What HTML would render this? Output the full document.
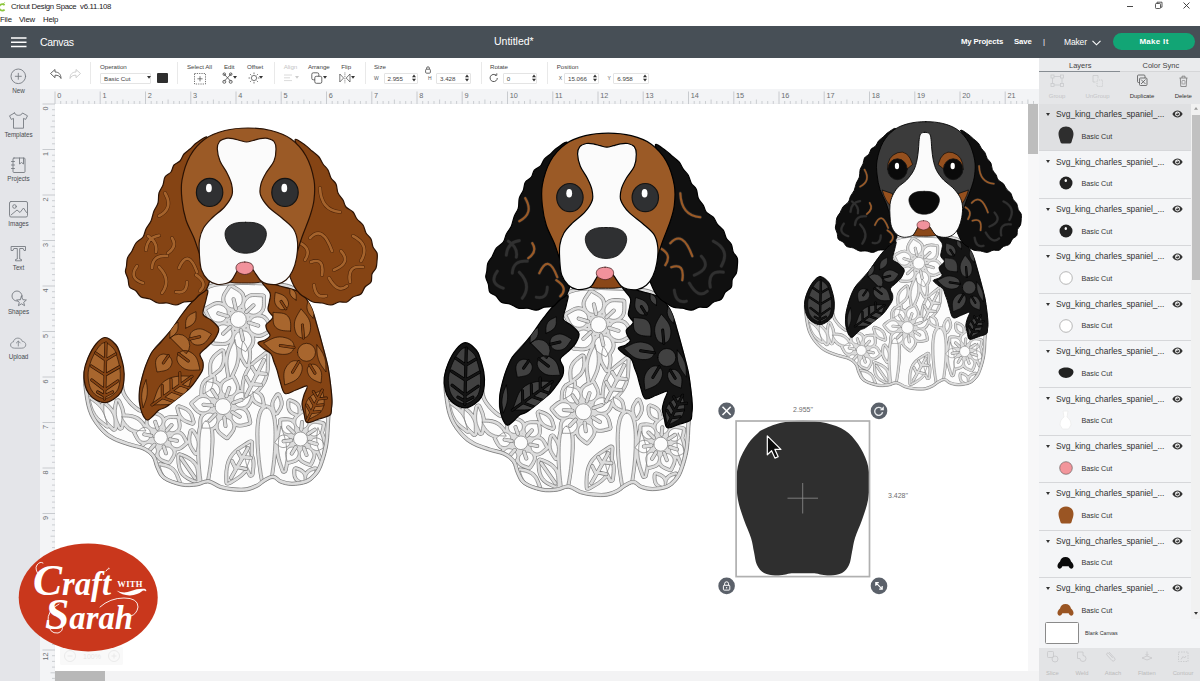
<!DOCTYPE html>
<html lang="en">
<head>
<meta charset="utf-8">
<title>Cricut Design Space</title>
<style>
*{box-sizing:border-box;margin:0;padding:0}
html,body{width:1200px;height:681px;overflow:hidden;background:#fff;font-family:"Liberation Sans",sans-serif;color:#333}
.abs{position:absolute}
#titlebar{left:0;top:0;width:1200px;height:26.300px;background:#fff}
#titlebar .t{left:11px;top:1.5px;font-size:7.8px;color:#222;line-height:10px;letter-spacing:-0.3px;white-space:nowrap}
#titlebar .m{top:15px;font-size:7.8px;color:#222;line-height:10px;letter-spacing:-0.2px}
#header{left:0;top:26.300px;width:1200px;height:31.400px;background:#474f56}
#header .canvas{left:40px;top:9.3px;font-size:10.5px;color:#fff;line-height:12px;letter-spacing:-0.3px}
#header .title{left:494px;top:9px;font-size:10.5px;color:#fff;line-height:12px}
#header .lnk{top:10.5px;font-size:7.8px;color:#fff;line-height:10px;font-weight:bold;letter-spacing:-0.15px}
#makeit{left:1113px;top:7px;width:82px;height:17px;border-radius:9px;background:#12a575;color:#fff;font-size:8px;font-weight:bold;text-align:center;line-height:17px;letter-spacing:.3px}
#sidebar{left:0;top:58px;width:40px;height:623px;background:#e4e5e9}
#sidebar .lbl{left:0;width:37px;text-align:center;font-size:6.3px;letter-spacing:-0.05px;color:#484c50;line-height:7px}
#toolbar{left:40px;top:58px;width:999px;height:30px;background:#fff}
#toolbar .lab{font-size:6.2px;color:#444;line-height:7px;top:4.5px;white-space:nowrap;letter-spacing:-0.05px}
#toolbar .inp{top:15px;height:10.5px;border:0.6px solid #e4e4e4;border-radius:1px;font-size:6.2px;line-height:9.5px;color:#444;padding-left:3px;background:#fff}
#toolbar .sm{font-size:5px;color:#555;line-height:7px;top:17.3px}
#toolbar .sep{top:4px;width:1px;height:22px;background:#e9e9e9}
#hruler{left:40px;top:88.500px;width:999px;height:15.800px;background:#f3f4f6}
#vruler{left:40px;top:104px;width:15.300px;height:577px;background:#f3f4f6}
#canvas{left:55px;top:104px;width:973px;height:567px;background:#fff}
#vscroll{left:1028px;top:104px;width:11px;height:567px;background:#f7f7f8}
#vscroll .th{left:0.300px;top:0;width:10.200px;height:50.300px;background:#bdbdbd}
#hscroll{left:55px;top:670.500px;width:984px;height:10.500px;background:#f3f3f4}
#hscroll .th{left:0;top:0.300px;width:50.300px;height:10.200px;background:#b8b8b8}
#panel{left:1039px;top:57.700px;width:161px;height:623.300px;background:#e5e6e8}
#panel .tab{top:3.3px;font-size:7.5px;color:#444;line-height:9px}
#panel .act{top:35px;font-size:6px;letter-spacing:-0.05px;line-height:7px;color:#333;text-align:center;width:40px}
.layer{left:0;width:152px;height:47.4px;border-bottom:1px solid #d6d7da;background:#f4f5f7}
.layer.sel{background:#dfe0e2}
.layer .nm{left:17px;top:5.3px;font-size:8.45px;color:#333;line-height:10px;letter-spacing:-0.05px;white-space:nowrap}
.layer .bc{left:42.500px;top:28.800px;font-size:7.2px;color:#333;line-height:8px}
.layer .tri{left:6.5px;top:9px;width:0;height:0;border-left:2.2px solid transparent;border-right:2.2px solid transparent;border-top:3px solid #333}
#pscroll{left:1191px;top:104px;width:9px;height:515px;background:#f1f1f1}
#pscroll .th{left:0.800px;top:11.700px;width:8.200px;height:164.500px;background:#c1c1c1}
#blank{left:0;top:561px;width:161px;height:29.5px;background:#f4f5f7}
#bottomacts{left:0;top:590.5px;width:161px;height:32.5px;background:#e3e4e6}
#bottomacts .a{top:21.500px;font-size:5.800px;color:#bbb;line-height:7px;width:30px;text-align:center}
svg{position:absolute;overflow:visible}
</style>
</head>
<body>
<div id="titlebar" class="abs">
  <svg style="left:-3.500px;top:2px" width="10" height="10" viewBox="0 0 10 10"><path d="M7.600 3.200A3.200 3.200 0 1 0 7.600 7.600" fill="none" stroke="#8cc63f" stroke-width="1.700"/><path d="M5.500 2.800L7.800 0.300" stroke="#8cc63f" stroke-width="0.800" fill="none"/></svg>
  <div class="abs t">Cricut Design Space&nbsp; v6.11.108</div>
  <div class="abs m" style="left:0">File</div><div class="abs m" style="left:19px">View</div><div class="abs m" style="left:43px">Help</div>
  <svg style="left:1125px;top:0" width="75" height="12" viewBox="0 0 75 12"><path d="M2 6.5h6" stroke="#333" stroke-width="0.9"/><rect x="30.5" y="3.5" width="5" height="5" fill="none" stroke="#333" stroke-width="0.8" rx="0.8"/><path d="M32 3.5v-1.3h5v5h-1.5" fill="none" stroke="#333" stroke-width="0.8"/><path d="M58.500 2.500l6 6m0-6l-6 6" stroke="#333" stroke-width="0.9"/></svg>
</div>
<div id="header" class="abs">
  <svg style="left:11px;top:11px" width="16" height="11" viewBox="0 0 16 11"><path d="M0 1h15.500M0 5.300h15.500M0 9.600h15.500" stroke="#fff" stroke-width="1.500"/></svg>
  <div class="abs canvas">Canvas</div>
  <div class="abs title">Untitled*</div>
  <div class="abs lnk" style="left:961px">My Projects</div>
  <div class="abs lnk" style="left:1014px">Save</div>
  <div class="abs lnk" style="left:1043px;font-weight:normal">|</div>
  <div class="abs lnk" style="left:1064px;font-weight:normal;font-size:8.500px">Maker</div>
  <svg style="left:1092px;top:14px" width="9" height="6" viewBox="0 0 9 6"><path d="M0.500 0.800L4.500 4.800L8.500 0.800" fill="none" stroke="#fff" stroke-width="1.100"/></svg>
  <div id="makeit" class="abs">Make It</div>
</div>
<div id="sidebar" class="abs">
<svg style="left:0;top:0" width="40" height="330" viewBox="0 58 40 330" fill="none" stroke="#767b81" stroke-width="0.9" stroke-linecap="round" stroke-linejoin="round"><circle cx="18.300" cy="76.300" r="7.300"/><path d="M15.300 76.300h6M18.300 73.300v6"/><path d="M14.500 113l-5 2.800 1.800 3.600 2.200-1v9.800h10v-9.800l2.200 1 1.800-3.600-5-2.800c-.8 1.700-2 2.300-4 2.300s-3.200-.6-4-2.300z"/><rect x="13" y="158" width="12" height="14.500" rx="1"/><path d="M19.500 158v6l2-1.500 2 1.500v-6M11.500 161.500h3M11.500 165h3M11.500 168.500h3"/><rect x="9.500" y="201.500" width="18" height="15.500" rx="1.500"/><circle cx="14.500" cy="206.500" r="1.800"/><path d="M11 215l6-5 3 2.500 3.500-4.500 3 4.500"/><path d="M11.500 246.500h14v4h-1.500l-.8-2h-3.500v10.500l1.800.5v1.300h-6v-1.300l1.800-.5v-10.500h-3.500l-.8 2h-1.500z"/><circle cx="17" cy="296" r="5"/><path d="M21.500 296.500l1.400 3.200 3.500.3-2.700 2.300.9 3.400-3.100-1.900-3.100 1.900.9-3.400-2.700-2.300 3.500-.3z" fill="#e4e5e9"/><g transform="translate(18.300 343) scale(0.86) translate(-18.300 -343)"><path d="M13.500 349c-2.500 0-4.200-1.600-4.200-3.700 0-2 1.500-3.400 3.300-3.600.4-2.600 2.500-4.400 5.200-4.400 2.500 0 4.500 1.500 5.100 3.800 2.300.1 4.100 1.800 4.100 4 0 2.200-1.800 3.900-4.200 3.900z"/><path d="M18.300 346.500v-5.500M16 343l2.300-2.300 2.300 2.300"/></g></svg>
<div class="abs lbl" style="top:29.099999999999998px">New</div>
<div class="abs lbl" style="top:73.3px">Templates</div>
<div class="abs lbl" style="top:117.3px">Projects</div>
<div class="abs lbl" style="top:161.8px">Images</div>
<div class="abs lbl" style="top:205.8px">Text</div>
<div class="abs lbl" style="top:250.3px">Shapes</div>
<div class="abs lbl" style="top:294.8px">Upload</div>
</div>
<div id="toolbar" class="abs">
<svg style="left:9px;top:10px" width="34" height="12" viewBox="49 68 34 12" fill="none" stroke-linejoin="round" stroke-width="0.9"><path d="M50.500 73.500l4.500-4v2.500c3.500 0 6 2 6 6.500-1.200-2.500-3-3.300-6-3.300v2.500z" stroke="#555"/><path d="M80.500 73.500l-4.500-4v2.500c-3.500 0-6 2-6 6.500 1.200-2.500 3-3.300 6-3.300v2.500z" stroke="#c8c8c8"/></svg>
<div class="abs sep" style="left:50px"></div>
<div class="abs lab" style="left:60px;">Operation</div>
<div class="abs inp" style="left:60px;width:51px">Basic Cut</div>
<svg style="left:106.5px;top:17.5px" width="4" height="3" viewBox="0 0 4 3"><path d="M0 0h4L2 2.800z" fill="#333"/></svg>
<div class="abs" style="left:116.700px;top:14.500px;width:11.300px;height:10.700px;background:#2f2f2f;border-radius:1px"></div>
<div class="abs sep" style="left:137px"></div>
<div class="abs lab" style="left:147px;">Select All</div>
<svg style="left:153.500px;top:14.500px" width="12" height="11.500" viewBox="0 0 12 11.500" fill="none" stroke="#444" stroke-width="0.700"><rect x="0.500" y="0.500" width="11" height="10.500" stroke-dasharray="1.300 1"/><path d="M6 3.200v5.200M3.400 5.800h5.200"/></svg>
<div class="abs lab" style="left:184px;">Edit</div>
<svg style="left:182px;top:14px" width="11" height="12" viewBox="0 0 11 12" fill="none" stroke="#444" stroke-width="0.800"><path d="M1.500 1.500l7.500 8M9.500 1.500l-7.500 8"/><circle cx="2.300" cy="9.800" r="1.500"/><circle cx="8.700" cy="9.800" r="1.500"/><circle cx="2.300" cy="2.200" r="1.300"/><circle cx="8.700" cy="2.200" r="1.300"/></svg>
<svg style="left:193px;top:17.5px" width="4" height="3" viewBox="0 0 4 3"><path d="M0 0h4L2 2.800z" fill="#333"/></svg>
<div class="abs lab" style="left:207px;">Offset</div>
<svg style="left:207.500px;top:14px" width="12" height="12" viewBox="0 0 12 12" fill="none" stroke="#444" stroke-width="0.700"><circle cx="6" cy="6" r="2.600"/><path d="M6 0.500v1.700M6 9.800v1.700M0.500 6h1.700M9.800 6h1.700M2.100 2.100l1.200 1.200M8.700 8.700l1.200 1.200M2.100 9.900l1.200-1.200M8.700 3.300l1.200-1.200"/></svg>
<svg style="left:218.5px;top:17.5px" width="4" height="3" viewBox="0 0 4 3"><path d="M0 0h4L2 2.800z" fill="#333"/></svg>
<div class="abs sep" style="left:233.7px"></div>
<div class="abs lab" style="left:243.7px;color:#c4c4c4">Align</div>
<svg style="left:244px;top:16px" width="9" height="8" viewBox="0 0 9 8" stroke="#d0d0d0" stroke-width="0.800"><path d="M0 1h8M0 3.800h6M0 6.600h8"/></svg>
<svg style="left:255px;top:17.5px" width="4" height="3" viewBox="0 0 4 3"><path d="M0 0h4L2 2.800z" fill="#ccc"/></svg>
<div class="abs lab" style="left:268px;">Arrange</div>
<svg style="left:271px;top:14px" width="12" height="13" viewBox="0 0 12 13" fill="#fff" stroke="#444" stroke-width="0.800"><rect x="0.800" y="0.800" width="7" height="7" rx="1.500"/><rect x="3.800" y="4.300" width="7" height="7" rx="1.500"/></svg>
<svg style="left:282.5px;top:17.5px" width="4" height="3" viewBox="0 0 4 3"><path d="M0 0h4L2 2.800z" fill="#333"/></svg>
<div class="abs lab" style="left:301.3px;">Flip</div>
<svg style="left:298.500px;top:14px" width="12" height="12" viewBox="0 0 12 12" fill="none" stroke="#444" stroke-width="0.700"><path d="M0.800 2l3.800 4-3.800 4zM11 2L7.200 6 11 10z"/><path d="M5.900 0.500v11" stroke-dasharray="1 0.800"/></svg>
<svg style="left:310.5px;top:17.5px" width="4" height="3" viewBox="0 0 4 3"><path d="M0 0h4L2 2.800z" fill="#333"/></svg>
<div class="abs sep" style="left:324.5px"></div>
<div class="abs lab" style="left:334px;">Size</div>
<div class="abs sm" style="left:334px">W</div>
<div class="abs inp" style="left:343.5px;width:34px">2.955</div>
<svg style="left:372px;top:16.300px" width="4" height="8" viewBox="0 0 4 8"><path d="M0 3.200L2 0.600 4 3.200zM0 4.800L2 7.400 4 4.800z" fill="#333"/></svg>
<svg style="left:384.800px;top:8px" width="6" height="8" viewBox="0 0 6 8" fill="none" stroke="#444" stroke-width="0.800"><rect x="0.600" y="3.200" width="4.800" height="4" rx="1"/><path d="M1.600 3.200v-1a1.400 1.400 0 0 1 2.800 0v1"/></svg>
<div class="abs sm" style="left:388px">H</div>
<div class="abs inp" style="left:396px;width:34.7px">3.428</div>
<svg style="left:425px;top:16.300px" width="4" height="8" viewBox="0 0 4 8"><path d="M0 3.200L2 0.600 4 3.200zM0 4.800L2 7.400 4 4.800z" fill="#333"/></svg>
<div class="abs sep" style="left:440.5px"></div>
<div class="abs lab" style="left:450px;">Rotate</div>
<svg style="left:449px;top:15px" width="10" height="10" viewBox="0 0 10 10" fill="none" stroke="#444" stroke-width="0.900"><path d="M8.300 5a3.600 3.600 0 1 1-1.200-2.700"/><path d="M5.800 2.300h2v-2" stroke-width="0.800"/></svg>
<div class="abs inp" style="left:462.7px;width:34.6px">0</div>
<svg style="left:491.5px;top:16.300px" width="4" height="8" viewBox="0 0 4 8"><path d="M0 3.200L2 0.600 4 3.200zM0 4.800L2 7.400 4 4.800z" fill="#333"/></svg>
<div class="abs sep" style="left:506.70000000000005px"></div>
<div class="abs lab" style="left:516.8px;">Position</div>
<div class="abs sm" style="left:518.7px">X</div>
<div class="abs inp" style="left:524px;width:34.7px">15.066</div>
<svg style="left:553px;top:16.300px" width="4" height="8" viewBox="0 0 4 8"><path d="M0 3.200L2 0.600 4 3.200zM0 4.800L2 7.400 4 4.800z" fill="#333"/></svg>
<div class="abs sm" style="left:567.5px">Y</div>
<div class="abs inp" style="left:573.3px;width:35.5px">6.958</div>
<svg style="left:603px;top:16.300px" width="4" height="8" viewBox="0 0 4 8"><path d="M0 3.200L2 0.600 4 3.200zM0 4.800L2 7.400 4 4.800z" fill="#333"/></svg>
</div>
<div id="hruler" class="abs"></div><div id="vruler" class="abs"></div>
<svg style="left:0;top:0" width="1200" height="681" viewBox="0 0 1200 681">
<path d="M60.7 104.500v-3.500M66.3 104.500v-3.500M72.0 104.500v-3.500M77.6 104.500v-5M83.3 104.500v-3.500M88.9 104.500v-3.500M94.6 104.500v-3.500M105.9 104.500v-3.500M111.6 104.500v-3.500M117.2 104.500v-3.500M122.9 104.500v-5M128.5 104.500v-3.500M134.2 104.500v-3.500M139.8 104.500v-3.500M151.2 104.500v-3.500M156.8 104.500v-3.500M162.5 104.500v-3.500M168.1 104.500v-5M173.8 104.500v-3.500M179.4 104.500v-3.500M185.1 104.500v-3.500M196.4 104.500v-3.500M202.1 104.500v-3.500M207.7 104.500v-3.500M213.4 104.500v-5M219.0 104.500v-3.500M224.7 104.500v-3.500M230.3 104.500v-3.500M241.7 104.500v-3.500M247.3 104.500v-3.500M253.0 104.500v-3.500M258.6 104.500v-5M264.3 104.500v-3.500M269.9 104.500v-3.500M275.6 104.500v-3.500M286.9 104.500v-3.500M292.6 104.500v-3.500M298.2 104.500v-3.500M303.9 104.500v-5M309.5 104.500v-3.500M315.2 104.500v-3.500M320.8 104.500v-3.500M332.2 104.500v-3.500M337.8 104.500v-3.500M343.5 104.500v-3.500M349.1 104.500v-5M354.8 104.500v-3.500M360.4 104.500v-3.500M366.1 104.500v-3.500M377.4 104.500v-3.500M383.1 104.500v-3.500M388.7 104.500v-3.500M394.4 104.500v-5M400.0 104.500v-3.500M405.7 104.500v-3.500M411.3 104.500v-3.500M422.7 104.500v-3.500M428.3 104.500v-3.500M434.0 104.500v-3.500M439.6 104.500v-5M445.3 104.500v-3.500M450.9 104.500v-3.500M456.6 104.500v-3.500M467.9 104.500v-3.500M473.6 104.500v-3.500M479.2 104.500v-3.500M484.9 104.500v-5M490.5 104.500v-3.500M496.2 104.500v-3.500M501.8 104.500v-3.500M513.2 104.500v-3.500M518.8 104.500v-3.500M524.5 104.500v-3.500M530.1 104.500v-5M535.8 104.500v-3.500M541.4 104.500v-3.500M547.1 104.500v-3.500M558.4 104.500v-3.500M564.1 104.500v-3.500M569.7 104.500v-3.500M575.4 104.500v-5M581.0 104.500v-3.500M586.7 104.500v-3.500M592.3 104.500v-3.500M603.7 104.500v-3.500M609.3 104.500v-3.500M615.0 104.500v-3.500M620.6 104.500v-5M626.3 104.500v-3.500M631.9 104.500v-3.500M637.6 104.500v-3.500M648.9 104.500v-3.500M654.6 104.500v-3.500M660.2 104.500v-3.500M665.9 104.500v-5M671.5 104.500v-3.500M677.2 104.500v-3.500M682.8 104.500v-3.500M694.2 104.500v-3.500M699.8 104.500v-3.500M705.5 104.500v-3.500M711.1 104.500v-5M716.8 104.500v-3.500M722.4 104.500v-3.500M728.1 104.500v-3.500M739.4 104.500v-3.500M745.1 104.500v-3.500M750.7 104.500v-3.500M756.4 104.500v-5M762.0 104.500v-3.500M767.7 104.500v-3.500M773.3 104.500v-3.500M784.7 104.500v-3.500M790.3 104.500v-3.500M796.0 104.500v-3.500M801.6 104.500v-5M807.3 104.500v-3.500M812.9 104.500v-3.500M818.6 104.500v-3.500M829.9 104.500v-3.500M835.6 104.500v-3.500M841.2 104.500v-3.500M846.9 104.500v-5M852.5 104.500v-3.500M858.2 104.500v-3.500M863.8 104.500v-3.500M875.2 104.500v-3.500M880.8 104.500v-3.500M886.5 104.500v-3.500M892.1 104.500v-5M897.8 104.500v-3.500M903.4 104.500v-3.500M909.1 104.500v-3.500M920.4 104.500v-3.500M926.1 104.500v-3.500M931.7 104.500v-3.500M937.4 104.500v-5M943.0 104.500v-3.500M948.7 104.500v-3.500M954.3 104.500v-3.500M965.7 104.500v-3.500M971.3 104.500v-3.500M977.0 104.500v-3.500M982.6 104.500v-5M988.3 104.500v-3.500M993.9 104.500v-3.500M999.6 104.500v-3.500M1010.9 104.500v-3.500M1016.6 104.500v-3.500M1022.2 104.500v-3.500M1027.9 104.500v-5M1033.5 104.500v-3.500M55.500 109.7h-3.500M55.500 115.4h-3.500M55.500 121.1h-3.500M55.500 126.8h-5M55.500 132.4h-3.500M55.500 138.1h-3.500M55.500 143.8h-3.500M55.500 155.2h-3.500M55.500 160.9h-3.500M55.500 166.6h-3.500M55.500 172.2h-5M55.500 177.9h-3.500M55.500 183.6h-3.500M55.500 189.3h-3.500M55.500 200.7h-3.500M55.500 206.4h-3.500M55.500 212.1h-3.500M55.500 217.8h-5M55.500 223.4h-3.500M55.500 229.1h-3.500M55.500 234.8h-3.500M55.500 246.2h-3.500M55.500 251.9h-3.500M55.500 257.6h-3.500M55.500 263.2h-5M55.500 268.9h-3.500M55.500 274.6h-3.500M55.500 280.3h-3.500M55.500 291.7h-3.500M55.500 297.4h-3.500M55.500 303.1h-3.500M55.500 308.8h-5M55.500 314.4h-3.500M55.500 320.1h-3.500M55.500 325.8h-3.500M55.500 337.2h-3.500M55.500 342.9h-3.500M55.500 348.6h-3.500M55.500 354.2h-5M55.500 359.9h-3.500M55.500 365.6h-3.500M55.500 371.3h-3.500M55.500 382.7h-3.500M55.500 388.4h-3.500M55.500 394.1h-3.500M55.500 399.8h-5M55.500 405.4h-3.500M55.500 411.1h-3.500M55.500 416.8h-3.500M55.500 428.2h-3.500M55.500 433.9h-3.500M55.500 439.6h-3.500M55.500 445.2h-5M55.500 450.9h-3.500M55.500 456.6h-3.500M55.500 462.3h-3.500M55.500 473.7h-3.500M55.500 479.4h-3.500M55.500 485.1h-3.500M55.500 490.8h-5M55.500 496.4h-3.500M55.500 502.1h-3.500M55.500 507.8h-3.500M55.500 519.2h-3.500M55.500 524.9h-3.500M55.500 530.6h-3.500M55.500 536.2h-5M55.500 541.9h-3.500M55.500 547.6h-3.500M55.500 553.3h-3.500M55.500 564.7h-3.500M55.500 570.4h-3.500M55.500 576.1h-3.500M55.500 581.8h-5M55.500 587.4h-3.500M55.500 593.1h-3.500M55.500 598.8h-3.500M55.500 610.2h-3.500M55.500 615.9h-3.500M55.500 621.6h-3.500M55.500 627.2h-5M55.500 632.9h-3.500M55.500 638.6h-3.500M55.500 644.3h-3.500M55.500 655.7h-3.500M55.500 661.4h-3.500M55.500 667.1h-3.500M55.500 672.8h-5M55.500 678.4h-3.500" stroke="#b9bdc2" stroke-width="0.700" fill="none"/>
<path d="M55 104.200H1039M55.200 104V681" stroke="#dfe1e5" stroke-width="0.600" fill="none"/>
<path d="M55.0 104v-12.500M100.2 104v-12.500M145.5 104v-12.500M190.8 104v-12.500M236.0 104v-12.500M281.2 104v-12.500M326.5 104v-12.500M371.8 104v-12.500M417.0 104v-12.500M462.2 104v-12.500M507.5 104v-12.500M552.8 104v-12.500M598.0 104v-12.500M643.2 104v-12.500M688.5 104v-12.500M733.8 104v-12.500M779.0 104v-12.500M824.2 104v-12.500M869.5 104v-12.500M914.8 104v-12.500M960.0 104v-12.500M1005.2 104v-12.500M55 104.0h-12.500M55 149.5h-12.500M55 195.0h-12.500M55 240.5h-12.500M55 286.0h-12.500M55 331.5h-12.500M55 377.0h-12.500M55 422.5h-12.500M55 468.0h-12.500M55 513.5h-12.500M55 559.0h-12.500M55 604.5h-12.500M55 650.0h-12.500" stroke="#bcc0c5" stroke-width="0.800" fill="none"/>
<g font-family="Liberation Sans, sans-serif" font-size="7.300" fill="#6a6e72">
<text x="57.3" y="98">0</text>
<text x="102.5" y="98">1</text>
<text x="147.8" y="98">2</text>
<text x="193.1" y="98">3</text>
<text x="238.3" y="98">4</text>
<text x="283.6" y="98">5</text>
<text x="328.8" y="98">6</text>
<text x="374.1" y="98">7</text>
<text x="419.3" y="98">8</text>
<text x="464.6" y="98">9</text>
<text x="509.8" y="98">10</text>
<text x="555.0" y="98">11</text>
<text x="600.3" y="98">12</text>
<text x="645.5" y="98">13</text>
<text x="690.8" y="98">14</text>
<text x="736.0" y="98">15</text>
<text x="781.3" y="98">16</text>
<text x="826.5" y="98">17</text>
<text x="871.8" y="98">18</text>
<text x="917.0" y="98">19</text>
<text x="962.3" y="98">20</text>
<text x="1007.5" y="98">21</text>
<text transform="translate(48.300,110.5) rotate(-90)">0</text>
<text transform="translate(48.300,156.0) rotate(-90)">1</text>
<text transform="translate(48.300,201.5) rotate(-90)">2</text>
<text transform="translate(48.300,247.0) rotate(-90)">3</text>
<text transform="translate(48.300,292.5) rotate(-90)">4</text>
<text transform="translate(48.300,338.0) rotate(-90)">5</text>
<text transform="translate(48.300,383.5) rotate(-90)">6</text>
<text transform="translate(48.300,429.0) rotate(-90)">7</text>
<text transform="translate(48.300,474.5) rotate(-90)">8</text>
<text transform="translate(48.300,520.0) rotate(-90)">9</text>
<text transform="translate(48.300,569.5) rotate(-90)">10</text>
<text transform="translate(48.300,615.0) rotate(-90)">11</text>
<text transform="translate(48.300,660.5) rotate(-90)">12</text>
</g></svg>
<div id="canvas" class="abs"></div>
<div id="vscroll" class="abs"><div class="abs th"></div></div>
<div id="hscroll" class="abs"><div class="abs th"></div></div>
<div id="panel" class="abs">
<div class="abs" style="left:0;top:0;width:161px;height:14px;background:#eaebed"></div>
<div class="abs tab" style="left:30px">Layers</div><div class="abs tab" style="left:103.500px">Color Sync</div>
<div class="abs" style="left:0;top:13px;width:81px;height:1.200px;background:#868c92"></div>
<div class="abs" style="left:81px;top:13.600px;width:80px;height:0.600px;background:#d5d6d8"></div>
<svg style="left:0;top:14px" width="161" height="32" viewBox="1039 72 161 32" fill="none" stroke-width="0.800"><g stroke="#c9cacc"><rect x="1052.500" y="76.500" width="9.500" height="8.500"/><rect x="1051" y="75" width="3" height="3" fill="#e5e6e8"/><rect x="1060.500" y="75" width="3" height="3" fill="#e5e6e8"/><rect x="1051" y="83.500" width="3" height="3" fill="#e5e6e8"/><rect x="1060.500" y="83.500" width="3" height="3" fill="#e5e6e8"/><path d="M1093 75.500h5v3M1093 75.500v6.500h2.500"/><path d="M1097 80h5.500v6.500h-5.500z" stroke-dasharray="1.200 0.800"/></g><g stroke="#555"><rect x="1137.500" y="75" width="7.500" height="7.500" rx="1"/><rect x="1139.500" y="78" width="7.500" height="7.500" rx="1" fill="#e5e6e8"/><path d="M1141 79.500l4.500 4.500M1145.500 79.500l-4.500 4.500"/></g><g stroke="#777"><path d="M1179.500 78h8M1180.300 78l.5 8.500h5.400l.5-8.500M1182 78v-1.800h3v1.800"/><rect x="1182" y="80.500" width="3" height="3.500" rx="0.500" stroke-width="0.600"/></g></svg>
<div class="abs act" style="left:-2px;color:#c4c5c7">Group</div>
<div class="abs act" style="left:38.5px;color:#c4c5c7">UnGroup</div>
<div class="abs act" style="left:83px;color:#333">Duplicate</div>
<div class="abs act" style="left:124.29999999999995px;color:#333">Delete</div>
<div class="abs" style="left:0;top:46.300px;width:152px;height:514.700px;overflow:hidden">
<div class="abs layer sel" style="top:0.0px"><div class="abs tri"></div><div class="abs nm">Svg_king_charles_spaniel_...</div><svg style="left:133px;top:6.500px" width="11" height="8" viewBox="0 0 11 8"><path d="M0.300 4C2 1.300 3.800 0.500 5.500 0.500S9 1.300 10.700 4C9 6.700 7.200 7.500 5.500 7.500S2 6.700 0.300 4z" fill="#333"/><circle cx="5.500" cy="4" r="2.400" fill="#fff"/><circle cx="5.500" cy="4" r="1.500" fill="#333"/><circle cx="4.900" cy="3.400" r="0.600" fill="#fff"/></svg><svg style="left:18.500px;top:22.500px" width="16" height="18" viewBox="0 0 16 18"><path d="M8 0.500C3.500 0.500 0.500 3.500 0.500 8c0 3 1.300 5 1.800 7.500 0.300 1.500 1 2 2.500 2h6.400c1.500 0 2.200-.5 2.500-2 .5-2.500 1.800-4.500 1.800-7.500C15.500 3.500 12.500 0.500 8 0.500z" fill="#2e2e2e"/></svg><div class="abs bc">Basic Cut</div></div>
<div class="abs layer" style="top:47.4px"><div class="abs tri"></div><div class="abs nm">Svg_king_charles_spaniel_...</div><svg style="left:133px;top:6.500px" width="11" height="8" viewBox="0 0 11 8"><path d="M0.300 4C2 1.300 3.800 0.500 5.500 0.500S9 1.300 10.700 4C9 6.700 7.200 7.500 5.500 7.500S2 6.700 0.300 4z" fill="#333"/><circle cx="5.500" cy="4" r="2.400" fill="#fff"/><circle cx="5.500" cy="4" r="1.500" fill="#333"/><circle cx="4.900" cy="3.400" r="0.600" fill="#fff"/></svg><svg style="left:20px;top:25px" width="14" height="14" viewBox="0 0 14 14"><circle cx="7" cy="7" r="6.500" fill="#222"/><ellipse cx="6.800" cy="4.500" rx="1.200" ry="1.600" fill="#fff"/></svg><div class="abs bc">Basic Cut</div></div>
<div class="abs layer" style="top:94.8px"><div class="abs tri"></div><div class="abs nm">Svg_king_charles_spaniel_...</div><svg style="left:133px;top:6.500px" width="11" height="8" viewBox="0 0 11 8"><path d="M0.300 4C2 1.300 3.800 0.500 5.500 0.500S9 1.300 10.700 4C9 6.700 7.200 7.500 5.500 7.500S2 6.700 0.300 4z" fill="#333"/><circle cx="5.500" cy="4" r="2.400" fill="#fff"/><circle cx="5.500" cy="4" r="1.500" fill="#333"/><circle cx="4.900" cy="3.400" r="0.600" fill="#fff"/></svg><svg style="left:20px;top:25px" width="14" height="14" viewBox="0 0 14 14"><circle cx="7" cy="7" r="6.500" fill="#222"/><ellipse cx="6.800" cy="4.500" rx="1.200" ry="1.600" fill="#fff"/></svg><div class="abs bc">Basic Cut</div></div>
<div class="abs layer" style="top:142.2px"><div class="abs tri"></div><div class="abs nm">Svg_king_charles_spaniel_...</div><svg style="left:133px;top:6.500px" width="11" height="8" viewBox="0 0 11 8"><path d="M0.300 4C2 1.300 3.800 0.500 5.500 0.500S9 1.300 10.700 4C9 6.700 7.200 7.500 5.500 7.500S2 6.700 0.300 4z" fill="#333"/><circle cx="5.500" cy="4" r="2.400" fill="#fff"/><circle cx="5.500" cy="4" r="1.500" fill="#333"/><circle cx="4.900" cy="3.400" r="0.600" fill="#fff"/></svg><svg style="left:20px;top:25px" width="14" height="14" viewBox="0 0 14 14"><circle cx="7" cy="7" r="6.300" fill="#fff" stroke="#999" stroke-width="0.700"/></svg><div class="abs bc">Basic Cut</div></div>
<div class="abs layer" style="top:189.6px"><div class="abs tri"></div><div class="abs nm">Svg_king_charles_spaniel_...</div><svg style="left:133px;top:6.500px" width="11" height="8" viewBox="0 0 11 8"><path d="M0.300 4C2 1.300 3.800 0.500 5.500 0.500S9 1.300 10.700 4C9 6.700 7.200 7.500 5.500 7.500S2 6.700 0.300 4z" fill="#333"/><circle cx="5.500" cy="4" r="2.400" fill="#fff"/><circle cx="5.500" cy="4" r="1.500" fill="#333"/><circle cx="4.900" cy="3.400" r="0.600" fill="#fff"/></svg><svg style="left:20px;top:25px" width="14" height="14" viewBox="0 0 14 14"><circle cx="7" cy="7" r="6.300" fill="#fff" stroke="#999" stroke-width="0.700"/></svg><div class="abs bc">Basic Cut</div></div>
<div class="abs layer" style="top:237.0px"><div class="abs tri"></div><div class="abs nm">Svg_king_charles_spaniel_...</div><svg style="left:133px;top:6.500px" width="11" height="8" viewBox="0 0 11 8"><path d="M0.300 4C2 1.300 3.800 0.500 5.500 0.500S9 1.300 10.700 4C9 6.700 7.200 7.500 5.500 7.500S2 6.700 0.300 4z" fill="#333"/><circle cx="5.500" cy="4" r="2.400" fill="#fff"/><circle cx="5.500" cy="4" r="1.500" fill="#333"/><circle cx="4.900" cy="3.400" r="0.600" fill="#fff"/></svg><svg style="left:19px;top:26.500px" width="16" height="12" viewBox="0 0 16 12"><path d="M8 0.500c4 0 7.500 1.500 7.500 4.500S11.500 11 8 11 .5 8 .5 5 4 .5 8 .5z" fill="#222"/></svg><div class="abs bc">Basic Cut</div></div>
<div class="abs layer" style="top:284.4px"><div class="abs tri"></div><div class="abs nm">Svg_king_charles_spaniel_...</div><svg style="left:133px;top:6.500px" width="11" height="8" viewBox="0 0 11 8"><path d="M0.300 4C2 1.300 3.800 0.500 5.500 0.500S9 1.300 10.700 4C9 6.700 7.200 7.500 5.500 7.500S2 6.700 0.300 4z" fill="#333"/><circle cx="5.500" cy="4" r="2.400" fill="#fff"/><circle cx="5.500" cy="4" r="1.500" fill="#333"/><circle cx="4.900" cy="3.400" r="0.600" fill="#fff"/></svg><svg style="left:20px;top:22px" width="13" height="20" viewBox="0 0 13 20"><path d="M4 1h5l-1 6c3 2 4 5 4 8l-2.500 4h-6L1 15c0-3 1-6 4-8z" fill="#fff" stroke="#ececec" stroke-width="0.800"/></svg><div class="abs bc">Basic Cut</div></div>
<div class="abs layer" style="top:331.8px"><div class="abs tri"></div><div class="abs nm">Svg_king_charles_spaniel_...</div><svg style="left:133px;top:6.500px" width="11" height="8" viewBox="0 0 11 8"><path d="M0.300 4C2 1.300 3.800 0.500 5.500 0.500S9 1.300 10.700 4C9 6.700 7.200 7.500 5.500 7.500S2 6.700 0.300 4z" fill="#333"/><circle cx="5.500" cy="4" r="2.400" fill="#fff"/><circle cx="5.500" cy="4" r="1.500" fill="#333"/><circle cx="4.900" cy="3.400" r="0.600" fill="#fff"/></svg><svg style="left:20px;top:25px" width="14" height="14" viewBox="0 0 14 14"><circle cx="7" cy="7" r="6.300" fill="#f2959b" stroke="#555" stroke-width="0.600"/></svg><div class="abs bc">Basic Cut</div></div>
<div class="abs layer" style="top:379.2px"><div class="abs tri"></div><div class="abs nm">Svg_king_charles_spaniel_...</div><svg style="left:133px;top:6.500px" width="11" height="8" viewBox="0 0 11 8"><path d="M0.300 4C2 1.300 3.800 0.500 5.500 0.500S9 1.300 10.700 4C9 6.700 7.200 7.500 5.500 7.500S2 6.700 0.300 4z" fill="#333"/><circle cx="5.500" cy="4" r="2.400" fill="#fff"/><circle cx="5.500" cy="4" r="1.500" fill="#333"/><circle cx="4.900" cy="3.400" r="0.600" fill="#fff"/></svg><svg style="left:18.500px;top:22.500px" width="16" height="18" viewBox="0 0 16 18"><path d="M8 0.500C3.500 0.500 0.500 3.500 0.500 8c0 3 1.300 5 1.800 7.500 0.300 1.500 1 2 2.500 2h6.400c1.500 0 2.200-.5 2.500-2 .5-2.500 1.800-4.500 1.800-7.500C15.500 3.500 12.500 0.500 8 0.500z" fill="#9a5523"/></svg><div class="abs bc">Basic Cut</div></div>
<div class="abs layer" style="top:426.6px"><div class="abs tri"></div><div class="abs nm">Svg_king_charles_spaniel_...</div><svg style="left:133px;top:6.500px" width="11" height="8" viewBox="0 0 11 8"><path d="M0.300 4C2 1.300 3.800 0.500 5.500 0.500S9 1.300 10.700 4C9 6.700 7.200 7.500 5.500 7.500S2 6.700 0.300 4z" fill="#333"/><circle cx="5.500" cy="4" r="2.400" fill="#fff"/><circle cx="5.500" cy="4" r="1.500" fill="#333"/><circle cx="4.900" cy="3.400" r="0.600" fill="#fff"/></svg><svg style="left:18px;top:25px" width="17" height="14" viewBox="0 0 17 14"><path d="M8.500 1C5.500 1 3.500 3 3 5.500 1.500 6.500 0.300 8.500 0.500 10.500c.2 1.500 1.500 2.500 3 2 1-.3 1.500-1.200 1.800-2.200h6.400c.3 1 .8 1.900 1.800 2.200 1.500.5 2.800-.5 3-2C16.700 8.500 15.500 6.500 14 5.500 13.500 3 11.500 1 8.500 1z" fill="#0a0a0a"/></svg><div class="abs bc">Basic Cut</div></div>
<div class="abs layer" style="top:474.0px"><div class="abs tri"></div><div class="abs nm">Svg_king_charles_spaniel_...</div><svg style="left:133px;top:6.500px" width="11" height="8" viewBox="0 0 11 8"><path d="M0.300 4C2 1.300 3.800 0.500 5.500 0.500S9 1.300 10.700 4C9 6.700 7.200 7.500 5.500 7.500S2 6.700 0.300 4z" fill="#333"/><circle cx="5.500" cy="4" r="2.400" fill="#fff"/><circle cx="5.500" cy="4" r="1.500" fill="#333"/><circle cx="4.900" cy="3.400" r="0.600" fill="#fff"/></svg><svg style="left:18px;top:25px" width="17" height="14" viewBox="0 0 17 14"><path d="M8.500 1C5.500 1 3.500 3 3 5.500 1.500 6.500 0.300 8.500 0.500 10.500c.2 1.500 1.500 2.500 3 2 1-.3 1.500-1.200 1.800-2.200h6.400c.3 1 .8 1.900 1.800 2.200 1.500.5 2.800-.5 3-2C16.700 8.500 15.500 6.500 14 5.500 13.500 3 11.500 1 8.500 1z" fill="#9a5523"/></svg><div class="abs bc">Basic Cut</div></div>
</div>
<div id="pscroll" class="abs" style="left:152px;top:46px"><div class="abs th"></div><svg style="left:2.500px;top:3px" width="4" height="3" viewBox="0 0 4 3"><path d="M0 2.800h4L2 0z" fill="#999"/></svg><svg style="left:2.500px;top:508px" width="4" height="3" viewBox="0 0 4 3"><path d="M0 0h4L2 2.800z" fill="#333"/></svg></div>
<div id="blank" class="abs"><div class="abs" style="left:6px;top:3px;width:33.500px;height:22.500px;background:#fff;border:0.800px solid #8a8a8a;border-radius:1.500px"></div><div class="abs" style="left:46px;top:11px;font-size:5.300px;line-height:7px;color:#333">Blank Canvas</div></div>
<div id="bottomacts" class="abs">
<svg style="left:0;top:0" width="161" height="20" viewBox="1039 648.500 161 20" fill="none" stroke="#c6c7c9" stroke-width="0.800"><rect x="1047.500" y="652" width="6" height="6" rx="0.800"/><circle cx="1055" cy="659.500" r="3"/><path d="M1077.500 652.500h5.500v3.500a3 3 0 1 1-3 3h-2.500z"/><path d="M1109 652.500l5.500 6a1.800 1.800 0 0 1-2.600 2.500l-5-5.500a1.200 1.200 0 0 1 1.800-1.600l4 4.500"/><path d="M1142 658.500l5 2 5-2-5-2zM1147 652v4M1145.500 654.500l1.500 1.500 1.500-1.500"/><rect x="1178.500" y="652.500" width="9.500" height="9.500" stroke-dasharray="1.500 1"/><path d="M1181 660l2-3 1.500 1.500 1.500-2"/></svg>
<div class="abs a" style="left:-1.599999999999909px">Slice</div>
<div class="abs a" style="left:28px">Weld</div>
<div class="abs a" style="left:59px">Attach</div>
<div class="abs a" style="left:92.79999999999995px">Flatten</div>
<div class="abs a" style="left:129px">Contour</div>
</div>
</div>
<svg style="left:0;top:0" width="1200" height="681" viewBox="0 0 1200 681">
<defs>
<clipPath id="cp"><path d="M193.0 301.0C189.0 304.8 186.7 308.2 183.0 313.0C179.3 317.8 174.7 325.2 171.0 330.0C167.3 334.8 164.2 338.3 161.0 342.0C157.8 345.7 154.5 348.2 152.0 352.0C149.5 355.8 147.7 360.7 146.0 365.0C144.3 369.3 143.1 373.8 142.0 378.0C140.9 382.2 139.9 386.0 139.5 390.0C139.1 394.0 139.1 398.2 139.5 402.0C139.9 405.8 140.8 410.0 142.0 413.0C143.2 416.0 145.2 419.5 147.0 420.0C148.8 420.5 151.0 417.7 153.0 416.0C155.0 414.3 156.8 411.5 159.0 410.0C161.2 408.5 162.8 409.0 166.0 407.0C169.2 405.0 174.0 401.2 178.0 398.0C182.0 394.8 186.8 391.2 190.0 388.0C193.2 384.8 194.9 382.0 197.0 379.0C199.1 376.0 201.5 372.8 202.5 370.0C203.5 367.2 203.4 364.7 203.0 362.0C202.6 359.3 199.3 356.5 200.0 354.0C200.7 351.5 204.8 349.2 207.0 347.0C209.2 344.8 211.5 343.0 213.2 341.0C214.9 339.0 216.1 337.2 217.0 335.0C217.9 332.8 219.5 330.5 218.5 328.0C217.5 325.5 213.6 322.3 211.0 320.0C208.4 317.7 203.8 317.3 203.0 314.0C202.2 310.7 205.3 304.0 206.0 300.0C206.7 296.0 209.2 289.8 207.0 290.0C204.8 290.2 197.0 297.2 193.0 301.0ZM262.0 281.0C263.7 279.8 273.7 284.2 280.0 286.0C286.3 287.8 295.5 289.7 300.0 292.0C304.5 294.3 305.0 297.2 307.0 300.0C309.0 302.8 310.5 305.3 312.0 309.0C313.5 312.7 314.7 317.5 316.0 322.0C317.3 326.5 318.7 331.2 320.0 336.0C321.3 340.8 322.7 345.8 324.0 351.0C325.3 356.2 326.9 361.5 328.0 367.0C329.1 372.5 329.8 378.5 330.5 384.0C331.2 389.5 331.8 396.0 332.0 400.0C332.2 404.0 331.8 405.5 331.5 408.0C331.2 410.5 332.1 413.2 330.0 415.0C327.9 416.8 322.8 417.8 319.0 419.0C315.2 420.2 309.5 423.5 307.0 422.5C304.5 421.5 304.8 416.1 304.0 413.0C303.2 409.9 302.0 407.0 302.0 404.0C302.0 401.0 303.2 398.0 304.0 395.0C304.8 392.0 308.3 386.8 307.0 386.0C305.7 385.2 299.7 388.8 296.0 390.0C292.3 391.2 287.7 395.0 285.0 393.5C282.3 392.0 281.3 384.9 280.0 381.0C278.7 377.1 278.0 373.2 277.0 370.0C276.0 366.8 275.0 364.7 274.0 362.0C273.0 359.3 272.7 356.2 271.0 354.0C269.3 351.8 266.2 350.8 264.0 349.0C261.8 347.2 257.8 344.5 258.0 343.0C258.2 341.5 263.0 341.2 265.0 340.0C267.0 338.8 269.7 337.2 270.0 335.5C270.3 333.8 267.7 331.8 267.0 330.0C266.3 328.2 265.5 326.5 266.0 325.0C266.5 323.5 268.8 322.3 270.0 321.0C271.2 319.7 273.0 318.3 273.0 317.0C273.0 315.7 270.8 314.3 270.0 313.0C269.2 311.7 268.1 311.0 268.0 309.0C267.9 307.0 269.2 303.7 269.5 301.0C269.8 298.3 271.2 296.3 270.0 293.0C268.8 289.7 260.3 282.2 262.0 281.0Z"/></clipPath>
<clipPath id="cb"><path d="M215.0 283.0C200.3 286.2 199.3 294.2 192.0 302.0C184.7 309.8 177.7 321.7 171.0 330.0C164.3 338.3 156.8 344.0 152.0 352.0C147.2 360.0 144.2 370.0 142.0 378.0C139.8 386.0 139.2 394.8 139.0 400.0C138.8 405.2 142.3 408.8 141.0 409.0C139.7 409.2 133.8 404.3 131.0 401.0C128.2 397.7 125.3 394.7 124.0 389.0C122.7 383.3 124.2 374.2 123.0 367.0C121.8 359.8 120.0 350.8 117.0 346.0C114.0 341.2 109.2 337.3 105.0 338.0C100.8 338.7 95.5 344.3 92.0 350.0C88.5 355.7 85.2 364.5 84.0 372.0C82.8 379.5 84.0 387.8 85.0 395.0C86.0 402.2 87.3 409.0 90.0 415.0C92.7 421.0 97.2 426.8 101.0 431.0C104.8 435.2 108.3 437.5 113.0 440.0C117.7 442.5 124.0 444.3 129.0 446.0C134.0 447.7 139.2 448.2 143.0 450.0C146.8 451.8 149.8 454.0 152.0 457.0C154.2 460.0 154.2 464.3 156.0 468.0C157.8 471.7 158.8 476.0 163.0 479.0C167.2 482.0 175.3 484.8 181.0 486.0C186.7 487.2 192.5 486.5 197.0 486.0C201.5 485.5 204.2 482.6 208.0 483.0C211.8 483.4 215.8 487.2 220.0 488.5C224.2 489.8 228.5 490.6 233.0 491.0C237.5 491.4 242.8 491.7 247.0 491.0C251.2 490.3 255.0 488.5 258.0 487.0C261.0 485.5 262.5 483.4 265.0 482.0C267.5 480.6 270.5 478.3 273.0 478.5C275.5 478.7 276.8 481.8 280.0 483.0C283.2 484.2 287.5 485.5 292.0 485.5C296.5 485.5 303.0 484.6 307.0 483.0C311.0 481.4 313.5 478.8 316.0 476.0C318.5 473.2 320.0 471.3 322.0 466.0C324.0 460.7 326.7 452.2 328.0 444.0C329.3 435.8 329.3 424.3 330.0 417.0C330.7 409.7 332.3 408.3 332.0 400.0C331.7 391.7 330.0 377.7 328.0 367.0C326.0 356.3 322.7 345.7 320.0 336.0C317.3 326.3 315.3 316.3 312.0 309.0C308.7 301.7 305.3 296.3 300.0 292.0C294.7 287.7 294.2 284.5 280.0 283.0C265.8 281.5 229.7 279.8 215.0 283.0Z"/></clipPath>
<clipPath id="ct"><path d="M105.0 337.5C101.7 337.3 98.8 340.6 96.0 344.0C93.2 347.4 90.0 353.3 88.0 358.0C86.0 362.7 84.5 367.5 84.0 372.0C83.5 376.5 84.2 381.3 85.0 385.0C85.8 388.7 87.2 391.5 89.0 394.0C90.8 396.5 93.3 398.6 96.0 400.0C98.7 401.4 102.0 402.9 105.0 402.7C108.0 402.5 111.3 400.8 114.0 399.0C116.7 397.2 119.3 395.2 121.0 392.0C122.7 388.8 123.6 384.2 124.0 380.0C124.4 375.8 124.2 371.3 123.5 367.0C122.8 362.7 121.2 357.7 120.0 354.0C118.8 350.3 118.5 347.8 116.0 345.0C113.5 342.2 108.3 337.7 105.0 337.5Z"/></clipPath>
<clipPath id="cv"><rect x="55" y="104" width="973" height="567"/></clipPath>
</defs>
<g clip-path="url(#cv)">
<g transform="translate(0,0) scale(1)" stroke-linejoin="round" stroke-linecap="round">
<path d="M215.0 283.0C200.3 286.2 199.3 294.2 192.0 302.0C184.7 309.8 177.7 321.7 171.0 330.0C164.3 338.3 156.8 344.0 152.0 352.0C147.2 360.0 144.2 370.0 142.0 378.0C139.8 386.0 139.2 394.8 139.0 400.0C138.8 405.2 142.3 408.8 141.0 409.0C139.7 409.2 133.8 404.3 131.0 401.0C128.2 397.7 125.3 394.7 124.0 389.0C122.7 383.3 124.2 374.2 123.0 367.0C121.8 359.8 120.0 350.8 117.0 346.0C114.0 341.2 109.2 337.3 105.0 338.0C100.8 338.7 95.5 344.3 92.0 350.0C88.5 355.7 85.2 364.5 84.0 372.0C82.8 379.5 84.0 387.8 85.0 395.0C86.0 402.2 87.3 409.0 90.0 415.0C92.7 421.0 97.2 426.8 101.0 431.0C104.8 435.2 108.3 437.5 113.0 440.0C117.7 442.5 124.0 444.3 129.0 446.0C134.0 447.7 139.2 448.2 143.0 450.0C146.8 451.8 149.8 454.0 152.0 457.0C154.2 460.0 154.2 464.3 156.0 468.0C157.8 471.7 158.8 476.0 163.0 479.0C167.2 482.0 175.3 484.8 181.0 486.0C186.7 487.2 192.5 486.5 197.0 486.0C201.5 485.5 204.2 482.6 208.0 483.0C211.8 483.4 215.8 487.2 220.0 488.5C224.2 489.8 228.5 490.6 233.0 491.0C237.5 491.4 242.8 491.7 247.0 491.0C251.2 490.3 255.0 488.5 258.0 487.0C261.0 485.5 262.5 483.4 265.0 482.0C267.5 480.6 270.5 478.3 273.0 478.5C275.5 478.7 276.8 481.8 280.0 483.0C283.2 484.2 287.5 485.5 292.0 485.5C296.5 485.5 303.0 484.6 307.0 483.0C311.0 481.4 313.5 478.8 316.0 476.0C318.5 473.2 320.0 471.3 322.0 466.0C324.0 460.7 326.7 452.2 328.0 444.0C329.3 435.8 329.3 424.3 330.0 417.0C330.7 409.7 332.3 408.3 332.0 400.0C331.7 391.7 330.0 377.7 328.0 367.0C326.0 356.3 322.7 345.7 320.0 336.0C317.3 326.3 315.3 316.3 312.0 309.0C308.7 301.7 305.3 296.3 300.0 292.0C294.7 287.7 294.2 284.5 280.0 283.0C265.8 281.5 229.7 279.8 215.0 283.0Z" fill="#fcfcfc"/>
<g clip-path="url(#cb)">
<path d="M230.3 319.5a8 8 0 1 0 16 0a8 8 0 1 0 -16 0ZM235.6 307.8C241.5 306.5 243.0 301.7 241.9 296.7C240.8 292.2 236.5 290.8 230.9 287.3C227.3 292.9 224.1 296.0 225.1 300.5C226.3 305.6 229.7 309.2 235.6 307.8ZM247.1 311.3C251.2 315.7 256.1 314.7 259.9 311.2C263.2 308.0 262.3 303.6 262.4 297.0C255.8 296.7 251.5 295.4 248.1 298.6C244.3 302.1 243.0 306.9 247.1 311.3ZM249.8 323.0C248.0 328.8 251.3 332.5 256.3 334.0C260.7 335.3 264.1 332.3 269.9 329.1C266.8 323.3 265.7 318.9 261.3 317.5C256.4 316.0 251.5 317.3 249.8 323.0ZM241.0 331.2C235.1 332.5 233.6 337.3 234.7 342.3C235.8 346.8 240.1 348.2 245.7 351.7C249.3 346.1 252.5 343.0 251.5 338.5C250.3 333.4 246.9 329.8 241.0 331.2ZM229.5 327.7C225.4 323.3 220.5 324.3 216.7 327.8C213.4 331.0 214.3 335.4 214.2 342.0C220.8 342.3 225.1 343.6 228.5 340.4C232.3 336.9 233.6 332.1 229.5 327.7ZM226.8 316.0C228.6 310.2 225.3 306.5 220.3 305.0C215.9 303.7 212.5 306.7 206.7 309.9C209.8 315.7 210.9 320.1 215.3 321.5C220.2 323.0 225.1 321.7 226.8 316.0ZM215.0 406.6a8 8 0 1 0 16 0a8 8 0 1 0 -16 0ZM216.5 396.5C220.7 393.8 220.5 389.6 218.1 385.8C215.9 382.5 212.1 382.6 206.7 381.4C205.5 386.9 203.9 390.3 206.0 393.7C208.4 397.4 212.2 399.3 216.5 396.5ZM226.8 395.2C231.6 396.8 234.8 394.0 236.2 389.8C237.4 386.0 235.0 383.1 232.5 378.1C227.5 380.6 223.8 381.5 222.5 385.3C221.1 389.5 222.0 393.6 226.8 395.2ZM234.3 402.5C236.0 407.2 240.2 408.0 244.4 406.4C248.1 405.1 248.8 401.4 251.2 396.3C246.1 393.9 243.1 391.6 239.4 392.9C235.2 394.5 232.5 397.7 234.3 402.5ZM233.3 412.8C230.6 417.1 232.6 420.9 236.4 423.2C239.8 425.2 243.2 423.5 248.6 422.2C247.3 416.7 247.3 412.9 243.9 410.9C240.1 408.6 235.9 408.5 233.3 412.8ZM224.5 418.5C219.5 419.1 217.8 423.0 218.4 427.5C218.9 431.4 222.4 432.9 226.8 436.4C230.2 431.9 233.2 429.6 232.7 425.6C232.1 421.2 229.5 417.9 224.5 418.5ZM214.6 415.2C211.0 411.7 206.9 412.8 203.8 416.0C201.1 418.9 202.0 422.5 202.1 428.1C207.7 428.0 211.4 428.9 214.2 426.0C217.3 422.8 218.3 418.7 214.6 415.2ZM211.1 405.4C211.5 400.4 208.1 397.9 203.7 397.5C199.8 397.1 197.5 400.1 193.1 403.7C196.7 408.0 198.4 411.4 202.3 411.8C206.7 412.2 210.6 410.5 211.1 405.4ZM153.8 437.6a6.8 6.8 0 1 0 13.6 0a6.8 6.8 0 1 0 -13.6 0ZM157.2 427.7C161.8 426.1 162.8 422.6 161.7 419.2C160.6 416.2 157.1 415.7 152.5 414.0C149.9 418.2 147.4 420.8 148.4 423.8C149.6 427.2 152.5 429.3 157.2 427.7ZM167.5 429.7C171.2 432.9 174.7 432.1 177.1 429.3C179.1 426.9 177.8 423.7 177.0 418.7C172.0 418.6 168.6 417.8 166.5 420.2C164.1 422.9 163.8 426.5 167.5 429.7ZM170.9 439.6C170.0 444.4 172.5 447.0 176.0 447.7C179.1 448.3 181.3 445.5 185.1 442.4C182.7 438.0 181.8 434.6 178.6 434.0C175.1 433.3 171.8 434.8 170.9 439.6ZM164.0 447.5C159.4 449.1 158.4 452.6 159.5 456.0C160.6 459.0 164.1 459.5 168.7 461.2C171.3 457.0 173.8 454.4 172.8 451.4C171.6 448.0 168.7 445.9 164.0 447.5ZM153.7 445.5C150.0 442.3 146.5 443.1 144.1 445.9C142.1 448.3 143.4 451.5 144.2 456.5C149.2 456.6 152.6 457.4 154.7 455.0C157.1 452.3 157.4 448.7 153.7 445.5ZM150.3 435.6C151.2 430.8 148.7 428.2 145.2 427.5C142.1 426.9 139.9 429.7 136.1 432.8C138.5 437.2 139.4 440.6 142.6 441.2C146.1 441.9 149.4 440.4 150.3 435.6ZM293.5 439.0a7 7 0 1 0 14 0a7 7 0 1 0 -14 0ZM301.4 428.5C305.7 428.9 307.9 426.0 308.2 422.1C308.5 418.7 305.9 416.8 302.8 413.1C299.1 416.2 296.1 417.7 295.8 421.1C295.5 424.9 297.1 428.2 301.4 428.5ZM309.2 433.2C311.6 436.8 315.3 436.6 318.5 434.5C321.3 432.6 321.2 429.3 322.2 424.6C317.4 423.7 314.5 422.3 311.6 424.2C308.4 426.3 306.8 429.6 309.2 433.2ZM310.5 442.2C309.2 446.4 311.6 449.1 315.2 450.3C318.5 451.3 321.0 449.2 325.2 447.0C323.0 442.7 322.3 439.5 319.0 438.5C315.4 437.3 311.8 438.1 310.5 442.2ZM304.2 448.8C300.2 450.4 299.5 454.0 300.9 457.5C302.1 460.7 305.3 461.3 309.7 463.3C311.7 458.9 313.7 456.3 312.5 453.2C311.1 449.6 308.3 447.3 304.2 448.8ZM295.1 448.0C291.4 445.8 288.2 447.6 286.2 450.9C284.5 453.8 286.0 456.7 287.2 461.4C291.9 460.2 295.2 460.1 296.9 457.2C298.9 453.9 298.9 450.2 295.1 448.0ZM290.1 440.4C289.5 436.1 286.1 434.7 282.3 435.2C279.0 435.7 277.7 438.7 274.7 442.6C278.6 445.5 280.7 448.0 284.0 447.5C287.8 447.0 290.7 444.7 290.1 440.4ZM292.9 431.8C295.9 428.6 294.9 425.1 292.1 422.5C289.6 420.1 286.5 421.0 281.7 421.1C281.8 425.9 281.1 429.1 283.6 431.4C286.3 434.1 289.9 434.9 292.9 431.8ZM90.3 399.7C91.1 402.8 92.0 408.6 95.8 414.2C99.2 419.2 101.9 420.3 107.3 424.7C105.2 418.1 105.2 415.2 101.8 410.2C98.0 404.6 92.9 401.6 90.3 399.7ZM104.0 404.5C103.9 407.3 103.1 412.5 105.3 417.8C107.3 422.5 109.8 423.7 114.0 428.0C113.8 422.0 114.7 419.4 112.7 414.7C110.4 409.4 106.1 406.4 104.0 404.5ZM117.8 402.0C117.2 404.6 115.8 409.2 116.4 414.8C116.9 419.8 118.4 421.7 120.5 427.0C121.4 421.3 122.5 419.2 121.9 414.2C121.3 408.6 118.9 404.4 117.8 402.0ZM122.0 417.0C123.6 419.7 126.1 425.2 131.5 428.3C136.3 431.1 139.3 430.3 146.0 431.0C142.1 425.5 141.3 422.5 136.5 419.7C131.1 416.5 125.2 417.1 122.0 417.0ZM160.0 466.0C160.9 468.6 162.0 473.8 166.0 477.4C169.6 480.6 172.4 480.3 178.0 482.0C175.7 476.6 175.6 473.8 172.0 470.6C167.9 467.0 162.7 466.6 160.0 466.0ZM180.0 456.0C180.1 459.6 179.3 466.5 183.1 472.2C186.5 477.2 190.3 477.5 197.0 481.0C196.2 473.5 197.3 469.8 193.9 464.8C190.1 459.2 183.3 457.4 180.0 456.0ZM244.0 399.5C248.6 396.1 257.9 390.9 263.0 380.8C267.6 371.7 265.9 366.4 266.7 354.3C257.5 362.1 252.2 364.0 247.7 373.0C242.6 383.2 244.0 393.8 244.0 399.5ZM228.0 482.0C232.5 479.4 241.6 475.6 246.7 466.8C251.2 459.0 249.6 453.9 250.5 443.0C241.5 449.2 236.3 450.4 231.8 458.2C226.7 467.0 228.0 476.8 228.0 482.0ZM235.0 340.0C233.3 343.5 229.5 349.6 228.3 357.9C227.3 365.3 228.8 368.6 230.0 377.0C233.4 369.2 235.7 366.5 236.7 359.1C237.8 350.7 235.7 343.9 235.0 340.0ZM243.0 341.0C242.4 343.5 240.8 347.9 241.7 353.1C242.5 357.7 244.3 359.3 247.0 364.0C248.0 358.6 249.1 356.5 248.3 351.9C247.4 346.7 244.4 343.1 243.0 341.0ZM284.0 470.0C284.9 465.5 287.2 457.6 286.5 447.7C285.9 438.9 283.9 435.5 281.0 426.0C279.5 435.8 277.9 439.5 278.5 448.3C279.2 458.2 282.5 465.7 284.0 470.0ZM318.0 428.0C317.5 431.1 316.1 436.6 317.0 443.4C317.8 449.4 319.5 451.6 322.0 458.0C322.8 451.2 323.8 448.6 323.0 442.6C322.1 435.9 319.3 430.9 318.0 428.0ZM290.0 402.0C289.9 403.8 289.3 407.2 291.1 409.9C292.7 412.3 294.6 412.4 298.0 414.0C297.8 410.3 298.5 408.5 296.9 406.1C295.1 403.4 291.7 402.6 290.0 402.0ZM296.0 470.0C295.9 471.8 295.3 475.2 297.1 477.9C298.7 480.3 300.6 480.4 304.0 482.0C303.8 478.3 304.5 476.5 302.9 474.1C301.1 471.4 297.7 470.6 296.0 470.0ZM315.0 470.0C313.4 470.5 310.2 471.1 308.2 473.6C306.4 475.8 306.7 477.5 306.0 481.0C309.3 479.6 311.0 479.6 312.8 477.4C314.8 474.9 314.8 471.7 315.0 470.0ZM222.0 352.0C219.8 353.6 215.2 356.2 212.9 361.1C210.9 365.5 211.9 368.1 212.0 374.0C216.5 370.2 219.1 369.3 221.1 364.9C223.3 359.9 222.2 354.8 222.0 352.0ZM213.0 378.0C211.0 379.0 206.9 380.3 204.6 383.9C202.6 387.1 203.3 389.3 203.0 394.0C207.1 391.6 209.4 391.3 211.4 388.1C213.6 384.5 213.0 380.2 213.0 378.0ZM179.0 408.0C179.5 410.1 180.0 414.2 182.9 417.4C185.5 420.2 187.7 420.2 192.0 422.0C190.6 417.6 190.7 415.4 188.1 412.6C185.1 409.5 181.1 408.7 179.0 408.0ZM253.0 392.0C253.2 393.7 253.1 397.1 255.1 399.8C256.9 402.2 258.7 402.4 262.0 404.0C261.3 400.4 261.7 398.6 259.9 396.2C257.9 393.5 254.6 392.7 253.0 392.0ZM246.0 446.0C245.6 449.0 244.4 454.2 245.5 460.5C246.5 466.1 248.3 468.1 251.0 474.0C251.5 467.5 252.5 465.1 251.5 459.5C250.3 453.2 247.4 448.6 246.0 446.0ZM192.0 432.0C191.5 434.2 190.2 438.1 191.1 442.6C191.9 446.6 193.5 447.9 196.0 452.0C196.7 447.3 197.7 445.4 196.9 441.4C196.0 436.9 193.3 433.8 192.0 432.0ZM276.0 412.0C277.1 410.5 279.5 408.0 280.0 404.4C280.4 401.2 279.2 399.7 278.0 396.0C275.9 399.3 274.4 400.4 274.0 403.6C273.6 407.2 275.3 410.3 276.0 412.0ZM266.5 408.0C261.2 408.0 259.0 419.9 259.0 434.4C259.0 459.0 262.4 476.6 266.5 496.0C270.6 476.6 274.0 459.0 274.0 434.4C274.0 419.9 271.8 408.0 266.5 408.0ZM206.0 421.0C202.2 420.9 200.2 430.6 199.9 442.4C199.2 462.6 201.3 477.0 203.8 493.0C207.3 477.2 210.2 462.9 210.8 442.8C211.2 430.9 209.8 421.1 206.0 421.0Z" fill="none" stroke="#7a7a7a" stroke-width="7.2"/><path d="M230.3 319.5a8 8 0 1 0 16 0a8 8 0 1 0 -16 0ZM235.6 307.8C241.5 306.5 243.0 301.7 241.9 296.7C240.8 292.2 236.5 290.8 230.9 287.3C227.3 292.9 224.1 296.0 225.1 300.5C226.3 305.6 229.7 309.2 235.6 307.8ZM247.1 311.3C251.2 315.7 256.1 314.7 259.9 311.2C263.2 308.0 262.3 303.6 262.4 297.0C255.8 296.7 251.5 295.4 248.1 298.6C244.3 302.1 243.0 306.9 247.1 311.3ZM249.8 323.0C248.0 328.8 251.3 332.5 256.3 334.0C260.7 335.3 264.1 332.3 269.9 329.1C266.8 323.3 265.7 318.9 261.3 317.5C256.4 316.0 251.5 317.3 249.8 323.0ZM241.0 331.2C235.1 332.5 233.6 337.3 234.7 342.3C235.8 346.8 240.1 348.2 245.7 351.7C249.3 346.1 252.5 343.0 251.5 338.5C250.3 333.4 246.9 329.8 241.0 331.2ZM229.5 327.7C225.4 323.3 220.5 324.3 216.7 327.8C213.4 331.0 214.3 335.4 214.2 342.0C220.8 342.3 225.1 343.6 228.5 340.4C232.3 336.9 233.6 332.1 229.5 327.7ZM226.8 316.0C228.6 310.2 225.3 306.5 220.3 305.0C215.9 303.7 212.5 306.7 206.7 309.9C209.8 315.7 210.9 320.1 215.3 321.5C220.2 323.0 225.1 321.7 226.8 316.0ZM215.0 406.6a8 8 0 1 0 16 0a8 8 0 1 0 -16 0ZM216.5 396.5C220.7 393.8 220.5 389.6 218.1 385.8C215.9 382.5 212.1 382.6 206.7 381.4C205.5 386.9 203.9 390.3 206.0 393.7C208.4 397.4 212.2 399.3 216.5 396.5ZM226.8 395.2C231.6 396.8 234.8 394.0 236.2 389.8C237.4 386.0 235.0 383.1 232.5 378.1C227.5 380.6 223.8 381.5 222.5 385.3C221.1 389.5 222.0 393.6 226.8 395.2ZM234.3 402.5C236.0 407.2 240.2 408.0 244.4 406.4C248.1 405.1 248.8 401.4 251.2 396.3C246.1 393.9 243.1 391.6 239.4 392.9C235.2 394.5 232.5 397.7 234.3 402.5ZM233.3 412.8C230.6 417.1 232.6 420.9 236.4 423.2C239.8 425.2 243.2 423.5 248.6 422.2C247.3 416.7 247.3 412.9 243.9 410.9C240.1 408.6 235.9 408.5 233.3 412.8ZM224.5 418.5C219.5 419.1 217.8 423.0 218.4 427.5C218.9 431.4 222.4 432.9 226.8 436.4C230.2 431.9 233.2 429.6 232.7 425.6C232.1 421.2 229.5 417.9 224.5 418.5ZM214.6 415.2C211.0 411.7 206.9 412.8 203.8 416.0C201.1 418.9 202.0 422.5 202.1 428.1C207.7 428.0 211.4 428.9 214.2 426.0C217.3 422.8 218.3 418.7 214.6 415.2ZM211.1 405.4C211.5 400.4 208.1 397.9 203.7 397.5C199.8 397.1 197.5 400.1 193.1 403.7C196.7 408.0 198.4 411.4 202.3 411.8C206.7 412.2 210.6 410.5 211.1 405.4ZM153.8 437.6a6.8 6.8 0 1 0 13.6 0a6.8 6.8 0 1 0 -13.6 0ZM157.2 427.7C161.8 426.1 162.8 422.6 161.7 419.2C160.6 416.2 157.1 415.7 152.5 414.0C149.9 418.2 147.4 420.8 148.4 423.8C149.6 427.2 152.5 429.3 157.2 427.7ZM167.5 429.7C171.2 432.9 174.7 432.1 177.1 429.3C179.1 426.9 177.8 423.7 177.0 418.7C172.0 418.6 168.6 417.8 166.5 420.2C164.1 422.9 163.8 426.5 167.5 429.7ZM170.9 439.6C170.0 444.4 172.5 447.0 176.0 447.7C179.1 448.3 181.3 445.5 185.1 442.4C182.7 438.0 181.8 434.6 178.6 434.0C175.1 433.3 171.8 434.8 170.9 439.6ZM164.0 447.5C159.4 449.1 158.4 452.6 159.5 456.0C160.6 459.0 164.1 459.5 168.7 461.2C171.3 457.0 173.8 454.4 172.8 451.4C171.6 448.0 168.7 445.9 164.0 447.5ZM153.7 445.5C150.0 442.3 146.5 443.1 144.1 445.9C142.1 448.3 143.4 451.5 144.2 456.5C149.2 456.6 152.6 457.4 154.7 455.0C157.1 452.3 157.4 448.7 153.7 445.5ZM150.3 435.6C151.2 430.8 148.7 428.2 145.2 427.5C142.1 426.9 139.9 429.7 136.1 432.8C138.5 437.2 139.4 440.6 142.6 441.2C146.1 441.9 149.4 440.4 150.3 435.6ZM293.5 439.0a7 7 0 1 0 14 0a7 7 0 1 0 -14 0ZM301.4 428.5C305.7 428.9 307.9 426.0 308.2 422.1C308.5 418.7 305.9 416.8 302.8 413.1C299.1 416.2 296.1 417.7 295.8 421.1C295.5 424.9 297.1 428.2 301.4 428.5ZM309.2 433.2C311.6 436.8 315.3 436.6 318.5 434.5C321.3 432.6 321.2 429.3 322.2 424.6C317.4 423.7 314.5 422.3 311.6 424.2C308.4 426.3 306.8 429.6 309.2 433.2ZM310.5 442.2C309.2 446.4 311.6 449.1 315.2 450.3C318.5 451.3 321.0 449.2 325.2 447.0C323.0 442.7 322.3 439.5 319.0 438.5C315.4 437.3 311.8 438.1 310.5 442.2ZM304.2 448.8C300.2 450.4 299.5 454.0 300.9 457.5C302.1 460.7 305.3 461.3 309.7 463.3C311.7 458.9 313.7 456.3 312.5 453.2C311.1 449.6 308.3 447.3 304.2 448.8ZM295.1 448.0C291.4 445.8 288.2 447.6 286.2 450.9C284.5 453.8 286.0 456.7 287.2 461.4C291.9 460.2 295.2 460.1 296.9 457.2C298.9 453.9 298.9 450.2 295.1 448.0ZM290.1 440.4C289.5 436.1 286.1 434.7 282.3 435.2C279.0 435.7 277.7 438.7 274.7 442.6C278.6 445.5 280.7 448.0 284.0 447.5C287.8 447.0 290.7 444.7 290.1 440.4ZM292.9 431.8C295.9 428.6 294.9 425.1 292.1 422.5C289.6 420.1 286.5 421.0 281.7 421.1C281.8 425.9 281.1 429.1 283.6 431.4C286.3 434.1 289.9 434.9 292.9 431.8ZM90.3 399.7C91.1 402.8 92.0 408.6 95.8 414.2C99.2 419.2 101.9 420.3 107.3 424.7C105.2 418.1 105.2 415.2 101.8 410.2C98.0 404.6 92.9 401.6 90.3 399.7ZM104.0 404.5C103.9 407.3 103.1 412.5 105.3 417.8C107.3 422.5 109.8 423.7 114.0 428.0C113.8 422.0 114.7 419.4 112.7 414.7C110.4 409.4 106.1 406.4 104.0 404.5ZM117.8 402.0C117.2 404.6 115.8 409.2 116.4 414.8C116.9 419.8 118.4 421.7 120.5 427.0C121.4 421.3 122.5 419.2 121.9 414.2C121.3 408.6 118.9 404.4 117.8 402.0ZM122.0 417.0C123.6 419.7 126.1 425.2 131.5 428.3C136.3 431.1 139.3 430.3 146.0 431.0C142.1 425.5 141.3 422.5 136.5 419.7C131.1 416.5 125.2 417.1 122.0 417.0ZM160.0 466.0C160.9 468.6 162.0 473.8 166.0 477.4C169.6 480.6 172.4 480.3 178.0 482.0C175.7 476.6 175.6 473.8 172.0 470.6C167.9 467.0 162.7 466.6 160.0 466.0ZM180.0 456.0C180.1 459.6 179.3 466.5 183.1 472.2C186.5 477.2 190.3 477.5 197.0 481.0C196.2 473.5 197.3 469.8 193.9 464.8C190.1 459.2 183.3 457.4 180.0 456.0ZM244.0 399.5C248.6 396.1 257.9 390.9 263.0 380.8C267.6 371.7 265.9 366.4 266.7 354.3C257.5 362.1 252.2 364.0 247.7 373.0C242.6 383.2 244.0 393.8 244.0 399.5ZM228.0 482.0C232.5 479.4 241.6 475.6 246.7 466.8C251.2 459.0 249.6 453.9 250.5 443.0C241.5 449.2 236.3 450.4 231.8 458.2C226.7 467.0 228.0 476.8 228.0 482.0ZM235.0 340.0C233.3 343.5 229.5 349.6 228.3 357.9C227.3 365.3 228.8 368.6 230.0 377.0C233.4 369.2 235.7 366.5 236.7 359.1C237.8 350.7 235.7 343.9 235.0 340.0ZM243.0 341.0C242.4 343.5 240.8 347.9 241.7 353.1C242.5 357.7 244.3 359.3 247.0 364.0C248.0 358.6 249.1 356.5 248.3 351.9C247.4 346.7 244.4 343.1 243.0 341.0ZM284.0 470.0C284.9 465.5 287.2 457.6 286.5 447.7C285.9 438.9 283.9 435.5 281.0 426.0C279.5 435.8 277.9 439.5 278.5 448.3C279.2 458.2 282.5 465.7 284.0 470.0ZM318.0 428.0C317.5 431.1 316.1 436.6 317.0 443.4C317.8 449.4 319.5 451.6 322.0 458.0C322.8 451.2 323.8 448.6 323.0 442.6C322.1 435.9 319.3 430.9 318.0 428.0ZM290.0 402.0C289.9 403.8 289.3 407.2 291.1 409.9C292.7 412.3 294.6 412.4 298.0 414.0C297.8 410.3 298.5 408.5 296.9 406.1C295.1 403.4 291.7 402.6 290.0 402.0ZM296.0 470.0C295.9 471.8 295.3 475.2 297.1 477.9C298.7 480.3 300.6 480.4 304.0 482.0C303.8 478.3 304.5 476.5 302.9 474.1C301.1 471.4 297.7 470.6 296.0 470.0ZM315.0 470.0C313.4 470.5 310.2 471.1 308.2 473.6C306.4 475.8 306.7 477.5 306.0 481.0C309.3 479.6 311.0 479.6 312.8 477.4C314.8 474.9 314.8 471.7 315.0 470.0ZM222.0 352.0C219.8 353.6 215.2 356.2 212.9 361.1C210.9 365.5 211.9 368.1 212.0 374.0C216.5 370.2 219.1 369.3 221.1 364.9C223.3 359.9 222.2 354.8 222.0 352.0ZM213.0 378.0C211.0 379.0 206.9 380.3 204.6 383.9C202.6 387.1 203.3 389.3 203.0 394.0C207.1 391.6 209.4 391.3 211.4 388.1C213.6 384.5 213.0 380.2 213.0 378.0ZM179.0 408.0C179.5 410.1 180.0 414.2 182.9 417.4C185.5 420.2 187.7 420.2 192.0 422.0C190.6 417.6 190.7 415.4 188.1 412.6C185.1 409.5 181.1 408.7 179.0 408.0ZM253.0 392.0C253.2 393.7 253.1 397.1 255.1 399.8C256.9 402.2 258.7 402.4 262.0 404.0C261.3 400.4 261.7 398.6 259.9 396.2C257.9 393.5 254.6 392.7 253.0 392.0ZM246.0 446.0C245.6 449.0 244.4 454.2 245.5 460.5C246.5 466.1 248.3 468.1 251.0 474.0C251.5 467.5 252.5 465.1 251.5 459.5C250.3 453.2 247.4 448.6 246.0 446.0ZM192.0 432.0C191.5 434.2 190.2 438.1 191.1 442.6C191.9 446.6 193.5 447.9 196.0 452.0C196.7 447.3 197.7 445.4 196.9 441.4C196.0 436.9 193.3 433.8 192.0 432.0ZM276.0 412.0C277.1 410.5 279.5 408.0 280.0 404.4C280.4 401.2 279.2 399.7 278.0 396.0C275.9 399.3 274.4 400.4 274.0 403.6C273.6 407.2 275.3 410.3 276.0 412.0ZM266.5 408.0C261.2 408.0 259.0 419.9 259.0 434.4C259.0 459.0 262.4 476.6 266.5 496.0C270.6 476.6 274.0 459.0 274.0 434.4C274.0 419.9 271.8 408.0 266.5 408.0ZM206.0 421.0C202.2 420.9 200.2 430.6 199.9 442.4C199.2 462.6 201.3 477.0 203.8 493.0C207.3 477.2 210.2 462.9 210.8 442.8C211.2 430.9 209.8 421.1 206.0 421.0Z" fill="none" stroke="#dcdcdc" stroke-width="6"/>
<path d="M230.3 319.5a8 8 0 1 0 16 0a8 8 0 1 0 -16 0ZM235.6 307.8C241.5 306.5 243.0 301.7 241.9 296.7C240.8 292.2 236.5 290.8 230.9 287.3C227.3 292.9 224.1 296.0 225.1 300.5C226.3 305.6 229.7 309.2 235.6 307.8ZM247.1 311.3C251.2 315.7 256.1 314.7 259.9 311.2C263.2 308.0 262.3 303.6 262.4 297.0C255.8 296.7 251.5 295.4 248.1 298.6C244.3 302.1 243.0 306.9 247.1 311.3ZM249.8 323.0C248.0 328.8 251.3 332.5 256.3 334.0C260.7 335.3 264.1 332.3 269.9 329.1C266.8 323.3 265.7 318.9 261.3 317.5C256.4 316.0 251.5 317.3 249.8 323.0ZM241.0 331.2C235.1 332.5 233.6 337.3 234.7 342.3C235.8 346.8 240.1 348.2 245.7 351.7C249.3 346.1 252.5 343.0 251.5 338.5C250.3 333.4 246.9 329.8 241.0 331.2ZM229.5 327.7C225.4 323.3 220.5 324.3 216.7 327.8C213.4 331.0 214.3 335.4 214.2 342.0C220.8 342.3 225.1 343.6 228.5 340.4C232.3 336.9 233.6 332.1 229.5 327.7ZM226.8 316.0C228.6 310.2 225.3 306.5 220.3 305.0C215.9 303.7 212.5 306.7 206.7 309.9C209.8 315.7 210.9 320.1 215.3 321.5C220.2 323.0 225.1 321.7 226.8 316.0ZM215.0 406.6a8 8 0 1 0 16 0a8 8 0 1 0 -16 0ZM216.5 396.5C220.7 393.8 220.5 389.6 218.1 385.8C215.9 382.5 212.1 382.6 206.7 381.4C205.5 386.9 203.9 390.3 206.0 393.7C208.4 397.4 212.2 399.3 216.5 396.5ZM226.8 395.2C231.6 396.8 234.8 394.0 236.2 389.8C237.4 386.0 235.0 383.1 232.5 378.1C227.5 380.6 223.8 381.5 222.5 385.3C221.1 389.5 222.0 393.6 226.8 395.2ZM234.3 402.5C236.0 407.2 240.2 408.0 244.4 406.4C248.1 405.1 248.8 401.4 251.2 396.3C246.1 393.9 243.1 391.6 239.4 392.9C235.2 394.5 232.5 397.7 234.3 402.5ZM233.3 412.8C230.6 417.1 232.6 420.9 236.4 423.2C239.8 425.2 243.2 423.5 248.6 422.2C247.3 416.7 247.3 412.9 243.9 410.9C240.1 408.6 235.9 408.5 233.3 412.8ZM224.5 418.5C219.5 419.1 217.8 423.0 218.4 427.5C218.9 431.4 222.4 432.9 226.8 436.4C230.2 431.9 233.2 429.6 232.7 425.6C232.1 421.2 229.5 417.9 224.5 418.5ZM214.6 415.2C211.0 411.7 206.9 412.8 203.8 416.0C201.1 418.9 202.0 422.5 202.1 428.1C207.7 428.0 211.4 428.9 214.2 426.0C217.3 422.8 218.3 418.7 214.6 415.2ZM211.1 405.4C211.5 400.4 208.1 397.9 203.7 397.5C199.8 397.1 197.5 400.1 193.1 403.7C196.7 408.0 198.4 411.4 202.3 411.8C206.7 412.2 210.6 410.5 211.1 405.4ZM153.8 437.6a6.8 6.8 0 1 0 13.6 0a6.8 6.8 0 1 0 -13.6 0ZM157.2 427.7C161.8 426.1 162.8 422.6 161.7 419.2C160.6 416.2 157.1 415.7 152.5 414.0C149.9 418.2 147.4 420.8 148.4 423.8C149.6 427.2 152.5 429.3 157.2 427.7ZM167.5 429.7C171.2 432.9 174.7 432.1 177.1 429.3C179.1 426.9 177.8 423.7 177.0 418.7C172.0 418.6 168.6 417.8 166.5 420.2C164.1 422.9 163.8 426.5 167.5 429.7ZM170.9 439.6C170.0 444.4 172.5 447.0 176.0 447.7C179.1 448.3 181.3 445.5 185.1 442.4C182.7 438.0 181.8 434.6 178.6 434.0C175.1 433.3 171.8 434.8 170.9 439.6ZM164.0 447.5C159.4 449.1 158.4 452.6 159.5 456.0C160.6 459.0 164.1 459.5 168.7 461.2C171.3 457.0 173.8 454.4 172.8 451.4C171.6 448.0 168.7 445.9 164.0 447.5ZM153.7 445.5C150.0 442.3 146.5 443.1 144.1 445.9C142.1 448.3 143.4 451.5 144.2 456.5C149.2 456.6 152.6 457.4 154.7 455.0C157.1 452.3 157.4 448.7 153.7 445.5ZM150.3 435.6C151.2 430.8 148.7 428.2 145.2 427.5C142.1 426.9 139.9 429.7 136.1 432.8C138.5 437.2 139.4 440.6 142.6 441.2C146.1 441.9 149.4 440.4 150.3 435.6ZM293.5 439.0a7 7 0 1 0 14 0a7 7 0 1 0 -14 0ZM301.4 428.5C305.7 428.9 307.9 426.0 308.2 422.1C308.5 418.7 305.9 416.8 302.8 413.1C299.1 416.2 296.1 417.7 295.8 421.1C295.5 424.9 297.1 428.2 301.4 428.5ZM309.2 433.2C311.6 436.8 315.3 436.6 318.5 434.5C321.3 432.6 321.2 429.3 322.2 424.6C317.4 423.7 314.5 422.3 311.6 424.2C308.4 426.3 306.8 429.6 309.2 433.2ZM310.5 442.2C309.2 446.4 311.6 449.1 315.2 450.3C318.5 451.3 321.0 449.2 325.2 447.0C323.0 442.7 322.3 439.5 319.0 438.5C315.4 437.3 311.8 438.1 310.5 442.2ZM304.2 448.8C300.2 450.4 299.5 454.0 300.9 457.5C302.1 460.7 305.3 461.3 309.7 463.3C311.7 458.9 313.7 456.3 312.5 453.2C311.1 449.6 308.3 447.3 304.2 448.8ZM295.1 448.0C291.4 445.8 288.2 447.6 286.2 450.9C284.5 453.8 286.0 456.7 287.2 461.4C291.9 460.2 295.2 460.1 296.9 457.2C298.9 453.9 298.9 450.2 295.1 448.0ZM290.1 440.4C289.5 436.1 286.1 434.7 282.3 435.2C279.0 435.7 277.7 438.7 274.7 442.6C278.6 445.5 280.7 448.0 284.0 447.5C287.8 447.0 290.7 444.7 290.1 440.4ZM292.9 431.8C295.9 428.6 294.9 425.1 292.1 422.5C289.6 420.1 286.5 421.0 281.7 421.1C281.8 425.9 281.1 429.1 283.6 431.4C286.3 434.1 289.9 434.9 292.9 431.8ZM90.3 399.7C91.1 402.8 92.0 408.6 95.8 414.2C99.2 419.2 101.9 420.3 107.3 424.7C105.2 418.1 105.2 415.2 101.8 410.2C98.0 404.6 92.9 401.6 90.3 399.7ZM104.0 404.5C103.9 407.3 103.1 412.5 105.3 417.8C107.3 422.5 109.8 423.7 114.0 428.0C113.8 422.0 114.7 419.4 112.7 414.7C110.4 409.4 106.1 406.4 104.0 404.5ZM117.8 402.0C117.2 404.6 115.8 409.2 116.4 414.8C116.9 419.8 118.4 421.7 120.5 427.0C121.4 421.3 122.5 419.2 121.9 414.2C121.3 408.6 118.9 404.4 117.8 402.0ZM122.0 417.0C123.6 419.7 126.1 425.2 131.5 428.3C136.3 431.1 139.3 430.3 146.0 431.0C142.1 425.5 141.3 422.5 136.5 419.7C131.1 416.5 125.2 417.1 122.0 417.0ZM160.0 466.0C160.9 468.6 162.0 473.8 166.0 477.4C169.6 480.6 172.4 480.3 178.0 482.0C175.7 476.6 175.6 473.8 172.0 470.6C167.9 467.0 162.7 466.6 160.0 466.0ZM180.0 456.0C180.1 459.6 179.3 466.5 183.1 472.2C186.5 477.2 190.3 477.5 197.0 481.0C196.2 473.5 197.3 469.8 193.9 464.8C190.1 459.2 183.3 457.4 180.0 456.0ZM244.0 399.5C248.6 396.1 257.9 390.9 263.0 380.8C267.6 371.7 265.9 366.4 266.7 354.3C257.5 362.1 252.2 364.0 247.7 373.0C242.6 383.2 244.0 393.8 244.0 399.5ZM228.0 482.0C232.5 479.4 241.6 475.6 246.7 466.8C251.2 459.0 249.6 453.9 250.5 443.0C241.5 449.2 236.3 450.4 231.8 458.2C226.7 467.0 228.0 476.8 228.0 482.0ZM235.0 340.0C233.3 343.5 229.5 349.6 228.3 357.9C227.3 365.3 228.8 368.6 230.0 377.0C233.4 369.2 235.7 366.5 236.7 359.1C237.8 350.7 235.7 343.9 235.0 340.0ZM243.0 341.0C242.4 343.5 240.8 347.9 241.7 353.1C242.5 357.7 244.3 359.3 247.0 364.0C248.0 358.6 249.1 356.5 248.3 351.9C247.4 346.7 244.4 343.1 243.0 341.0ZM284.0 470.0C284.9 465.5 287.2 457.6 286.5 447.7C285.9 438.9 283.9 435.5 281.0 426.0C279.5 435.8 277.9 439.5 278.5 448.3C279.2 458.2 282.5 465.7 284.0 470.0ZM318.0 428.0C317.5 431.1 316.1 436.6 317.0 443.4C317.8 449.4 319.5 451.6 322.0 458.0C322.8 451.2 323.8 448.6 323.0 442.6C322.1 435.9 319.3 430.9 318.0 428.0ZM290.0 402.0C289.9 403.8 289.3 407.2 291.1 409.9C292.7 412.3 294.6 412.4 298.0 414.0C297.8 410.3 298.5 408.5 296.9 406.1C295.1 403.4 291.7 402.6 290.0 402.0ZM296.0 470.0C295.9 471.8 295.3 475.2 297.1 477.9C298.7 480.3 300.6 480.4 304.0 482.0C303.8 478.3 304.5 476.5 302.9 474.1C301.1 471.4 297.7 470.6 296.0 470.0ZM315.0 470.0C313.4 470.5 310.2 471.1 308.2 473.6C306.4 475.8 306.7 477.5 306.0 481.0C309.3 479.6 311.0 479.6 312.8 477.4C314.8 474.9 314.8 471.7 315.0 470.0ZM222.0 352.0C219.8 353.6 215.2 356.2 212.9 361.1C210.9 365.5 211.9 368.1 212.0 374.0C216.5 370.2 219.1 369.3 221.1 364.9C223.3 359.9 222.2 354.8 222.0 352.0ZM213.0 378.0C211.0 379.0 206.9 380.3 204.6 383.9C202.6 387.1 203.3 389.3 203.0 394.0C207.1 391.6 209.4 391.3 211.4 388.1C213.6 384.5 213.0 380.2 213.0 378.0ZM179.0 408.0C179.5 410.1 180.0 414.2 182.9 417.4C185.5 420.2 187.7 420.2 192.0 422.0C190.6 417.6 190.7 415.4 188.1 412.6C185.1 409.5 181.1 408.7 179.0 408.0ZM253.0 392.0C253.2 393.7 253.1 397.1 255.1 399.8C256.9 402.2 258.7 402.4 262.0 404.0C261.3 400.4 261.7 398.6 259.9 396.2C257.9 393.5 254.6 392.7 253.0 392.0ZM246.0 446.0C245.6 449.0 244.4 454.2 245.5 460.5C246.5 466.1 248.3 468.1 251.0 474.0C251.5 467.5 252.5 465.1 251.5 459.5C250.3 453.2 247.4 448.6 246.0 446.0ZM192.0 432.0C191.5 434.2 190.2 438.1 191.1 442.6C191.9 446.6 193.5 447.9 196.0 452.0C196.7 447.3 197.7 445.4 196.9 441.4C196.0 436.9 193.3 433.8 192.0 432.0ZM276.0 412.0C277.1 410.5 279.5 408.0 280.0 404.4C280.4 401.2 279.2 399.7 278.0 396.0C275.9 399.3 274.4 400.4 274.0 403.6C273.6 407.2 275.3 410.3 276.0 412.0ZM266.5 408.0C261.2 408.0 259.0 419.9 259.0 434.4C259.0 459.0 262.4 476.6 266.5 496.0C270.6 476.6 274.0 459.0 274.0 434.4C274.0 419.9 271.8 408.0 266.5 408.0ZM206.0 421.0C202.2 420.9 200.2 430.6 199.9 442.4C199.2 462.6 201.3 477.0 203.8 493.0C207.3 477.2 210.2 462.9 210.8 442.8C211.2 430.9 209.8 421.1 206.0 421.0Z" fill="#fcfcfc" stroke="#7a7a7a" stroke-width="0.7"/>
<path d="M235.8 308.8L233.6 299.2M246.3 312.0L253.5 305.3M248.8 322.7L258.2 325.6M240.8 330.2L243.0 339.8M230.3 327.0L223.1 333.7M227.8 316.3L218.4 313.4M217.0 397.4L212.3 390.2M226.5 396.2L229.2 388.0M233.3 402.8L241.4 399.9M232.4 412.3L239.7 416.8M224.4 417.5L225.5 426.0M215.3 414.5L209.4 420.6M212.1 405.5L203.5 404.7M157.5 428.6L155.2 421.9M166.8 430.4L171.5 425.1M169.9 439.4L176.9 440.8M163.7 446.6L166.0 453.3M154.4 444.8L149.7 450.1M151.3 435.8L144.3 434.4M301.3 429.5L302.0 422.1M308.4 433.7L314.7 429.6M309.5 441.9L316.7 444.2M303.9 447.9L306.5 454.9M295.6 447.2L291.8 453.6M291.1 440.3L283.6 441.3M293.6 432.5L288.2 427.3M246 396L264 360M251 386l-5-9M252 384l9 1M257 375l-5-8M258 373l8 1M231 478L248 448M236 469l-4-8M237 467l9 2M242 459l-4-7M243 457l8 1M181 458L195 478" fill="none" stroke="#7a7a7a" stroke-width="4"/><path d="M235.8 308.8L233.6 299.2M246.3 312.0L253.5 305.3M248.8 322.7L258.2 325.6M240.8 330.2L243.0 339.8M230.3 327.0L223.1 333.7M227.8 316.3L218.4 313.4M217.0 397.4L212.3 390.2M226.5 396.2L229.2 388.0M233.3 402.8L241.4 399.9M232.4 412.3L239.7 416.8M224.4 417.5L225.5 426.0M215.3 414.5L209.4 420.6M212.1 405.5L203.5 404.7M157.5 428.6L155.2 421.9M166.8 430.4L171.5 425.1M169.9 439.4L176.9 440.8M163.7 446.6L166.0 453.3M154.4 444.8L149.7 450.1M151.3 435.8L144.3 434.4M301.3 429.5L302.0 422.1M308.4 433.7L314.7 429.6M309.5 441.9L316.7 444.2M303.9 447.9L306.5 454.9M295.6 447.2L291.8 453.6M291.1 440.3L283.6 441.3M293.6 432.5L288.2 427.3M246 396L264 360M251 386l-5-9M252 384l9 1M257 375l-5-8M258 373l8 1M231 478L248 448M236 469l-4-8M237 467l9 2M242 459l-4-7M243 457l8 1M181 458L195 478" fill="none" stroke="#dcdcdc" stroke-width="2.8"/>
<path d="M215.0 283.0C200.3 286.2 199.3 294.2 192.0 302.0C184.7 309.8 177.7 321.7 171.0 330.0C164.3 338.3 156.8 344.0 152.0 352.0C147.2 360.0 144.2 370.0 142.0 378.0C139.8 386.0 139.2 394.8 139.0 400.0C138.8 405.2 142.3 408.8 141.0 409.0C139.7 409.2 133.8 404.3 131.0 401.0C128.2 397.7 125.3 394.7 124.0 389.0C122.7 383.3 124.2 374.2 123.0 367.0C121.8 359.8 120.0 350.8 117.0 346.0C114.0 341.2 109.2 337.3 105.0 338.0C100.8 338.7 95.5 344.3 92.0 350.0C88.5 355.7 85.2 364.5 84.0 372.0C82.8 379.5 84.0 387.8 85.0 395.0C86.0 402.2 87.3 409.0 90.0 415.0C92.7 421.0 97.2 426.8 101.0 431.0C104.8 435.2 108.3 437.5 113.0 440.0C117.7 442.5 124.0 444.3 129.0 446.0C134.0 447.7 139.2 448.2 143.0 450.0C146.8 451.8 149.8 454.0 152.0 457.0C154.2 460.0 154.2 464.3 156.0 468.0C157.8 471.7 158.8 476.0 163.0 479.0C167.2 482.0 175.3 484.8 181.0 486.0C186.7 487.2 192.5 486.5 197.0 486.0C201.5 485.5 204.2 482.6 208.0 483.0C211.8 483.4 215.8 487.2 220.0 488.5C224.2 489.8 228.5 490.6 233.0 491.0C237.5 491.4 242.8 491.7 247.0 491.0C251.2 490.3 255.0 488.5 258.0 487.0C261.0 485.5 262.5 483.4 265.0 482.0C267.5 480.6 270.5 478.3 273.0 478.5C275.5 478.7 276.8 481.8 280.0 483.0C283.2 484.2 287.5 485.5 292.0 485.5C296.5 485.5 303.0 484.6 307.0 483.0C311.0 481.4 313.5 478.8 316.0 476.0C318.5 473.2 320.0 471.3 322.0 466.0C324.0 460.7 326.7 452.2 328.0 444.0C329.3 435.8 329.3 424.3 330.0 417.0C330.7 409.7 332.3 408.3 332.0 400.0C331.7 391.7 330.0 377.7 328.0 367.0C326.0 356.3 322.7 345.7 320.0 336.0C317.3 326.3 315.3 316.3 312.0 309.0C308.7 301.7 305.3 296.3 300.0 292.0C294.7 287.7 294.2 284.5 280.0 283.0C265.8 281.5 229.7 279.8 215.0 283.0Z" fill="none" stroke="#7a7a7a" stroke-width="7.4"/><path d="M215.0 283.0C200.3 286.2 199.3 294.2 192.0 302.0C184.7 309.8 177.7 321.7 171.0 330.0C164.3 338.3 156.8 344.0 152.0 352.0C147.2 360.0 144.2 370.0 142.0 378.0C139.8 386.0 139.2 394.8 139.0 400.0C138.8 405.2 142.3 408.8 141.0 409.0C139.7 409.2 133.8 404.3 131.0 401.0C128.2 397.7 125.3 394.7 124.0 389.0C122.7 383.3 124.2 374.2 123.0 367.0C121.8 359.8 120.0 350.8 117.0 346.0C114.0 341.2 109.2 337.3 105.0 338.0C100.8 338.7 95.5 344.3 92.0 350.0C88.5 355.7 85.2 364.5 84.0 372.0C82.8 379.5 84.0 387.8 85.0 395.0C86.0 402.2 87.3 409.0 90.0 415.0C92.7 421.0 97.2 426.8 101.0 431.0C104.8 435.2 108.3 437.5 113.0 440.0C117.7 442.5 124.0 444.3 129.0 446.0C134.0 447.7 139.2 448.2 143.0 450.0C146.8 451.8 149.8 454.0 152.0 457.0C154.2 460.0 154.2 464.3 156.0 468.0C157.8 471.7 158.8 476.0 163.0 479.0C167.2 482.0 175.3 484.8 181.0 486.0C186.7 487.2 192.5 486.5 197.0 486.0C201.5 485.5 204.2 482.6 208.0 483.0C211.8 483.4 215.8 487.2 220.0 488.5C224.2 489.8 228.5 490.6 233.0 491.0C237.5 491.4 242.8 491.7 247.0 491.0C251.2 490.3 255.0 488.5 258.0 487.0C261.0 485.5 262.5 483.4 265.0 482.0C267.5 480.6 270.5 478.3 273.0 478.5C275.5 478.7 276.8 481.8 280.0 483.0C283.2 484.2 287.5 485.5 292.0 485.5C296.5 485.5 303.0 484.6 307.0 483.0C311.0 481.4 313.5 478.8 316.0 476.0C318.5 473.2 320.0 471.3 322.0 466.0C324.0 460.7 326.7 452.2 328.0 444.0C329.3 435.8 329.3 424.3 330.0 417.0C330.7 409.7 332.3 408.3 332.0 400.0C331.7 391.7 330.0 377.7 328.0 367.0C326.0 356.3 322.7 345.7 320.0 336.0C317.3 326.3 315.3 316.3 312.0 309.0C308.7 301.7 305.3 296.3 300.0 292.0C294.7 287.7 294.2 284.5 280.0 283.0C265.8 281.5 229.7 279.8 215.0 283.0Z" fill="none" stroke="#dcdcdc" stroke-width="6.2"/></g>
<path d="M215.0 283.0C200.3 286.2 199.3 294.2 192.0 302.0C184.7 309.8 177.7 321.7 171.0 330.0C164.3 338.3 156.8 344.0 152.0 352.0C147.2 360.0 144.2 370.0 142.0 378.0C139.8 386.0 139.2 394.8 139.0 400.0C138.8 405.2 142.3 408.8 141.0 409.0C139.7 409.2 133.8 404.3 131.0 401.0C128.2 397.7 125.3 394.7 124.0 389.0C122.7 383.3 124.2 374.2 123.0 367.0C121.8 359.8 120.0 350.8 117.0 346.0C114.0 341.2 109.2 337.3 105.0 338.0C100.8 338.7 95.5 344.3 92.0 350.0C88.5 355.7 85.2 364.5 84.0 372.0C82.8 379.5 84.0 387.8 85.0 395.0C86.0 402.2 87.3 409.0 90.0 415.0C92.7 421.0 97.2 426.8 101.0 431.0C104.8 435.2 108.3 437.5 113.0 440.0C117.7 442.5 124.0 444.3 129.0 446.0C134.0 447.7 139.2 448.2 143.0 450.0C146.8 451.8 149.8 454.0 152.0 457.0C154.2 460.0 154.2 464.3 156.0 468.0C157.8 471.7 158.8 476.0 163.0 479.0C167.2 482.0 175.3 484.8 181.0 486.0C186.7 487.2 192.5 486.5 197.0 486.0C201.5 485.5 204.2 482.6 208.0 483.0C211.8 483.4 215.8 487.2 220.0 488.5C224.2 489.8 228.5 490.6 233.0 491.0C237.5 491.4 242.8 491.7 247.0 491.0C251.2 490.3 255.0 488.5 258.0 487.0C261.0 485.5 262.5 483.4 265.0 482.0C267.5 480.6 270.5 478.3 273.0 478.5C275.5 478.7 276.8 481.8 280.0 483.0C283.2 484.2 287.5 485.5 292.0 485.5C296.5 485.5 303.0 484.6 307.0 483.0C311.0 481.4 313.5 478.8 316.0 476.0C318.5 473.2 320.0 471.3 322.0 466.0C324.0 460.7 326.7 452.2 328.0 444.0C329.3 435.8 329.3 424.3 330.0 417.0C330.7 409.7 332.3 408.3 332.0 400.0C331.7 391.7 330.0 377.7 328.0 367.0C326.0 356.3 322.7 345.7 320.0 336.0C317.3 326.3 315.3 316.3 312.0 309.0C308.7 301.7 305.3 296.3 300.0 292.0C294.7 287.7 294.2 284.5 280.0 283.0C265.8 281.5 229.7 279.8 215.0 283.0Z" fill="none" stroke="#7a7a7a" stroke-width="0.8"/>
<path d="M193.0 301.0C189.0 304.8 186.7 308.2 183.0 313.0C179.3 317.8 174.7 325.2 171.0 330.0C167.3 334.8 164.2 338.3 161.0 342.0C157.8 345.7 154.5 348.2 152.0 352.0C149.5 355.8 147.7 360.7 146.0 365.0C144.3 369.3 143.1 373.8 142.0 378.0C140.9 382.2 139.9 386.0 139.5 390.0C139.1 394.0 139.1 398.2 139.5 402.0C139.9 405.8 140.8 410.0 142.0 413.0C143.2 416.0 145.2 419.5 147.0 420.0C148.8 420.5 151.0 417.7 153.0 416.0C155.0 414.3 156.8 411.5 159.0 410.0C161.2 408.5 162.8 409.0 166.0 407.0C169.2 405.0 174.0 401.2 178.0 398.0C182.0 394.8 186.8 391.2 190.0 388.0C193.2 384.8 194.9 382.0 197.0 379.0C199.1 376.0 201.5 372.8 202.5 370.0C203.5 367.2 203.4 364.7 203.0 362.0C202.6 359.3 199.3 356.5 200.0 354.0C200.7 351.5 204.8 349.2 207.0 347.0C209.2 344.8 211.5 343.0 213.2 341.0C214.9 339.0 216.1 337.2 217.0 335.0C217.9 332.8 219.5 330.5 218.5 328.0C217.5 325.5 213.6 322.3 211.0 320.0C208.4 317.7 203.8 317.3 203.0 314.0C202.2 310.7 205.3 304.0 206.0 300.0C206.7 296.0 209.2 289.8 207.0 290.0C204.8 290.2 197.0 297.2 193.0 301.0ZM262.0 281.0C263.7 279.8 273.7 284.2 280.0 286.0C286.3 287.8 295.5 289.7 300.0 292.0C304.5 294.3 305.0 297.2 307.0 300.0C309.0 302.8 310.5 305.3 312.0 309.0C313.5 312.7 314.7 317.5 316.0 322.0C317.3 326.5 318.7 331.2 320.0 336.0C321.3 340.8 322.7 345.8 324.0 351.0C325.3 356.2 326.9 361.5 328.0 367.0C329.1 372.5 329.8 378.5 330.5 384.0C331.2 389.5 331.8 396.0 332.0 400.0C332.2 404.0 331.8 405.5 331.5 408.0C331.2 410.5 332.1 413.2 330.0 415.0C327.9 416.8 322.8 417.8 319.0 419.0C315.2 420.2 309.5 423.5 307.0 422.5C304.5 421.5 304.8 416.1 304.0 413.0C303.2 409.9 302.0 407.0 302.0 404.0C302.0 401.0 303.2 398.0 304.0 395.0C304.8 392.0 308.3 386.8 307.0 386.0C305.7 385.2 299.7 388.8 296.0 390.0C292.3 391.2 287.7 395.0 285.0 393.5C282.3 392.0 281.3 384.9 280.0 381.0C278.7 377.1 278.0 373.2 277.0 370.0C276.0 366.8 275.0 364.7 274.0 362.0C273.0 359.3 272.7 356.2 271.0 354.0C269.3 351.8 266.2 350.8 264.0 349.0C261.8 347.2 257.8 344.5 258.0 343.0C258.2 341.5 263.0 341.2 265.0 340.0C267.0 338.8 269.7 337.2 270.0 335.5C270.3 333.8 267.7 331.8 267.0 330.0C266.3 328.2 265.5 326.5 266.0 325.0C266.5 323.5 268.8 322.3 270.0 321.0C271.2 319.7 273.0 318.3 273.0 317.0C273.0 315.7 270.8 314.3 270.0 313.0C269.2 311.7 268.1 311.0 268.0 309.0C267.9 307.0 269.2 303.7 269.5 301.0C269.8 298.3 271.2 296.3 270.0 293.0C268.8 289.7 260.3 282.2 262.0 281.0Z" fill="#854414" stroke="#2a1204" stroke-width="1.2"/>
<g clip-path="url(#cp)"><path d="M297.5 352.3a9 9 0 1 0 18 0a9 9 0 1 0 -18 0ZM170.500 337.500A11 11 0 0 1 186.500 353.500ZM294.0 347.5C294.9 341.5 289.5 338.1 282.4 337.1C275.4 336.0 270.9 339.3 263.5 343.0C269.5 348.7 272.9 353.1 279.9 354.1C287.0 355.2 293.1 353.5 294.0 347.5ZM303.5 338.0C309.1 337.5 311.0 331.8 310.5 325.0C309.9 318.3 306.0 314.8 301.0 308.8C297.1 315.6 293.8 319.6 294.4 326.4C295.0 333.2 297.9 338.5 303.5 338.0ZM298.8 361.7C294.0 358.8 289.2 361.9 286.0 367.3C282.7 372.7 284.0 377.6 284.7 385.0C291.6 382.2 296.5 381.1 299.8 375.7C303.0 370.3 303.6 364.6 298.8 361.7ZM310.0 365.0C306.2 367.3 306.7 371.7 309.2 375.9C311.8 380.0 315.6 380.9 321.0 383.0C321.5 377.2 322.6 373.4 320.0 369.3C317.5 365.1 313.8 362.7 310.0 365.0ZM290.5 331.0C290.6 327.4 291.7 320.2 287.8 316.0C284.3 312.3 280.2 313.3 273.0 312.3C273.5 319.5 272.2 323.5 275.7 327.3C279.7 331.5 286.9 330.8 290.5 331.0ZM285.8 308.8C289.5 306.4 289.2 302.3 286.7 298.5C284.3 294.6 280.5 294.1 275.3 292.3C274.7 297.8 273.6 301.4 276.1 305.3C278.5 309.1 282.1 311.2 285.8 308.8ZM296.0 300.0C296.1 298.4 296.8 295.5 295.5 292.8C294.3 290.4 292.7 290.0 290.0 288.0C290.0 291.3 289.3 292.8 290.5 295.2C291.9 297.9 294.7 299.2 296.0 300.0ZM317.0 345.0C317.0 348.0 316.3 353.5 318.4 359.5C320.2 364.9 322.3 366.6 326.0 372.0C325.7 365.5 326.4 362.9 324.6 357.5C322.6 351.4 318.8 347.4 317.0 345.0ZM313.0 318.0C313.5 315.9 314.8 312.2 313.7 308.1C312.7 304.5 310.8 303.5 308.0 300.0C307.4 304.4 306.3 306.3 307.3 309.9C308.4 313.9 311.5 316.5 313.0 318.0ZM322.3 390.0C318.4 391.9 310.2 394.4 306.8 401.2C303.7 407.3 306.0 411.5 307.0 420.4C314.7 415.9 319.5 415.2 322.5 409.2C326.0 402.3 323.1 394.2 322.3 390.0ZM185.8 328.0C187.9 327.1 192.3 325.8 194.6 322.1C196.7 318.8 195.8 316.5 196.0 311.6C191.7 313.9 189.2 314.2 187.2 317.5C184.9 321.2 185.7 325.7 185.8 328.0ZM190.0 339.0C191.3 344.5 195.9 345.9 200.9 344.7C205.8 343.6 207.8 339.4 211.5 334.0C205.8 330.8 202.2 327.9 197.2 329.1C192.2 330.2 188.7 333.5 190.0 339.0ZM178.6 353.7C174.9 358.5 177.4 363.6 182.4 367.4C187.3 371.2 192.4 370.2 200.0 370.0C198.2 362.6 197.8 357.5 192.8 353.7C187.9 349.9 182.3 348.9 178.6 353.7ZM168.4 355.7C163.8 352.5 159.6 354.2 157.0 357.9C154.4 361.7 155.9 365.9 157.0 372.0C163.1 371.0 167.6 370.9 170.2 367.2C172.8 363.4 173.0 358.9 168.4 355.7ZM192.0 376.3C185.9 376.2 173.9 374.4 164.9 380.8C156.9 386.6 156.9 393.3 152.0 405.0C164.7 404.1 171.1 406.2 179.1 400.5C188.1 394.0 190.1 382.1 192.0 376.3ZM146.0 380.0C144.9 382.7 142.4 387.4 141.8 393.7C141.2 399.3 142.2 401.7 143.0 408.0C145.2 402.0 146.6 399.9 147.2 394.3C147.9 388.0 146.5 382.9 146.0 380.0ZM170.0 338.0C171.7 336.8 175.2 335.1 177.0 331.5C178.6 328.3 177.9 326.3 178.0 322.0C174.6 324.7 172.6 325.3 171.0 328.5C169.2 332.1 169.9 336.0 170.0 338.0Z" fill="#a8662e" stroke="#2a1204" stroke-width="0.7"/><path d="M294.0 347.5L280.3 345.5M303.5 338.0L302.4 324.9M298.8 361.7L292.5 372.2M310.0 365.0L314.9 373.1M285.8 308.8L281.1 301.4M322.3 390.0L307.0 420.4M317.7 399.1L313.4 391.6M317.7 399.1L326.3 398.1M314.3 405.8L310.1 398.3M314.3 405.8L322.9 404.8M311.0 412.5L306.7 405.0M311.0 412.5L319.6 411.5M190.0 339.0L199.7 336.8M178.6 353.7L188.2 361.0M168.4 355.7L163.3 363.0M192.0 376.3L152.0 405.0M180.0 384.9L179.8 372.8M180.0 384.9L191.4 388.9M171.2 391.2L171.0 379.2M171.2 391.2L182.6 395.2M162.4 397.5L162.2 385.5M162.4 397.5L173.8 401.6" fill="none" stroke="#2a1204" stroke-width="3"/><path d="M294.0 347.5L280.3 345.5M303.5 338.0L302.4 324.9M298.8 361.7L292.5 372.2M310.0 365.0L314.9 373.1M285.8 308.8L281.1 301.4M322.3 390.0L307.0 420.4M317.7 399.1L313.4 391.6M317.7 399.1L326.3 398.1M314.3 405.8L310.1 398.3M314.3 405.8L322.9 404.8M311.0 412.5L306.7 405.0M311.0 412.5L319.6 411.5M190.0 339.0L199.7 336.8M178.6 353.7L188.2 361.0M168.4 355.7L163.3 363.0M192.0 376.3L152.0 405.0M180.0 384.9L179.8 372.8M180.0 384.9L191.4 388.9M171.2 391.2L171.0 379.2M171.2 391.2L182.6 395.2M162.4 397.5L162.2 385.5M162.4 397.5L173.8 401.6" fill="none" stroke="#854414" stroke-width="1.9"/></g>
<path d="M105.0 337.5C101.7 337.3 98.8 340.6 96.0 344.0C93.2 347.4 90.0 353.3 88.0 358.0C86.0 362.7 84.5 367.5 84.0 372.0C83.5 376.5 84.2 381.3 85.0 385.0C85.8 388.7 87.2 391.5 89.0 394.0C90.8 396.5 93.3 398.6 96.0 400.0C98.7 401.4 102.0 402.9 105.0 402.7C108.0 402.5 111.3 400.8 114.0 399.0C116.7 397.2 119.3 395.2 121.0 392.0C122.7 388.8 123.6 384.2 124.0 380.0C124.4 375.8 124.2 371.3 123.5 367.0C122.8 362.7 121.2 357.7 120.0 354.0C118.8 350.3 118.5 347.8 116.0 345.0C113.5 342.2 108.3 337.7 105.0 337.5Z" fill="#854414" stroke="#2a1204" stroke-width="1.2"/>
<path d="M105.0 342.6C102.3 342.4 100.0 345.2 97.8 348.1C95.5 351.1 92.9 356.2 91.3 360.2C89.8 364.2 88.6 368.4 88.2 372.2C87.8 376.1 88.3 380.2 89.0 383.4C89.6 386.6 90.7 389.0 92.2 391.1C93.6 393.3 95.6 395.1 97.8 396.3C99.9 397.5 102.5 398.8 105.0 398.6C107.4 398.5 110.0 397.0 112.2 395.4C114.3 393.9 116.4 392.1 117.8 389.4C119.1 386.7 119.8 382.7 120.2 379.1C120.5 375.5 120.3 371.6 119.8 367.9C119.2 364.2 118.0 359.9 117.0 356.7C116.0 353.6 115.8 351.4 113.8 349.0C111.8 346.6 107.6 342.7 105.0 342.6Z" fill="#a8662e" stroke="#2a1204" stroke-width="0.7"/>
<g clip-path="url(#ct)"><path d="M104.500 399L106 343M104.800 390l-13-10M104.800 390l13-9M105.200 375l-14-9M105.200 375l14-8M105.600 360l-10-7M105.600 360l10-6M104.600 396l-7-4M104.600 396l8-4" fill="none" stroke="#2a1204" stroke-width="3.2"/><path d="M104.500 399L106 343M104.800 390l-13-10M104.800 390l13-9M105.200 375l-14-9M105.200 375l14-8M105.600 360l-10-7M105.600 360l10-6M104.600 396l-7-4M104.600 396l8-4" fill="none" stroke="#854414" stroke-width="2"/></g>
<path d="M207.0 138.0C207.8 134.2 199.8 140.7 197.0 142.5C194.2 144.3 192.2 147.1 190.0 149.0C187.8 150.9 185.7 152.0 184.0 154.0C182.3 156.0 181.7 159.2 180.0 161.0C178.3 162.8 175.5 163.2 174.0 165.0C172.5 166.8 172.5 170.0 171.0 172.0C169.5 174.0 166.3 174.8 165.0 177.0C163.7 179.2 164.0 182.3 163.0 185.0C162.0 187.7 159.8 190.0 159.0 193.0C158.2 196.0 158.8 200.0 158.0 203.0C157.2 206.0 155.2 208.0 154.0 211.0C152.8 214.0 152.3 218.0 151.0 221.0C149.7 224.0 147.3 226.3 146.0 229.0C144.7 231.7 144.7 234.7 143.0 237.0C141.3 239.3 137.8 240.7 136.0 243.0C134.2 245.3 133.4 248.5 132.0 251.0C130.6 253.5 128.4 255.5 127.5 258.0C126.6 260.5 126.8 263.7 126.5 266.0C126.2 268.3 125.2 269.8 125.5 272.0C125.8 274.2 127.3 276.5 128.0 279.0C128.7 281.5 128.2 285.0 129.5 287.0C130.8 289.0 134.1 289.3 136.0 291.0C137.9 292.7 138.7 295.7 141.0 297.0C143.3 298.3 147.2 298.0 150.0 299.0C152.8 300.0 155.2 302.3 158.0 303.0C160.8 303.7 164.0 302.7 167.0 303.0C170.0 303.3 173.2 305.2 176.0 305.0C178.8 304.8 181.2 302.7 184.0 302.0C186.8 301.3 190.5 302.2 193.0 301.0C195.5 299.8 196.8 296.8 199.0 295.0C201.2 293.2 204.2 292.5 206.0 290.0C207.8 287.5 208.7 284.0 210.0 280.0C211.3 276.0 214.0 271.0 214.0 266.0C214.0 261.0 212.0 255.3 210.0 250.0C208.0 244.7 205.0 239.8 202.0 234.0C199.0 228.2 194.3 222.3 192.0 215.0C189.7 207.7 188.0 198.3 188.0 190.0C188.0 181.7 188.8 173.7 192.0 165.0C195.2 156.3 206.2 141.8 207.0 138.0ZM295.0 140.0C295.2 137.2 302.2 143.2 305.0 145.0C307.8 146.8 309.7 149.0 312.0 151.0C314.3 153.0 317.2 154.8 319.0 157.0C320.8 159.2 321.5 161.8 323.0 164.0C324.5 166.2 326.7 167.7 328.0 170.0C329.3 172.3 329.7 175.7 331.0 178.0C332.3 180.3 334.8 181.5 336.0 184.0C337.2 186.5 336.8 190.3 338.0 193.0C339.2 195.7 341.7 197.7 343.0 200.0C344.3 202.3 344.3 205.0 346.0 207.0C347.7 209.0 351.2 210.0 353.0 212.0C354.8 214.0 355.3 216.8 357.0 219.0C358.7 221.2 361.5 222.7 363.0 225.0C364.5 227.3 364.7 230.7 366.0 233.0C367.3 235.3 369.8 236.7 371.0 239.0C372.2 241.3 372.0 244.7 373.0 247.0C374.0 249.3 376.3 250.7 377.0 253.0C377.7 255.3 377.2 258.5 377.0 261.0C376.8 263.5 376.8 265.8 376.0 268.0C375.2 270.2 372.8 271.7 372.0 274.0C371.2 276.3 372.2 279.8 371.0 282.0C369.8 284.2 366.7 285.0 365.0 287.0C363.3 289.0 363.0 292.3 361.0 294.0C359.0 295.7 355.3 295.7 353.0 297.0C350.7 298.3 349.3 301.2 347.0 302.0C344.7 302.8 341.7 301.5 339.0 302.0C336.3 302.5 333.8 304.8 331.0 305.0C328.2 305.2 325.0 303.5 322.0 303.0C319.0 302.5 315.7 302.8 313.0 302.0C310.3 301.2 308.2 299.3 306.0 298.0C303.8 296.7 302.0 296.0 300.0 294.0C298.0 292.0 296.0 290.0 294.0 286.0C292.0 282.0 289.0 275.0 288.0 270.0C287.0 265.0 287.0 261.7 288.0 256.0C289.0 250.3 291.7 242.8 294.0 236.0C296.3 229.2 299.7 222.7 302.0 215.0C304.3 207.3 307.7 198.8 308.0 190.0C308.3 181.2 306.2 170.3 304.0 162.0C301.8 153.7 294.8 142.8 295.0 140.0Z" fill="#854414" stroke="#2a1204" stroke-width="1.2"/>
<path d="M165 193Q174.0 208.2 159 216M146 250Q147.2 237.1 159 235.5M172 238Q177.5 246.2 168 253M148 236Q158.0 242.5 156 252M152 268Q152.8 254.5 167 256M137 266Q128.0 278.2 143 283M159 267Q171.8 280.0 162 293M179 268Q188.0 247.5 197 272M176 292Q186.8 294.5 187 282M196 275Q208.5 283.0 200 291M320 188Q321.0 210.5 340 212M310 238Q322.5 224.2 332 251M300 243Q312.2 249.2 305 260M353 236Q370.5 244.8 361 261M341 251Q351.8 262.8 334 270M311 262Q324.8 257.2 322 275M350 282Q346.8 264.8 363 267M329 278Q338.0 294.0 347 286M314 285Q315.5 298.8 326 296" fill="none" stroke="#4a2208" stroke-width="3.7"/><path d="M165 193Q174.0 208.2 159 216M146 250Q147.2 237.1 159 235.5M172 238Q177.5 246.2 168 253M148 236Q158.0 242.5 156 252M152 268Q152.8 254.5 167 256M137 266Q128.0 278.2 143 283M159 267Q171.8 280.0 162 293M179 268Q188.0 247.5 197 272M176 292Q186.8 294.5 187 282M196 275Q208.5 283.0 200 291M320 188Q321.0 210.5 340 212M310 238Q322.5 224.2 332 251M300 243Q312.2 249.2 305 260M353 236Q370.5 244.8 361 261M341 251Q351.8 262.8 334 270M311 262Q324.8 257.2 322 275M350 282Q346.8 264.8 363 267M329 278Q338.0 294.0 347 286M314 285Q315.5 298.8 326 296" fill="none" stroke="#a5632c" stroke-width="2.7"/>
<path d="M248.0 128.0C240.3 128.0 232.2 128.7 225.0 130.5C217.8 132.3 210.8 134.8 205.0 139.0C199.2 143.2 193.8 149.2 190.0 156.0C186.2 162.8 183.3 172.7 182.0 180.0C180.7 187.3 181.3 193.3 182.0 200.0C182.7 206.7 184.0 213.7 186.0 220.0C188.0 226.3 191.7 232.2 194.0 238.0C196.3 243.8 197.7 249.3 200.0 255.0C202.3 260.7 200.0 267.8 208.0 272.0C216.0 276.2 234.7 280.0 248.0 280.0C261.3 280.0 280.0 276.2 288.0 272.0C296.0 267.8 293.7 260.8 296.0 255.0C298.3 249.2 299.7 243.5 302.0 237.0C304.3 230.5 308.0 222.2 310.0 216.0C312.0 209.8 313.3 206.0 314.0 200.0C314.7 194.0 315.3 187.3 314.0 180.0C312.7 172.7 309.8 162.8 306.0 156.0C302.2 149.2 296.8 143.2 291.0 139.0C285.2 134.8 278.2 132.3 271.0 130.5C263.8 128.7 255.7 128.0 248.0 128.0Z" fill="#9b5a26" stroke="#2a1204" stroke-width="1.2"/>
<path d="M228.0 268.0C230.0 265.2 231.7 263.0 236.0 262.0C240.3 261.0 249.7 261.0 254.0 262.0C258.3 263.0 259.7 265.2 262.0 268.0C264.3 270.8 268.7 276.6 268.0 279.0C267.3 281.4 261.8 281.8 258.0 282.5C254.2 283.2 249.3 283.0 245.0 283.0C240.7 283.0 235.5 283.2 232.0 282.5C228.5 281.8 224.7 281.4 224.0 279.0C223.3 276.6 226.0 270.8 228.0 268.0Z" fill="#8a4718" stroke="#2a1204" stroke-width="0.9"/>
<path d="M246.6 142.0C244.4 142.0 242.3 141.1 240.0 140.5C237.7 139.9 235.3 139.0 233.0 138.6C230.7 138.2 228.2 137.8 226.0 138.3C223.8 138.8 220.9 139.7 219.5 141.5C218.1 143.3 217.2 145.8 217.3 149.0C217.4 152.2 218.4 157.0 220.0 161.0C221.6 165.0 225.1 169.2 227.0 173.0C228.9 176.8 230.7 180.3 231.5 184.0C232.3 187.7 233.2 191.2 232.0 195.0C230.8 198.8 227.8 203.2 224.5 207.0C221.2 210.8 215.5 214.5 212.0 218.0C208.5 221.5 205.6 224.3 203.5 228.0C201.4 231.7 200.2 235.3 199.5 240.0C198.8 244.7 199.2 251.0 199.5 256.0C199.8 261.0 200.1 266.0 201.5 270.0C202.9 274.0 205.4 277.6 208.0 280.0C210.6 282.4 214.0 283.7 217.0 284.3C220.0 284.9 223.6 284.1 226.0 283.5C228.4 282.9 229.8 282.4 231.5 280.5C233.2 278.6 235.0 274.5 236.5 272.0C238.0 269.5 239.1 266.9 240.5 265.5C241.9 264.1 243.5 263.5 245.0 263.5C246.5 263.5 247.9 264.1 249.5 265.5C251.1 266.9 252.7 269.5 254.5 272.0C256.3 274.5 258.4 278.5 260.5 280.5C262.6 282.5 264.2 283.2 267.0 283.8C269.8 284.4 273.8 284.9 277.0 284.3C280.2 283.7 283.4 282.2 286.0 280.0C288.6 277.8 290.8 274.7 292.5 271.0C294.2 267.3 295.7 262.8 296.5 258.0C297.3 253.2 298.0 246.8 297.5 242.0C297.0 237.2 296.1 233.0 293.5 229.0C290.9 225.0 286.2 221.7 282.0 218.0C277.8 214.3 272.1 210.8 268.5 207.0C264.9 203.2 261.8 198.8 260.5 195.0C259.2 191.2 260.1 187.7 261.0 184.0C261.9 180.3 263.8 176.8 266.0 173.0C268.2 169.2 272.3 165.0 274.0 161.0C275.7 157.0 276.0 152.2 276.0 149.0C276.0 145.8 275.4 143.3 274.0 141.5C272.6 139.7 269.8 138.8 267.5 138.3C265.2 137.8 262.4 138.2 260.0 138.6C257.6 139.0 255.2 139.9 253.0 140.5C250.8 141.1 248.8 142.0 246.6 142.0Z" fill="#fbfbfb" stroke="#2a1204" stroke-width="1.2"/>
<ellipse cx="209.6" cy="192.4" rx="13.2" ry="14.1" fill="#2f3032" stroke="#141414" stroke-width="1.2"/>
<ellipse cx="208.9" cy="188" rx="2.9" ry="4.3" fill="#fff"/>
<ellipse cx="285" cy="192.4" rx="13.2" ry="14.1" fill="#2f3032" stroke="#141414" stroke-width="1.2"/>
<ellipse cx="284.3" cy="188" rx="2.9" ry="4.3" fill="#fff"/>
<path d="M245.7 222.3C242.1 222.3 238.0 222.3 235.0 223.2C232.0 224.1 229.2 225.6 227.5 227.5C225.8 229.4 224.9 231.8 225.0 234.5C225.1 237.2 226.3 240.8 228.0 243.5C229.7 246.2 232.1 249.2 235.0 250.8C237.9 252.4 242.1 253.3 245.7 253.3C249.3 253.3 253.5 252.4 256.5 250.8C259.5 249.2 261.9 246.2 263.5 243.5C265.1 240.8 266.3 237.2 266.4 234.5C266.5 231.8 265.6 229.4 264.0 227.5C262.4 225.6 259.6 224.1 256.5 223.2C253.4 222.3 249.3 222.3 245.7 222.3Z" fill="#2f3032" stroke="#0c0c0c" stroke-width="0.8"/>
<path d="M244.8 262.0C242.7 262.0 240.0 262.6 238.5 263.5C237.0 264.4 236.1 266.1 236.0 267.5C235.9 268.9 236.5 270.8 238.0 272.0C239.5 273.2 242.6 274.5 244.8 274.5C247.1 274.5 250.1 273.2 251.5 272.0C252.9 270.8 253.4 268.9 253.3 267.5C253.2 266.1 252.4 264.4 251.0 263.5C249.6 262.6 246.9 262.0 244.8 262.0Z" fill="#f1929c" stroke="#4a2020" stroke-width="0.8"/>
</g>
<g transform="translate(360.3,5.2) scale(1)" stroke-linejoin="round" stroke-linecap="round">
<path d="M215.0 283.0C200.3 286.2 199.3 294.2 192.0 302.0C184.7 309.8 177.7 321.7 171.0 330.0C164.3 338.3 156.8 344.0 152.0 352.0C147.2 360.0 144.2 370.0 142.0 378.0C139.8 386.0 139.2 394.8 139.0 400.0C138.8 405.2 142.3 408.8 141.0 409.0C139.7 409.2 133.8 404.3 131.0 401.0C128.2 397.7 125.3 394.7 124.0 389.0C122.7 383.3 124.2 374.2 123.0 367.0C121.8 359.8 120.0 350.8 117.0 346.0C114.0 341.2 109.2 337.3 105.0 338.0C100.8 338.7 95.5 344.3 92.0 350.0C88.5 355.7 85.2 364.5 84.0 372.0C82.8 379.5 84.0 387.8 85.0 395.0C86.0 402.2 87.3 409.0 90.0 415.0C92.7 421.0 97.2 426.8 101.0 431.0C104.8 435.2 108.3 437.5 113.0 440.0C117.7 442.5 124.0 444.3 129.0 446.0C134.0 447.7 139.2 448.2 143.0 450.0C146.8 451.8 149.8 454.0 152.0 457.0C154.2 460.0 154.2 464.3 156.0 468.0C157.8 471.7 158.8 476.0 163.0 479.0C167.2 482.0 175.3 484.8 181.0 486.0C186.7 487.2 192.5 486.5 197.0 486.0C201.5 485.5 204.2 482.6 208.0 483.0C211.8 483.4 215.8 487.2 220.0 488.5C224.2 489.8 228.5 490.6 233.0 491.0C237.5 491.4 242.8 491.7 247.0 491.0C251.2 490.3 255.0 488.5 258.0 487.0C261.0 485.5 262.5 483.4 265.0 482.0C267.5 480.6 270.5 478.3 273.0 478.5C275.5 478.7 276.8 481.8 280.0 483.0C283.2 484.2 287.5 485.5 292.0 485.5C296.5 485.5 303.0 484.6 307.0 483.0C311.0 481.4 313.5 478.8 316.0 476.0C318.5 473.2 320.0 471.3 322.0 466.0C324.0 460.7 326.7 452.2 328.0 444.0C329.3 435.8 329.3 424.3 330.0 417.0C330.7 409.7 332.3 408.3 332.0 400.0C331.7 391.7 330.0 377.7 328.0 367.0C326.0 356.3 322.7 345.7 320.0 336.0C317.3 326.3 315.3 316.3 312.0 309.0C308.7 301.7 305.3 296.3 300.0 292.0C294.7 287.7 294.2 284.5 280.0 283.0C265.8 281.5 229.7 279.8 215.0 283.0Z" fill="#fcfcfc"/>
<g clip-path="url(#cb)">
<path d="M230.3 319.5a8 8 0 1 0 16 0a8 8 0 1 0 -16 0ZM235.6 307.8C241.5 306.5 243.0 301.7 241.9 296.7C240.8 292.2 236.5 290.8 230.9 287.3C227.3 292.9 224.1 296.0 225.1 300.5C226.3 305.6 229.7 309.2 235.6 307.8ZM247.1 311.3C251.2 315.7 256.1 314.7 259.9 311.2C263.2 308.0 262.3 303.6 262.4 297.0C255.8 296.7 251.5 295.4 248.1 298.6C244.3 302.1 243.0 306.9 247.1 311.3ZM249.8 323.0C248.0 328.8 251.3 332.5 256.3 334.0C260.7 335.3 264.1 332.3 269.9 329.1C266.8 323.3 265.7 318.9 261.3 317.5C256.4 316.0 251.5 317.3 249.8 323.0ZM241.0 331.2C235.1 332.5 233.6 337.3 234.7 342.3C235.8 346.8 240.1 348.2 245.7 351.7C249.3 346.1 252.5 343.0 251.5 338.5C250.3 333.4 246.9 329.8 241.0 331.2ZM229.5 327.7C225.4 323.3 220.5 324.3 216.7 327.8C213.4 331.0 214.3 335.4 214.2 342.0C220.8 342.3 225.1 343.6 228.5 340.4C232.3 336.9 233.6 332.1 229.5 327.7ZM226.8 316.0C228.6 310.2 225.3 306.5 220.3 305.0C215.9 303.7 212.5 306.7 206.7 309.9C209.8 315.7 210.9 320.1 215.3 321.5C220.2 323.0 225.1 321.7 226.8 316.0ZM215.0 406.6a8 8 0 1 0 16 0a8 8 0 1 0 -16 0ZM216.5 396.5C220.7 393.8 220.5 389.6 218.1 385.8C215.9 382.5 212.1 382.6 206.7 381.4C205.5 386.9 203.9 390.3 206.0 393.7C208.4 397.4 212.2 399.3 216.5 396.5ZM226.8 395.2C231.6 396.8 234.8 394.0 236.2 389.8C237.4 386.0 235.0 383.1 232.5 378.1C227.5 380.6 223.8 381.5 222.5 385.3C221.1 389.5 222.0 393.6 226.8 395.2ZM234.3 402.5C236.0 407.2 240.2 408.0 244.4 406.4C248.1 405.1 248.8 401.4 251.2 396.3C246.1 393.9 243.1 391.6 239.4 392.9C235.2 394.5 232.5 397.7 234.3 402.5ZM233.3 412.8C230.6 417.1 232.6 420.9 236.4 423.2C239.8 425.2 243.2 423.5 248.6 422.2C247.3 416.7 247.3 412.9 243.9 410.9C240.1 408.6 235.9 408.5 233.3 412.8ZM224.5 418.5C219.5 419.1 217.8 423.0 218.4 427.5C218.9 431.4 222.4 432.9 226.8 436.4C230.2 431.9 233.2 429.6 232.7 425.6C232.1 421.2 229.5 417.9 224.5 418.5ZM214.6 415.2C211.0 411.7 206.9 412.8 203.8 416.0C201.1 418.9 202.0 422.5 202.1 428.1C207.7 428.0 211.4 428.9 214.2 426.0C217.3 422.8 218.3 418.7 214.6 415.2ZM211.1 405.4C211.5 400.4 208.1 397.9 203.7 397.5C199.8 397.1 197.5 400.1 193.1 403.7C196.7 408.0 198.4 411.4 202.3 411.8C206.7 412.2 210.6 410.5 211.1 405.4ZM153.8 437.6a6.8 6.8 0 1 0 13.6 0a6.8 6.8 0 1 0 -13.6 0ZM157.2 427.7C161.8 426.1 162.8 422.6 161.7 419.2C160.6 416.2 157.1 415.7 152.5 414.0C149.9 418.2 147.4 420.8 148.4 423.8C149.6 427.2 152.5 429.3 157.2 427.7ZM167.5 429.7C171.2 432.9 174.7 432.1 177.1 429.3C179.1 426.9 177.8 423.7 177.0 418.7C172.0 418.6 168.6 417.8 166.5 420.2C164.1 422.9 163.8 426.5 167.5 429.7ZM170.9 439.6C170.0 444.4 172.5 447.0 176.0 447.7C179.1 448.3 181.3 445.5 185.1 442.4C182.7 438.0 181.8 434.6 178.6 434.0C175.1 433.3 171.8 434.8 170.9 439.6ZM164.0 447.5C159.4 449.1 158.4 452.6 159.5 456.0C160.6 459.0 164.1 459.5 168.7 461.2C171.3 457.0 173.8 454.4 172.8 451.4C171.6 448.0 168.7 445.9 164.0 447.5ZM153.7 445.5C150.0 442.3 146.5 443.1 144.1 445.9C142.1 448.3 143.4 451.5 144.2 456.5C149.2 456.6 152.6 457.4 154.7 455.0C157.1 452.3 157.4 448.7 153.7 445.5ZM150.3 435.6C151.2 430.8 148.7 428.2 145.2 427.5C142.1 426.9 139.9 429.7 136.1 432.8C138.5 437.2 139.4 440.6 142.6 441.2C146.1 441.9 149.4 440.4 150.3 435.6ZM293.5 439.0a7 7 0 1 0 14 0a7 7 0 1 0 -14 0ZM301.4 428.5C305.7 428.9 307.9 426.0 308.2 422.1C308.5 418.7 305.9 416.8 302.8 413.1C299.1 416.2 296.1 417.7 295.8 421.1C295.5 424.9 297.1 428.2 301.4 428.5ZM309.2 433.2C311.6 436.8 315.3 436.6 318.5 434.5C321.3 432.6 321.2 429.3 322.2 424.6C317.4 423.7 314.5 422.3 311.6 424.2C308.4 426.3 306.8 429.6 309.2 433.2ZM310.5 442.2C309.2 446.4 311.6 449.1 315.2 450.3C318.5 451.3 321.0 449.2 325.2 447.0C323.0 442.7 322.3 439.5 319.0 438.5C315.4 437.3 311.8 438.1 310.5 442.2ZM304.2 448.8C300.2 450.4 299.5 454.0 300.9 457.5C302.1 460.7 305.3 461.3 309.7 463.3C311.7 458.9 313.7 456.3 312.5 453.2C311.1 449.6 308.3 447.3 304.2 448.8ZM295.1 448.0C291.4 445.8 288.2 447.6 286.2 450.9C284.5 453.8 286.0 456.7 287.2 461.4C291.9 460.2 295.2 460.1 296.9 457.2C298.9 453.9 298.9 450.2 295.1 448.0ZM290.1 440.4C289.5 436.1 286.1 434.7 282.3 435.2C279.0 435.7 277.7 438.7 274.7 442.6C278.6 445.5 280.7 448.0 284.0 447.5C287.8 447.0 290.7 444.7 290.1 440.4ZM292.9 431.8C295.9 428.6 294.9 425.1 292.1 422.5C289.6 420.1 286.5 421.0 281.7 421.1C281.8 425.9 281.1 429.1 283.6 431.4C286.3 434.1 289.9 434.9 292.9 431.8ZM90.3 399.7C91.1 402.8 92.0 408.6 95.8 414.2C99.2 419.2 101.9 420.3 107.3 424.7C105.2 418.1 105.2 415.2 101.8 410.2C98.0 404.6 92.9 401.6 90.3 399.7ZM104.0 404.5C103.9 407.3 103.1 412.5 105.3 417.8C107.3 422.5 109.8 423.7 114.0 428.0C113.8 422.0 114.7 419.4 112.7 414.7C110.4 409.4 106.1 406.4 104.0 404.5ZM117.8 402.0C117.2 404.6 115.8 409.2 116.4 414.8C116.9 419.8 118.4 421.7 120.5 427.0C121.4 421.3 122.5 419.2 121.9 414.2C121.3 408.6 118.9 404.4 117.8 402.0ZM122.0 417.0C123.6 419.7 126.1 425.2 131.5 428.3C136.3 431.1 139.3 430.3 146.0 431.0C142.1 425.5 141.3 422.5 136.5 419.7C131.1 416.5 125.2 417.1 122.0 417.0ZM160.0 466.0C160.9 468.6 162.0 473.8 166.0 477.4C169.6 480.6 172.4 480.3 178.0 482.0C175.7 476.6 175.6 473.8 172.0 470.6C167.9 467.0 162.7 466.6 160.0 466.0ZM180.0 456.0C180.1 459.6 179.3 466.5 183.1 472.2C186.5 477.2 190.3 477.5 197.0 481.0C196.2 473.5 197.3 469.8 193.9 464.8C190.1 459.2 183.3 457.4 180.0 456.0ZM244.0 399.5C248.6 396.1 257.9 390.9 263.0 380.8C267.6 371.7 265.9 366.4 266.7 354.3C257.5 362.1 252.2 364.0 247.7 373.0C242.6 383.2 244.0 393.8 244.0 399.5ZM228.0 482.0C232.5 479.4 241.6 475.6 246.7 466.8C251.2 459.0 249.6 453.9 250.5 443.0C241.5 449.2 236.3 450.4 231.8 458.2C226.7 467.0 228.0 476.8 228.0 482.0ZM235.0 340.0C233.3 343.5 229.5 349.6 228.3 357.9C227.3 365.3 228.8 368.6 230.0 377.0C233.4 369.2 235.7 366.5 236.7 359.1C237.8 350.7 235.7 343.9 235.0 340.0ZM243.0 341.0C242.4 343.5 240.8 347.9 241.7 353.1C242.5 357.7 244.3 359.3 247.0 364.0C248.0 358.6 249.1 356.5 248.3 351.9C247.4 346.7 244.4 343.1 243.0 341.0ZM284.0 470.0C284.9 465.5 287.2 457.6 286.5 447.7C285.9 438.9 283.9 435.5 281.0 426.0C279.5 435.8 277.9 439.5 278.5 448.3C279.2 458.2 282.5 465.7 284.0 470.0ZM318.0 428.0C317.5 431.1 316.1 436.6 317.0 443.4C317.8 449.4 319.5 451.6 322.0 458.0C322.8 451.2 323.8 448.6 323.0 442.6C322.1 435.9 319.3 430.9 318.0 428.0ZM290.0 402.0C289.9 403.8 289.3 407.2 291.1 409.9C292.7 412.3 294.6 412.4 298.0 414.0C297.8 410.3 298.5 408.5 296.9 406.1C295.1 403.4 291.7 402.6 290.0 402.0ZM296.0 470.0C295.9 471.8 295.3 475.2 297.1 477.9C298.7 480.3 300.6 480.4 304.0 482.0C303.8 478.3 304.5 476.5 302.9 474.1C301.1 471.4 297.7 470.6 296.0 470.0ZM315.0 470.0C313.4 470.5 310.2 471.1 308.2 473.6C306.4 475.8 306.7 477.5 306.0 481.0C309.3 479.6 311.0 479.6 312.8 477.4C314.8 474.9 314.8 471.7 315.0 470.0ZM222.0 352.0C219.8 353.6 215.2 356.2 212.9 361.1C210.9 365.5 211.9 368.1 212.0 374.0C216.5 370.2 219.1 369.3 221.1 364.9C223.3 359.9 222.2 354.8 222.0 352.0ZM213.0 378.0C211.0 379.0 206.9 380.3 204.6 383.9C202.6 387.1 203.3 389.3 203.0 394.0C207.1 391.6 209.4 391.3 211.4 388.1C213.6 384.5 213.0 380.2 213.0 378.0ZM179.0 408.0C179.5 410.1 180.0 414.2 182.9 417.4C185.5 420.2 187.7 420.2 192.0 422.0C190.6 417.6 190.7 415.4 188.1 412.6C185.1 409.5 181.1 408.7 179.0 408.0ZM253.0 392.0C253.2 393.7 253.1 397.1 255.1 399.8C256.9 402.2 258.7 402.4 262.0 404.0C261.3 400.4 261.7 398.6 259.9 396.2C257.9 393.5 254.6 392.7 253.0 392.0ZM246.0 446.0C245.6 449.0 244.4 454.2 245.5 460.5C246.5 466.1 248.3 468.1 251.0 474.0C251.5 467.5 252.5 465.1 251.5 459.5C250.3 453.2 247.4 448.6 246.0 446.0ZM192.0 432.0C191.5 434.2 190.2 438.1 191.1 442.6C191.9 446.6 193.5 447.9 196.0 452.0C196.7 447.3 197.7 445.4 196.9 441.4C196.0 436.9 193.3 433.8 192.0 432.0ZM276.0 412.0C277.1 410.5 279.5 408.0 280.0 404.4C280.4 401.2 279.2 399.7 278.0 396.0C275.9 399.3 274.4 400.4 274.0 403.6C273.6 407.2 275.3 410.3 276.0 412.0ZM266.5 408.0C261.2 408.0 259.0 419.9 259.0 434.4C259.0 459.0 262.4 476.6 266.5 496.0C270.6 476.6 274.0 459.0 274.0 434.4C274.0 419.9 271.8 408.0 266.5 408.0ZM206.0 421.0C202.2 420.9 200.2 430.6 199.9 442.4C199.2 462.6 201.3 477.0 203.8 493.0C207.3 477.2 210.2 462.9 210.8 442.8C211.2 430.9 209.8 421.1 206.0 421.0Z" fill="none" stroke="#7a7a7a" stroke-width="7.2"/><path d="M230.3 319.5a8 8 0 1 0 16 0a8 8 0 1 0 -16 0ZM235.6 307.8C241.5 306.5 243.0 301.7 241.9 296.7C240.8 292.2 236.5 290.8 230.9 287.3C227.3 292.9 224.1 296.0 225.1 300.5C226.3 305.6 229.7 309.2 235.6 307.8ZM247.1 311.3C251.2 315.7 256.1 314.7 259.9 311.2C263.2 308.0 262.3 303.6 262.4 297.0C255.8 296.7 251.5 295.4 248.1 298.6C244.3 302.1 243.0 306.9 247.1 311.3ZM249.8 323.0C248.0 328.8 251.3 332.5 256.3 334.0C260.7 335.3 264.1 332.3 269.9 329.1C266.8 323.3 265.7 318.9 261.3 317.5C256.4 316.0 251.5 317.3 249.8 323.0ZM241.0 331.2C235.1 332.5 233.6 337.3 234.7 342.3C235.8 346.8 240.1 348.2 245.7 351.7C249.3 346.1 252.5 343.0 251.5 338.5C250.3 333.4 246.9 329.8 241.0 331.2ZM229.5 327.7C225.4 323.3 220.5 324.3 216.7 327.8C213.4 331.0 214.3 335.4 214.2 342.0C220.8 342.3 225.1 343.6 228.5 340.4C232.3 336.9 233.6 332.1 229.5 327.7ZM226.8 316.0C228.6 310.2 225.3 306.5 220.3 305.0C215.9 303.7 212.5 306.7 206.7 309.9C209.8 315.7 210.9 320.1 215.3 321.5C220.2 323.0 225.1 321.7 226.8 316.0ZM215.0 406.6a8 8 0 1 0 16 0a8 8 0 1 0 -16 0ZM216.5 396.5C220.7 393.8 220.5 389.6 218.1 385.8C215.9 382.5 212.1 382.6 206.7 381.4C205.5 386.9 203.9 390.3 206.0 393.7C208.4 397.4 212.2 399.3 216.5 396.5ZM226.8 395.2C231.6 396.8 234.8 394.0 236.2 389.8C237.4 386.0 235.0 383.1 232.5 378.1C227.5 380.6 223.8 381.5 222.5 385.3C221.1 389.5 222.0 393.6 226.8 395.2ZM234.3 402.5C236.0 407.2 240.2 408.0 244.4 406.4C248.1 405.1 248.8 401.4 251.2 396.3C246.1 393.9 243.1 391.6 239.4 392.9C235.2 394.5 232.5 397.7 234.3 402.5ZM233.3 412.8C230.6 417.1 232.6 420.9 236.4 423.2C239.8 425.2 243.2 423.5 248.6 422.2C247.3 416.7 247.3 412.9 243.9 410.9C240.1 408.6 235.9 408.5 233.3 412.8ZM224.5 418.5C219.5 419.1 217.8 423.0 218.4 427.5C218.9 431.4 222.4 432.9 226.8 436.4C230.2 431.9 233.2 429.6 232.7 425.6C232.1 421.2 229.5 417.9 224.5 418.5ZM214.6 415.2C211.0 411.7 206.9 412.8 203.8 416.0C201.1 418.9 202.0 422.5 202.1 428.1C207.7 428.0 211.4 428.9 214.2 426.0C217.3 422.8 218.3 418.7 214.6 415.2ZM211.1 405.4C211.5 400.4 208.1 397.9 203.7 397.5C199.8 397.1 197.5 400.1 193.1 403.7C196.7 408.0 198.4 411.4 202.3 411.8C206.7 412.2 210.6 410.5 211.1 405.4ZM153.8 437.6a6.8 6.8 0 1 0 13.6 0a6.8 6.8 0 1 0 -13.6 0ZM157.2 427.7C161.8 426.1 162.8 422.6 161.7 419.2C160.6 416.2 157.1 415.7 152.5 414.0C149.9 418.2 147.4 420.8 148.4 423.8C149.6 427.2 152.5 429.3 157.2 427.7ZM167.5 429.7C171.2 432.9 174.7 432.1 177.1 429.3C179.1 426.9 177.8 423.7 177.0 418.7C172.0 418.6 168.6 417.8 166.5 420.2C164.1 422.9 163.8 426.5 167.5 429.7ZM170.9 439.6C170.0 444.4 172.5 447.0 176.0 447.7C179.1 448.3 181.3 445.5 185.1 442.4C182.7 438.0 181.8 434.6 178.6 434.0C175.1 433.3 171.8 434.8 170.9 439.6ZM164.0 447.5C159.4 449.1 158.4 452.6 159.5 456.0C160.6 459.0 164.1 459.5 168.7 461.2C171.3 457.0 173.8 454.4 172.8 451.4C171.6 448.0 168.7 445.9 164.0 447.5ZM153.7 445.5C150.0 442.3 146.5 443.1 144.1 445.9C142.1 448.3 143.4 451.5 144.2 456.5C149.2 456.6 152.6 457.4 154.7 455.0C157.1 452.3 157.4 448.7 153.7 445.5ZM150.3 435.6C151.2 430.8 148.7 428.2 145.2 427.5C142.1 426.9 139.9 429.7 136.1 432.8C138.5 437.2 139.4 440.6 142.6 441.2C146.1 441.9 149.4 440.4 150.3 435.6ZM293.5 439.0a7 7 0 1 0 14 0a7 7 0 1 0 -14 0ZM301.4 428.5C305.7 428.9 307.9 426.0 308.2 422.1C308.5 418.7 305.9 416.8 302.8 413.1C299.1 416.2 296.1 417.7 295.8 421.1C295.5 424.9 297.1 428.2 301.4 428.5ZM309.2 433.2C311.6 436.8 315.3 436.6 318.5 434.5C321.3 432.6 321.2 429.3 322.2 424.6C317.4 423.7 314.5 422.3 311.6 424.2C308.4 426.3 306.8 429.6 309.2 433.2ZM310.5 442.2C309.2 446.4 311.6 449.1 315.2 450.3C318.5 451.3 321.0 449.2 325.2 447.0C323.0 442.7 322.3 439.5 319.0 438.5C315.4 437.3 311.8 438.1 310.5 442.2ZM304.2 448.8C300.2 450.4 299.5 454.0 300.9 457.5C302.1 460.7 305.3 461.3 309.7 463.3C311.7 458.9 313.7 456.3 312.5 453.2C311.1 449.6 308.3 447.3 304.2 448.8ZM295.1 448.0C291.4 445.8 288.2 447.6 286.2 450.9C284.5 453.8 286.0 456.7 287.2 461.4C291.9 460.2 295.2 460.1 296.9 457.2C298.9 453.9 298.9 450.2 295.1 448.0ZM290.1 440.4C289.5 436.1 286.1 434.7 282.3 435.2C279.0 435.7 277.7 438.7 274.7 442.6C278.6 445.5 280.7 448.0 284.0 447.5C287.8 447.0 290.7 444.7 290.1 440.4ZM292.9 431.8C295.9 428.6 294.9 425.1 292.1 422.5C289.6 420.1 286.5 421.0 281.7 421.1C281.8 425.9 281.1 429.1 283.6 431.4C286.3 434.1 289.9 434.9 292.9 431.8ZM90.3 399.7C91.1 402.8 92.0 408.6 95.8 414.2C99.2 419.2 101.9 420.3 107.3 424.7C105.2 418.1 105.2 415.2 101.8 410.2C98.0 404.6 92.9 401.6 90.3 399.7ZM104.0 404.5C103.9 407.3 103.1 412.5 105.3 417.8C107.3 422.5 109.8 423.7 114.0 428.0C113.8 422.0 114.7 419.4 112.7 414.7C110.4 409.4 106.1 406.4 104.0 404.5ZM117.8 402.0C117.2 404.6 115.8 409.2 116.4 414.8C116.9 419.8 118.4 421.7 120.5 427.0C121.4 421.3 122.5 419.2 121.9 414.2C121.3 408.6 118.9 404.4 117.8 402.0ZM122.0 417.0C123.6 419.7 126.1 425.2 131.5 428.3C136.3 431.1 139.3 430.3 146.0 431.0C142.1 425.5 141.3 422.5 136.5 419.7C131.1 416.5 125.2 417.1 122.0 417.0ZM160.0 466.0C160.9 468.6 162.0 473.8 166.0 477.4C169.6 480.6 172.4 480.3 178.0 482.0C175.7 476.6 175.6 473.8 172.0 470.6C167.9 467.0 162.7 466.6 160.0 466.0ZM180.0 456.0C180.1 459.6 179.3 466.5 183.1 472.2C186.5 477.2 190.3 477.5 197.0 481.0C196.2 473.5 197.3 469.8 193.9 464.8C190.1 459.2 183.3 457.4 180.0 456.0ZM244.0 399.5C248.6 396.1 257.9 390.9 263.0 380.8C267.6 371.7 265.9 366.4 266.7 354.3C257.5 362.1 252.2 364.0 247.7 373.0C242.6 383.2 244.0 393.8 244.0 399.5ZM228.0 482.0C232.5 479.4 241.6 475.6 246.7 466.8C251.2 459.0 249.6 453.9 250.5 443.0C241.5 449.2 236.3 450.4 231.8 458.2C226.7 467.0 228.0 476.8 228.0 482.0ZM235.0 340.0C233.3 343.5 229.5 349.6 228.3 357.9C227.3 365.3 228.8 368.6 230.0 377.0C233.4 369.2 235.7 366.5 236.7 359.1C237.8 350.7 235.7 343.9 235.0 340.0ZM243.0 341.0C242.4 343.5 240.8 347.9 241.7 353.1C242.5 357.7 244.3 359.3 247.0 364.0C248.0 358.6 249.1 356.5 248.3 351.9C247.4 346.7 244.4 343.1 243.0 341.0ZM284.0 470.0C284.9 465.5 287.2 457.6 286.5 447.7C285.9 438.9 283.9 435.5 281.0 426.0C279.5 435.8 277.9 439.5 278.5 448.3C279.2 458.2 282.5 465.7 284.0 470.0ZM318.0 428.0C317.5 431.1 316.1 436.6 317.0 443.4C317.8 449.4 319.5 451.6 322.0 458.0C322.8 451.2 323.8 448.6 323.0 442.6C322.1 435.9 319.3 430.9 318.0 428.0ZM290.0 402.0C289.9 403.8 289.3 407.2 291.1 409.9C292.7 412.3 294.6 412.4 298.0 414.0C297.8 410.3 298.5 408.5 296.9 406.1C295.1 403.4 291.7 402.6 290.0 402.0ZM296.0 470.0C295.9 471.8 295.3 475.2 297.1 477.9C298.7 480.3 300.6 480.4 304.0 482.0C303.8 478.3 304.5 476.5 302.9 474.1C301.1 471.4 297.7 470.6 296.0 470.0ZM315.0 470.0C313.4 470.5 310.2 471.1 308.2 473.6C306.4 475.8 306.7 477.5 306.0 481.0C309.3 479.6 311.0 479.6 312.8 477.4C314.8 474.9 314.8 471.7 315.0 470.0ZM222.0 352.0C219.8 353.6 215.2 356.2 212.9 361.1C210.9 365.5 211.9 368.1 212.0 374.0C216.5 370.2 219.1 369.3 221.1 364.9C223.3 359.9 222.2 354.8 222.0 352.0ZM213.0 378.0C211.0 379.0 206.9 380.3 204.6 383.9C202.6 387.1 203.3 389.3 203.0 394.0C207.1 391.6 209.4 391.3 211.4 388.1C213.6 384.5 213.0 380.2 213.0 378.0ZM179.0 408.0C179.5 410.1 180.0 414.2 182.9 417.4C185.5 420.2 187.7 420.2 192.0 422.0C190.6 417.6 190.7 415.4 188.1 412.6C185.1 409.5 181.1 408.7 179.0 408.0ZM253.0 392.0C253.2 393.7 253.1 397.1 255.1 399.8C256.9 402.2 258.7 402.4 262.0 404.0C261.3 400.4 261.7 398.6 259.9 396.2C257.9 393.5 254.6 392.7 253.0 392.0ZM246.0 446.0C245.6 449.0 244.4 454.2 245.5 460.5C246.5 466.1 248.3 468.1 251.0 474.0C251.5 467.5 252.5 465.1 251.5 459.5C250.3 453.2 247.4 448.6 246.0 446.0ZM192.0 432.0C191.5 434.2 190.2 438.1 191.1 442.6C191.9 446.6 193.5 447.9 196.0 452.0C196.7 447.3 197.7 445.4 196.9 441.4C196.0 436.9 193.3 433.8 192.0 432.0ZM276.0 412.0C277.1 410.5 279.5 408.0 280.0 404.4C280.4 401.2 279.2 399.7 278.0 396.0C275.9 399.3 274.4 400.4 274.0 403.6C273.6 407.2 275.3 410.3 276.0 412.0ZM266.5 408.0C261.2 408.0 259.0 419.9 259.0 434.4C259.0 459.0 262.4 476.6 266.5 496.0C270.6 476.6 274.0 459.0 274.0 434.4C274.0 419.9 271.8 408.0 266.5 408.0ZM206.0 421.0C202.2 420.9 200.2 430.6 199.9 442.4C199.2 462.6 201.3 477.0 203.8 493.0C207.3 477.2 210.2 462.9 210.8 442.8C211.2 430.9 209.8 421.1 206.0 421.0Z" fill="none" stroke="#dcdcdc" stroke-width="6"/>
<path d="M230.3 319.5a8 8 0 1 0 16 0a8 8 0 1 0 -16 0ZM235.6 307.8C241.5 306.5 243.0 301.7 241.9 296.7C240.8 292.2 236.5 290.8 230.9 287.3C227.3 292.9 224.1 296.0 225.1 300.5C226.3 305.6 229.7 309.2 235.6 307.8ZM247.1 311.3C251.2 315.7 256.1 314.7 259.9 311.2C263.2 308.0 262.3 303.6 262.4 297.0C255.8 296.7 251.5 295.4 248.1 298.6C244.3 302.1 243.0 306.9 247.1 311.3ZM249.8 323.0C248.0 328.8 251.3 332.5 256.3 334.0C260.7 335.3 264.1 332.3 269.9 329.1C266.8 323.3 265.7 318.9 261.3 317.5C256.4 316.0 251.5 317.3 249.8 323.0ZM241.0 331.2C235.1 332.5 233.6 337.3 234.7 342.3C235.8 346.8 240.1 348.2 245.7 351.7C249.3 346.1 252.5 343.0 251.5 338.5C250.3 333.4 246.9 329.8 241.0 331.2ZM229.5 327.7C225.4 323.3 220.5 324.3 216.7 327.8C213.4 331.0 214.3 335.4 214.2 342.0C220.8 342.3 225.1 343.6 228.5 340.4C232.3 336.9 233.6 332.1 229.5 327.7ZM226.8 316.0C228.6 310.2 225.3 306.5 220.3 305.0C215.9 303.7 212.5 306.7 206.7 309.9C209.8 315.7 210.9 320.1 215.3 321.5C220.2 323.0 225.1 321.7 226.8 316.0ZM215.0 406.6a8 8 0 1 0 16 0a8 8 0 1 0 -16 0ZM216.5 396.5C220.7 393.8 220.5 389.6 218.1 385.8C215.9 382.5 212.1 382.6 206.7 381.4C205.5 386.9 203.9 390.3 206.0 393.7C208.4 397.4 212.2 399.3 216.5 396.5ZM226.8 395.2C231.6 396.8 234.8 394.0 236.2 389.8C237.4 386.0 235.0 383.1 232.5 378.1C227.5 380.6 223.8 381.5 222.5 385.3C221.1 389.5 222.0 393.6 226.8 395.2ZM234.3 402.5C236.0 407.2 240.2 408.0 244.4 406.4C248.1 405.1 248.8 401.4 251.2 396.3C246.1 393.9 243.1 391.6 239.4 392.9C235.2 394.5 232.5 397.7 234.3 402.5ZM233.3 412.8C230.6 417.1 232.6 420.9 236.4 423.2C239.8 425.2 243.2 423.5 248.6 422.2C247.3 416.7 247.3 412.9 243.9 410.9C240.1 408.6 235.9 408.5 233.3 412.8ZM224.5 418.5C219.5 419.1 217.8 423.0 218.4 427.5C218.9 431.4 222.4 432.9 226.8 436.4C230.2 431.9 233.2 429.6 232.7 425.6C232.1 421.2 229.5 417.9 224.5 418.5ZM214.6 415.2C211.0 411.7 206.9 412.8 203.8 416.0C201.1 418.9 202.0 422.5 202.1 428.1C207.7 428.0 211.4 428.9 214.2 426.0C217.3 422.8 218.3 418.7 214.6 415.2ZM211.1 405.4C211.5 400.4 208.1 397.9 203.7 397.5C199.8 397.1 197.5 400.1 193.1 403.7C196.7 408.0 198.4 411.4 202.3 411.8C206.7 412.2 210.6 410.5 211.1 405.4ZM153.8 437.6a6.8 6.8 0 1 0 13.6 0a6.8 6.8 0 1 0 -13.6 0ZM157.2 427.7C161.8 426.1 162.8 422.6 161.7 419.2C160.6 416.2 157.1 415.7 152.5 414.0C149.9 418.2 147.4 420.8 148.4 423.8C149.6 427.2 152.5 429.3 157.2 427.7ZM167.5 429.7C171.2 432.9 174.7 432.1 177.1 429.3C179.1 426.9 177.8 423.7 177.0 418.7C172.0 418.6 168.6 417.8 166.5 420.2C164.1 422.9 163.8 426.5 167.5 429.7ZM170.9 439.6C170.0 444.4 172.5 447.0 176.0 447.7C179.1 448.3 181.3 445.5 185.1 442.4C182.7 438.0 181.8 434.6 178.6 434.0C175.1 433.3 171.8 434.8 170.9 439.6ZM164.0 447.5C159.4 449.1 158.4 452.6 159.5 456.0C160.6 459.0 164.1 459.5 168.7 461.2C171.3 457.0 173.8 454.4 172.8 451.4C171.6 448.0 168.7 445.9 164.0 447.5ZM153.7 445.5C150.0 442.3 146.5 443.1 144.1 445.9C142.1 448.3 143.4 451.5 144.2 456.5C149.2 456.6 152.6 457.4 154.7 455.0C157.1 452.3 157.4 448.7 153.7 445.5ZM150.3 435.6C151.2 430.8 148.7 428.2 145.2 427.5C142.1 426.9 139.9 429.7 136.1 432.8C138.5 437.2 139.4 440.6 142.6 441.2C146.1 441.9 149.4 440.4 150.3 435.6ZM293.5 439.0a7 7 0 1 0 14 0a7 7 0 1 0 -14 0ZM301.4 428.5C305.7 428.9 307.9 426.0 308.2 422.1C308.5 418.7 305.9 416.8 302.8 413.1C299.1 416.2 296.1 417.7 295.8 421.1C295.5 424.9 297.1 428.2 301.4 428.5ZM309.2 433.2C311.6 436.8 315.3 436.6 318.5 434.5C321.3 432.6 321.2 429.3 322.2 424.6C317.4 423.7 314.5 422.3 311.6 424.2C308.4 426.3 306.8 429.6 309.2 433.2ZM310.5 442.2C309.2 446.4 311.6 449.1 315.2 450.3C318.5 451.3 321.0 449.2 325.2 447.0C323.0 442.7 322.3 439.5 319.0 438.5C315.4 437.3 311.8 438.1 310.5 442.2ZM304.2 448.8C300.2 450.4 299.5 454.0 300.9 457.5C302.1 460.7 305.3 461.3 309.7 463.3C311.7 458.9 313.7 456.3 312.5 453.2C311.1 449.6 308.3 447.3 304.2 448.8ZM295.1 448.0C291.4 445.8 288.2 447.6 286.2 450.9C284.5 453.8 286.0 456.7 287.2 461.4C291.9 460.2 295.2 460.1 296.9 457.2C298.9 453.9 298.9 450.2 295.1 448.0ZM290.1 440.4C289.5 436.1 286.1 434.7 282.3 435.2C279.0 435.7 277.7 438.7 274.7 442.6C278.6 445.5 280.7 448.0 284.0 447.5C287.8 447.0 290.7 444.7 290.1 440.4ZM292.9 431.8C295.9 428.6 294.9 425.1 292.1 422.5C289.6 420.1 286.5 421.0 281.7 421.1C281.8 425.9 281.1 429.1 283.6 431.4C286.3 434.1 289.9 434.9 292.9 431.8ZM90.3 399.7C91.1 402.8 92.0 408.6 95.8 414.2C99.2 419.2 101.9 420.3 107.3 424.7C105.2 418.1 105.2 415.2 101.8 410.2C98.0 404.6 92.9 401.6 90.3 399.7ZM104.0 404.5C103.9 407.3 103.1 412.5 105.3 417.8C107.3 422.5 109.8 423.7 114.0 428.0C113.8 422.0 114.7 419.4 112.7 414.7C110.4 409.4 106.1 406.4 104.0 404.5ZM117.8 402.0C117.2 404.6 115.8 409.2 116.4 414.8C116.9 419.8 118.4 421.7 120.5 427.0C121.4 421.3 122.5 419.2 121.9 414.2C121.3 408.6 118.9 404.4 117.8 402.0ZM122.0 417.0C123.6 419.7 126.1 425.2 131.5 428.3C136.3 431.1 139.3 430.3 146.0 431.0C142.1 425.5 141.3 422.5 136.5 419.7C131.1 416.5 125.2 417.1 122.0 417.0ZM160.0 466.0C160.9 468.6 162.0 473.8 166.0 477.4C169.6 480.6 172.4 480.3 178.0 482.0C175.7 476.6 175.6 473.8 172.0 470.6C167.9 467.0 162.7 466.6 160.0 466.0ZM180.0 456.0C180.1 459.6 179.3 466.5 183.1 472.2C186.5 477.2 190.3 477.5 197.0 481.0C196.2 473.5 197.3 469.8 193.9 464.8C190.1 459.2 183.3 457.4 180.0 456.0ZM244.0 399.5C248.6 396.1 257.9 390.9 263.0 380.8C267.6 371.7 265.9 366.4 266.7 354.3C257.5 362.1 252.2 364.0 247.7 373.0C242.6 383.2 244.0 393.8 244.0 399.5ZM228.0 482.0C232.5 479.4 241.6 475.6 246.7 466.8C251.2 459.0 249.6 453.9 250.5 443.0C241.5 449.2 236.3 450.4 231.8 458.2C226.7 467.0 228.0 476.8 228.0 482.0ZM235.0 340.0C233.3 343.5 229.5 349.6 228.3 357.9C227.3 365.3 228.8 368.6 230.0 377.0C233.4 369.2 235.7 366.5 236.7 359.1C237.8 350.7 235.7 343.9 235.0 340.0ZM243.0 341.0C242.4 343.5 240.8 347.9 241.7 353.1C242.5 357.7 244.3 359.3 247.0 364.0C248.0 358.6 249.1 356.5 248.3 351.9C247.4 346.7 244.4 343.1 243.0 341.0ZM284.0 470.0C284.9 465.5 287.2 457.6 286.5 447.7C285.9 438.9 283.9 435.5 281.0 426.0C279.5 435.8 277.9 439.5 278.5 448.3C279.2 458.2 282.5 465.7 284.0 470.0ZM318.0 428.0C317.5 431.1 316.1 436.6 317.0 443.4C317.8 449.4 319.5 451.6 322.0 458.0C322.8 451.2 323.8 448.6 323.0 442.6C322.1 435.9 319.3 430.9 318.0 428.0ZM290.0 402.0C289.9 403.8 289.3 407.2 291.1 409.9C292.7 412.3 294.6 412.4 298.0 414.0C297.8 410.3 298.5 408.5 296.9 406.1C295.1 403.4 291.7 402.6 290.0 402.0ZM296.0 470.0C295.9 471.8 295.3 475.2 297.1 477.9C298.7 480.3 300.6 480.4 304.0 482.0C303.8 478.3 304.5 476.5 302.9 474.1C301.1 471.4 297.7 470.6 296.0 470.0ZM315.0 470.0C313.4 470.5 310.2 471.1 308.2 473.6C306.4 475.8 306.7 477.5 306.0 481.0C309.3 479.6 311.0 479.6 312.8 477.4C314.8 474.9 314.8 471.7 315.0 470.0ZM222.0 352.0C219.8 353.6 215.2 356.2 212.9 361.1C210.9 365.5 211.9 368.1 212.0 374.0C216.5 370.2 219.1 369.3 221.1 364.9C223.3 359.9 222.2 354.8 222.0 352.0ZM213.0 378.0C211.0 379.0 206.9 380.3 204.6 383.9C202.6 387.1 203.3 389.3 203.0 394.0C207.1 391.6 209.4 391.3 211.4 388.1C213.6 384.5 213.0 380.2 213.0 378.0ZM179.0 408.0C179.5 410.1 180.0 414.2 182.9 417.4C185.5 420.2 187.7 420.2 192.0 422.0C190.6 417.6 190.7 415.4 188.1 412.6C185.1 409.5 181.1 408.7 179.0 408.0ZM253.0 392.0C253.2 393.7 253.1 397.1 255.1 399.8C256.9 402.2 258.7 402.4 262.0 404.0C261.3 400.4 261.7 398.6 259.9 396.2C257.9 393.5 254.6 392.7 253.0 392.0ZM246.0 446.0C245.6 449.0 244.4 454.2 245.5 460.5C246.5 466.1 248.3 468.1 251.0 474.0C251.5 467.5 252.5 465.1 251.5 459.5C250.3 453.2 247.4 448.6 246.0 446.0ZM192.0 432.0C191.5 434.2 190.2 438.1 191.1 442.6C191.9 446.6 193.5 447.9 196.0 452.0C196.7 447.3 197.7 445.4 196.9 441.4C196.0 436.9 193.3 433.8 192.0 432.0ZM276.0 412.0C277.1 410.5 279.5 408.0 280.0 404.4C280.4 401.2 279.2 399.7 278.0 396.0C275.9 399.3 274.4 400.4 274.0 403.6C273.6 407.2 275.3 410.3 276.0 412.0ZM266.5 408.0C261.2 408.0 259.0 419.9 259.0 434.4C259.0 459.0 262.4 476.6 266.5 496.0C270.6 476.6 274.0 459.0 274.0 434.4C274.0 419.9 271.8 408.0 266.5 408.0ZM206.0 421.0C202.2 420.9 200.2 430.6 199.9 442.4C199.2 462.6 201.3 477.0 203.8 493.0C207.3 477.2 210.2 462.9 210.8 442.8C211.2 430.9 209.8 421.1 206.0 421.0Z" fill="#fcfcfc" stroke="#7a7a7a" stroke-width="0.7"/>
<path d="M235.8 308.8L233.6 299.2M246.3 312.0L253.5 305.3M248.8 322.7L258.2 325.6M240.8 330.2L243.0 339.8M230.3 327.0L223.1 333.7M227.8 316.3L218.4 313.4M217.0 397.4L212.3 390.2M226.5 396.2L229.2 388.0M233.3 402.8L241.4 399.9M232.4 412.3L239.7 416.8M224.4 417.5L225.5 426.0M215.3 414.5L209.4 420.6M212.1 405.5L203.5 404.7M157.5 428.6L155.2 421.9M166.8 430.4L171.5 425.1M169.9 439.4L176.9 440.8M163.7 446.6L166.0 453.3M154.4 444.8L149.7 450.1M151.3 435.8L144.3 434.4M301.3 429.5L302.0 422.1M308.4 433.7L314.7 429.6M309.5 441.9L316.7 444.2M303.9 447.9L306.5 454.9M295.6 447.2L291.8 453.6M291.1 440.3L283.6 441.3M293.6 432.5L288.2 427.3M246 396L264 360M251 386l-5-9M252 384l9 1M257 375l-5-8M258 373l8 1M231 478L248 448M236 469l-4-8M237 467l9 2M242 459l-4-7M243 457l8 1M181 458L195 478" fill="none" stroke="#7a7a7a" stroke-width="4"/><path d="M235.8 308.8L233.6 299.2M246.3 312.0L253.5 305.3M248.8 322.7L258.2 325.6M240.8 330.2L243.0 339.8M230.3 327.0L223.1 333.7M227.8 316.3L218.4 313.4M217.0 397.4L212.3 390.2M226.5 396.2L229.2 388.0M233.3 402.8L241.4 399.9M232.4 412.3L239.7 416.8M224.4 417.5L225.5 426.0M215.3 414.5L209.4 420.6M212.1 405.5L203.5 404.7M157.5 428.6L155.2 421.9M166.8 430.4L171.5 425.1M169.9 439.4L176.9 440.8M163.7 446.6L166.0 453.3M154.4 444.8L149.7 450.1M151.3 435.8L144.3 434.4M301.3 429.5L302.0 422.1M308.4 433.7L314.7 429.6M309.5 441.9L316.7 444.2M303.9 447.9L306.5 454.9M295.6 447.2L291.8 453.6M291.1 440.3L283.6 441.3M293.6 432.5L288.2 427.3M246 396L264 360M251 386l-5-9M252 384l9 1M257 375l-5-8M258 373l8 1M231 478L248 448M236 469l-4-8M237 467l9 2M242 459l-4-7M243 457l8 1M181 458L195 478" fill="none" stroke="#dcdcdc" stroke-width="2.8"/>
<path d="M215.0 283.0C200.3 286.2 199.3 294.2 192.0 302.0C184.7 309.8 177.7 321.7 171.0 330.0C164.3 338.3 156.8 344.0 152.0 352.0C147.2 360.0 144.2 370.0 142.0 378.0C139.8 386.0 139.2 394.8 139.0 400.0C138.8 405.2 142.3 408.8 141.0 409.0C139.7 409.2 133.8 404.3 131.0 401.0C128.2 397.7 125.3 394.7 124.0 389.0C122.7 383.3 124.2 374.2 123.0 367.0C121.8 359.8 120.0 350.8 117.0 346.0C114.0 341.2 109.2 337.3 105.0 338.0C100.8 338.7 95.5 344.3 92.0 350.0C88.5 355.7 85.2 364.5 84.0 372.0C82.8 379.5 84.0 387.8 85.0 395.0C86.0 402.2 87.3 409.0 90.0 415.0C92.7 421.0 97.2 426.8 101.0 431.0C104.8 435.2 108.3 437.5 113.0 440.0C117.7 442.5 124.0 444.3 129.0 446.0C134.0 447.7 139.2 448.2 143.0 450.0C146.8 451.8 149.8 454.0 152.0 457.0C154.2 460.0 154.2 464.3 156.0 468.0C157.8 471.7 158.8 476.0 163.0 479.0C167.2 482.0 175.3 484.8 181.0 486.0C186.7 487.2 192.5 486.5 197.0 486.0C201.5 485.5 204.2 482.6 208.0 483.0C211.8 483.4 215.8 487.2 220.0 488.5C224.2 489.8 228.5 490.6 233.0 491.0C237.5 491.4 242.8 491.7 247.0 491.0C251.2 490.3 255.0 488.5 258.0 487.0C261.0 485.5 262.5 483.4 265.0 482.0C267.5 480.6 270.5 478.3 273.0 478.5C275.5 478.7 276.8 481.8 280.0 483.0C283.2 484.2 287.5 485.5 292.0 485.5C296.5 485.5 303.0 484.6 307.0 483.0C311.0 481.4 313.5 478.8 316.0 476.0C318.5 473.2 320.0 471.3 322.0 466.0C324.0 460.7 326.7 452.2 328.0 444.0C329.3 435.8 329.3 424.3 330.0 417.0C330.7 409.7 332.3 408.3 332.0 400.0C331.7 391.7 330.0 377.7 328.0 367.0C326.0 356.3 322.7 345.7 320.0 336.0C317.3 326.3 315.3 316.3 312.0 309.0C308.7 301.7 305.3 296.3 300.0 292.0C294.7 287.7 294.2 284.5 280.0 283.0C265.8 281.5 229.7 279.8 215.0 283.0Z" fill="none" stroke="#7a7a7a" stroke-width="7.4"/><path d="M215.0 283.0C200.3 286.2 199.3 294.2 192.0 302.0C184.7 309.8 177.7 321.7 171.0 330.0C164.3 338.3 156.8 344.0 152.0 352.0C147.2 360.0 144.2 370.0 142.0 378.0C139.8 386.0 139.2 394.8 139.0 400.0C138.8 405.2 142.3 408.8 141.0 409.0C139.7 409.2 133.8 404.3 131.0 401.0C128.2 397.7 125.3 394.7 124.0 389.0C122.7 383.3 124.2 374.2 123.0 367.0C121.8 359.8 120.0 350.8 117.0 346.0C114.0 341.2 109.2 337.3 105.0 338.0C100.8 338.7 95.5 344.3 92.0 350.0C88.5 355.7 85.2 364.5 84.0 372.0C82.8 379.5 84.0 387.8 85.0 395.0C86.0 402.2 87.3 409.0 90.0 415.0C92.7 421.0 97.2 426.8 101.0 431.0C104.8 435.2 108.3 437.5 113.0 440.0C117.7 442.5 124.0 444.3 129.0 446.0C134.0 447.7 139.2 448.2 143.0 450.0C146.8 451.8 149.8 454.0 152.0 457.0C154.2 460.0 154.2 464.3 156.0 468.0C157.8 471.7 158.8 476.0 163.0 479.0C167.2 482.0 175.3 484.8 181.0 486.0C186.7 487.2 192.5 486.5 197.0 486.0C201.5 485.5 204.2 482.6 208.0 483.0C211.8 483.4 215.8 487.2 220.0 488.5C224.2 489.8 228.5 490.6 233.0 491.0C237.5 491.4 242.8 491.7 247.0 491.0C251.2 490.3 255.0 488.5 258.0 487.0C261.0 485.5 262.5 483.4 265.0 482.0C267.5 480.6 270.5 478.3 273.0 478.5C275.5 478.7 276.8 481.8 280.0 483.0C283.2 484.2 287.5 485.5 292.0 485.5C296.5 485.5 303.0 484.6 307.0 483.0C311.0 481.4 313.5 478.8 316.0 476.0C318.5 473.2 320.0 471.3 322.0 466.0C324.0 460.7 326.7 452.2 328.0 444.0C329.3 435.8 329.3 424.3 330.0 417.0C330.7 409.7 332.3 408.3 332.0 400.0C331.7 391.7 330.0 377.7 328.0 367.0C326.0 356.3 322.7 345.7 320.0 336.0C317.3 326.3 315.3 316.3 312.0 309.0C308.7 301.7 305.3 296.3 300.0 292.0C294.7 287.7 294.2 284.5 280.0 283.0C265.8 281.5 229.7 279.8 215.0 283.0Z" fill="none" stroke="#dcdcdc" stroke-width="6.2"/></g>
<path d="M215.0 283.0C200.3 286.2 199.3 294.2 192.0 302.0C184.7 309.8 177.7 321.7 171.0 330.0C164.3 338.3 156.8 344.0 152.0 352.0C147.2 360.0 144.2 370.0 142.0 378.0C139.8 386.0 139.2 394.8 139.0 400.0C138.8 405.2 142.3 408.8 141.0 409.0C139.7 409.2 133.8 404.3 131.0 401.0C128.2 397.7 125.3 394.7 124.0 389.0C122.7 383.3 124.2 374.2 123.0 367.0C121.8 359.8 120.0 350.8 117.0 346.0C114.0 341.2 109.2 337.3 105.0 338.0C100.8 338.7 95.5 344.3 92.0 350.0C88.5 355.7 85.2 364.5 84.0 372.0C82.8 379.5 84.0 387.8 85.0 395.0C86.0 402.2 87.3 409.0 90.0 415.0C92.7 421.0 97.2 426.8 101.0 431.0C104.8 435.2 108.3 437.5 113.0 440.0C117.7 442.5 124.0 444.3 129.0 446.0C134.0 447.7 139.2 448.2 143.0 450.0C146.8 451.8 149.8 454.0 152.0 457.0C154.2 460.0 154.2 464.3 156.0 468.0C157.8 471.7 158.8 476.0 163.0 479.0C167.2 482.0 175.3 484.8 181.0 486.0C186.7 487.2 192.5 486.5 197.0 486.0C201.5 485.5 204.2 482.6 208.0 483.0C211.8 483.4 215.8 487.2 220.0 488.5C224.2 489.8 228.5 490.6 233.0 491.0C237.5 491.4 242.8 491.7 247.0 491.0C251.2 490.3 255.0 488.5 258.0 487.0C261.0 485.5 262.5 483.4 265.0 482.0C267.5 480.6 270.5 478.3 273.0 478.5C275.5 478.7 276.8 481.8 280.0 483.0C283.2 484.2 287.5 485.5 292.0 485.5C296.5 485.5 303.0 484.6 307.0 483.0C311.0 481.4 313.5 478.8 316.0 476.0C318.5 473.2 320.0 471.3 322.0 466.0C324.0 460.7 326.7 452.2 328.0 444.0C329.3 435.8 329.3 424.3 330.0 417.0C330.7 409.7 332.3 408.3 332.0 400.0C331.7 391.7 330.0 377.7 328.0 367.0C326.0 356.3 322.7 345.7 320.0 336.0C317.3 326.3 315.3 316.3 312.0 309.0C308.7 301.7 305.3 296.3 300.0 292.0C294.7 287.7 294.2 284.5 280.0 283.0C265.8 281.5 229.7 279.8 215.0 283.0Z" fill="none" stroke="#7a7a7a" stroke-width="0.8"/>
<path d="M193.0 301.0C189.0 304.8 186.7 308.2 183.0 313.0C179.3 317.8 174.7 325.2 171.0 330.0C167.3 334.8 164.2 338.3 161.0 342.0C157.8 345.7 154.5 348.2 152.0 352.0C149.5 355.8 147.7 360.7 146.0 365.0C144.3 369.3 143.1 373.8 142.0 378.0C140.9 382.2 139.9 386.0 139.5 390.0C139.1 394.0 139.1 398.2 139.5 402.0C139.9 405.8 140.8 410.0 142.0 413.0C143.2 416.0 145.2 419.5 147.0 420.0C148.8 420.5 151.0 417.7 153.0 416.0C155.0 414.3 156.8 411.5 159.0 410.0C161.2 408.5 162.8 409.0 166.0 407.0C169.2 405.0 174.0 401.2 178.0 398.0C182.0 394.8 186.8 391.2 190.0 388.0C193.2 384.8 194.9 382.0 197.0 379.0C199.1 376.0 201.5 372.8 202.5 370.0C203.5 367.2 203.4 364.7 203.0 362.0C202.6 359.3 199.3 356.5 200.0 354.0C200.7 351.5 204.8 349.2 207.0 347.0C209.2 344.8 211.5 343.0 213.2 341.0C214.9 339.0 216.1 337.2 217.0 335.0C217.9 332.8 219.5 330.5 218.5 328.0C217.5 325.5 213.6 322.3 211.0 320.0C208.4 317.7 203.8 317.3 203.0 314.0C202.2 310.7 205.3 304.0 206.0 300.0C206.7 296.0 209.2 289.8 207.0 290.0C204.8 290.2 197.0 297.2 193.0 301.0ZM262.0 281.0C263.7 279.8 273.7 284.2 280.0 286.0C286.3 287.8 295.5 289.7 300.0 292.0C304.5 294.3 305.0 297.2 307.0 300.0C309.0 302.8 310.5 305.3 312.0 309.0C313.5 312.7 314.7 317.5 316.0 322.0C317.3 326.5 318.7 331.2 320.0 336.0C321.3 340.8 322.7 345.8 324.0 351.0C325.3 356.2 326.9 361.5 328.0 367.0C329.1 372.5 329.8 378.5 330.5 384.0C331.2 389.5 331.8 396.0 332.0 400.0C332.2 404.0 331.8 405.5 331.5 408.0C331.2 410.5 332.1 413.2 330.0 415.0C327.9 416.8 322.8 417.8 319.0 419.0C315.2 420.2 309.5 423.5 307.0 422.5C304.5 421.5 304.8 416.1 304.0 413.0C303.2 409.9 302.0 407.0 302.0 404.0C302.0 401.0 303.2 398.0 304.0 395.0C304.8 392.0 308.3 386.8 307.0 386.0C305.7 385.2 299.7 388.8 296.0 390.0C292.3 391.2 287.7 395.0 285.0 393.5C282.3 392.0 281.3 384.9 280.0 381.0C278.7 377.1 278.0 373.2 277.0 370.0C276.0 366.8 275.0 364.7 274.0 362.0C273.0 359.3 272.7 356.2 271.0 354.0C269.3 351.8 266.2 350.8 264.0 349.0C261.8 347.2 257.8 344.5 258.0 343.0C258.2 341.5 263.0 341.2 265.0 340.0C267.0 338.8 269.7 337.2 270.0 335.5C270.3 333.8 267.7 331.8 267.0 330.0C266.3 328.2 265.5 326.5 266.0 325.0C266.5 323.5 268.8 322.3 270.0 321.0C271.2 319.7 273.0 318.3 273.0 317.0C273.0 315.7 270.8 314.3 270.0 313.0C269.2 311.7 268.1 311.0 268.0 309.0C267.9 307.0 269.2 303.7 269.5 301.0C269.8 298.3 271.2 296.3 270.0 293.0C268.8 289.7 260.3 282.2 262.0 281.0Z" fill="#141414" stroke="#000" stroke-width="1.2"/>
<g clip-path="url(#cp)"><path d="M297.5 352.3a9 9 0 1 0 18 0a9 9 0 1 0 -18 0ZM170.500 337.500A11 11 0 0 1 186.500 353.500ZM294.0 347.5C294.9 341.5 289.5 338.1 282.4 337.1C275.4 336.0 270.9 339.3 263.5 343.0C269.5 348.7 272.9 353.1 279.9 354.1C287.0 355.2 293.1 353.5 294.0 347.5ZM303.5 338.0C309.1 337.5 311.0 331.8 310.5 325.0C309.9 318.3 306.0 314.8 301.0 308.8C297.1 315.6 293.8 319.6 294.4 326.4C295.0 333.2 297.9 338.5 303.5 338.0ZM298.8 361.7C294.0 358.8 289.2 361.9 286.0 367.3C282.7 372.7 284.0 377.6 284.7 385.0C291.6 382.2 296.5 381.1 299.8 375.7C303.0 370.3 303.6 364.6 298.8 361.7ZM310.0 365.0C306.2 367.3 306.7 371.7 309.2 375.9C311.8 380.0 315.6 380.9 321.0 383.0C321.5 377.2 322.6 373.4 320.0 369.3C317.5 365.1 313.8 362.7 310.0 365.0ZM290.5 331.0C290.6 327.4 291.7 320.2 287.8 316.0C284.3 312.3 280.2 313.3 273.0 312.3C273.5 319.5 272.2 323.5 275.7 327.3C279.7 331.5 286.9 330.8 290.5 331.0ZM285.8 308.8C289.5 306.4 289.2 302.3 286.7 298.5C284.3 294.6 280.5 294.1 275.3 292.3C274.7 297.8 273.6 301.4 276.1 305.3C278.5 309.1 282.1 311.2 285.8 308.8ZM296.0 300.0C296.1 298.4 296.8 295.5 295.5 292.8C294.3 290.4 292.7 290.0 290.0 288.0C290.0 291.3 289.3 292.8 290.5 295.2C291.9 297.9 294.7 299.2 296.0 300.0ZM317.0 345.0C317.0 348.0 316.3 353.5 318.4 359.5C320.2 364.9 322.3 366.6 326.0 372.0C325.7 365.5 326.4 362.9 324.6 357.5C322.6 351.4 318.8 347.4 317.0 345.0ZM313.0 318.0C313.5 315.9 314.8 312.2 313.7 308.1C312.7 304.5 310.8 303.5 308.0 300.0C307.4 304.4 306.3 306.3 307.3 309.9C308.4 313.9 311.5 316.5 313.0 318.0ZM322.3 390.0C318.4 391.9 310.2 394.4 306.8 401.2C303.7 407.3 306.0 411.5 307.0 420.4C314.7 415.9 319.5 415.2 322.5 409.2C326.0 402.3 323.1 394.2 322.3 390.0ZM185.8 328.0C187.9 327.1 192.3 325.8 194.6 322.1C196.7 318.8 195.8 316.5 196.0 311.6C191.7 313.9 189.2 314.2 187.2 317.5C184.9 321.2 185.7 325.7 185.8 328.0ZM190.0 339.0C191.3 344.5 195.9 345.9 200.9 344.7C205.8 343.6 207.8 339.4 211.5 334.0C205.8 330.8 202.2 327.9 197.2 329.1C192.2 330.2 188.7 333.5 190.0 339.0ZM178.6 353.7C174.9 358.5 177.4 363.6 182.4 367.4C187.3 371.2 192.4 370.2 200.0 370.0C198.2 362.6 197.8 357.5 192.8 353.7C187.9 349.9 182.3 348.9 178.6 353.7ZM168.4 355.7C163.8 352.5 159.6 354.2 157.0 357.9C154.4 361.7 155.9 365.9 157.0 372.0C163.1 371.0 167.6 370.9 170.2 367.2C172.8 363.4 173.0 358.9 168.4 355.7ZM192.0 376.3C185.9 376.2 173.9 374.4 164.9 380.8C156.9 386.6 156.9 393.3 152.0 405.0C164.7 404.1 171.1 406.2 179.1 400.5C188.1 394.0 190.1 382.1 192.0 376.3ZM146.0 380.0C144.9 382.7 142.4 387.4 141.8 393.7C141.2 399.3 142.2 401.7 143.0 408.0C145.2 402.0 146.6 399.9 147.2 394.3C147.9 388.0 146.5 382.9 146.0 380.0ZM170.0 338.0C171.7 336.8 175.2 335.1 177.0 331.5C178.6 328.3 177.9 326.3 178.0 322.0C174.6 324.7 172.6 325.3 171.0 328.5C169.2 332.1 169.9 336.0 170.0 338.0Z" fill="#414141" stroke="#000" stroke-width="0.7"/><path d="M294.0 347.5L280.3 345.5M303.5 338.0L302.4 324.9M298.8 361.7L292.5 372.2M310.0 365.0L314.9 373.1M285.8 308.8L281.1 301.4M322.3 390.0L307.0 420.4M317.7 399.1L313.4 391.6M317.7 399.1L326.3 398.1M314.3 405.8L310.1 398.3M314.3 405.8L322.9 404.8M311.0 412.5L306.7 405.0M311.0 412.5L319.6 411.5M190.0 339.0L199.7 336.8M178.6 353.7L188.2 361.0M168.4 355.7L163.3 363.0M192.0 376.3L152.0 405.0M180.0 384.9L179.8 372.8M180.0 384.9L191.4 388.9M171.2 391.2L171.0 379.2M171.2 391.2L182.6 395.2M162.4 397.5L162.2 385.5M162.4 397.5L173.8 401.6" fill="none" stroke="#000" stroke-width="3"/><path d="M294.0 347.5L280.3 345.5M303.5 338.0L302.4 324.9M298.8 361.7L292.5 372.2M310.0 365.0L314.9 373.1M285.8 308.8L281.1 301.4M322.3 390.0L307.0 420.4M317.7 399.1L313.4 391.6M317.7 399.1L326.3 398.1M314.3 405.8L310.1 398.3M314.3 405.8L322.9 404.8M311.0 412.5L306.7 405.0M311.0 412.5L319.6 411.5M190.0 339.0L199.7 336.8M178.6 353.7L188.2 361.0M168.4 355.7L163.3 363.0M192.0 376.3L152.0 405.0M180.0 384.9L179.8 372.8M180.0 384.9L191.4 388.9M171.2 391.2L171.0 379.2M171.2 391.2L182.6 395.2M162.4 397.5L162.2 385.5M162.4 397.5L173.8 401.6" fill="none" stroke="#141414" stroke-width="1.9"/></g>
<path d="M105.0 337.5C101.7 337.3 98.8 340.6 96.0 344.0C93.2 347.4 90.0 353.3 88.0 358.0C86.0 362.7 84.5 367.5 84.0 372.0C83.5 376.5 84.2 381.3 85.0 385.0C85.8 388.7 87.2 391.5 89.0 394.0C90.8 396.5 93.3 398.6 96.0 400.0C98.7 401.4 102.0 402.9 105.0 402.7C108.0 402.5 111.3 400.8 114.0 399.0C116.7 397.2 119.3 395.2 121.0 392.0C122.7 388.8 123.6 384.2 124.0 380.0C124.4 375.8 124.2 371.3 123.5 367.0C122.8 362.7 121.2 357.7 120.0 354.0C118.8 350.3 118.5 347.8 116.0 345.0C113.5 342.2 108.3 337.7 105.0 337.5Z" fill="#141414" stroke="#000" stroke-width="1.2"/>
<path d="M105.0 342.6C102.3 342.4 100.0 345.2 97.8 348.1C95.5 351.1 92.9 356.2 91.3 360.2C89.8 364.2 88.6 368.4 88.2 372.2C87.8 376.1 88.3 380.2 89.0 383.4C89.6 386.6 90.7 389.0 92.2 391.1C93.6 393.3 95.6 395.1 97.8 396.3C99.9 397.5 102.5 398.8 105.0 398.6C107.4 398.5 110.0 397.0 112.2 395.4C114.3 393.9 116.4 392.1 117.8 389.4C119.1 386.7 119.8 382.7 120.2 379.1C120.5 375.5 120.3 371.6 119.8 367.9C119.2 364.2 118.0 359.9 117.0 356.7C116.0 353.6 115.8 351.4 113.8 349.0C111.8 346.6 107.6 342.7 105.0 342.6Z" fill="#414141" stroke="#000" stroke-width="0.7"/>
<g clip-path="url(#ct)"><path d="M104.500 399L106 343M104.800 390l-13-10M104.800 390l13-9M105.200 375l-14-9M105.200 375l14-8M105.600 360l-10-7M105.600 360l10-6M104.600 396l-7-4M104.600 396l8-4" fill="none" stroke="#000" stroke-width="3.2"/><path d="M104.500 399L106 343M104.800 390l-13-10M104.800 390l13-9M105.200 375l-14-9M105.200 375l14-8M105.600 360l-10-7M105.600 360l10-6M104.600 396l-7-4M104.600 396l8-4" fill="none" stroke="#141414" stroke-width="2"/></g>
<path d="M207.0 138.0C207.8 134.2 199.8 140.7 197.0 142.5C194.2 144.3 192.2 147.1 190.0 149.0C187.8 150.9 185.7 152.0 184.0 154.0C182.3 156.0 181.7 159.2 180.0 161.0C178.3 162.8 175.5 163.2 174.0 165.0C172.5 166.8 172.5 170.0 171.0 172.0C169.5 174.0 166.3 174.8 165.0 177.0C163.7 179.2 164.0 182.3 163.0 185.0C162.0 187.7 159.8 190.0 159.0 193.0C158.2 196.0 158.8 200.0 158.0 203.0C157.2 206.0 155.2 208.0 154.0 211.0C152.8 214.0 152.3 218.0 151.0 221.0C149.7 224.0 147.3 226.3 146.0 229.0C144.7 231.7 144.7 234.7 143.0 237.0C141.3 239.3 137.8 240.7 136.0 243.0C134.2 245.3 133.4 248.5 132.0 251.0C130.6 253.5 128.4 255.5 127.5 258.0C126.6 260.5 126.8 263.7 126.5 266.0C126.2 268.3 125.2 269.8 125.5 272.0C125.8 274.2 127.3 276.5 128.0 279.0C128.7 281.5 128.2 285.0 129.5 287.0C130.8 289.0 134.1 289.3 136.0 291.0C137.9 292.7 138.7 295.7 141.0 297.0C143.3 298.3 147.2 298.0 150.0 299.0C152.8 300.0 155.2 302.3 158.0 303.0C160.8 303.7 164.0 302.7 167.0 303.0C170.0 303.3 173.2 305.2 176.0 305.0C178.8 304.8 181.2 302.7 184.0 302.0C186.8 301.3 190.5 302.2 193.0 301.0C195.5 299.8 196.8 296.8 199.0 295.0C201.2 293.2 204.2 292.5 206.0 290.0C207.8 287.5 208.7 284.0 210.0 280.0C211.3 276.0 214.0 271.0 214.0 266.0C214.0 261.0 212.0 255.3 210.0 250.0C208.0 244.7 205.0 239.8 202.0 234.0C199.0 228.2 194.3 222.3 192.0 215.0C189.7 207.7 188.0 198.3 188.0 190.0C188.0 181.7 188.8 173.7 192.0 165.0C195.2 156.3 206.2 141.8 207.0 138.0ZM295.0 140.0C295.2 137.2 302.2 143.2 305.0 145.0C307.8 146.8 309.7 149.0 312.0 151.0C314.3 153.0 317.2 154.8 319.0 157.0C320.8 159.2 321.5 161.8 323.0 164.0C324.5 166.2 326.7 167.7 328.0 170.0C329.3 172.3 329.7 175.7 331.0 178.0C332.3 180.3 334.8 181.5 336.0 184.0C337.2 186.5 336.8 190.3 338.0 193.0C339.2 195.7 341.7 197.7 343.0 200.0C344.3 202.3 344.3 205.0 346.0 207.0C347.7 209.0 351.2 210.0 353.0 212.0C354.8 214.0 355.3 216.8 357.0 219.0C358.7 221.2 361.5 222.7 363.0 225.0C364.5 227.3 364.7 230.7 366.0 233.0C367.3 235.3 369.8 236.7 371.0 239.0C372.2 241.3 372.0 244.7 373.0 247.0C374.0 249.3 376.3 250.7 377.0 253.0C377.7 255.3 377.2 258.5 377.0 261.0C376.8 263.5 376.8 265.8 376.0 268.0C375.2 270.2 372.8 271.7 372.0 274.0C371.2 276.3 372.2 279.8 371.0 282.0C369.8 284.2 366.7 285.0 365.0 287.0C363.3 289.0 363.0 292.3 361.0 294.0C359.0 295.7 355.3 295.7 353.0 297.0C350.7 298.3 349.3 301.2 347.0 302.0C344.7 302.8 341.7 301.5 339.0 302.0C336.3 302.5 333.8 304.8 331.0 305.0C328.2 305.2 325.0 303.5 322.0 303.0C319.0 302.5 315.7 302.8 313.0 302.0C310.3 301.2 308.2 299.3 306.0 298.0C303.8 296.7 302.0 296.0 300.0 294.0C298.0 292.0 296.0 290.0 294.0 286.0C292.0 282.0 289.0 275.0 288.0 270.0C287.0 265.0 287.0 261.7 288.0 256.0C289.0 250.3 291.7 242.8 294.0 236.0C296.3 229.2 299.7 222.7 302.0 215.0C304.3 207.3 307.7 198.8 308.0 190.0C308.3 181.2 306.2 170.3 304.0 162.0C301.8 153.7 294.8 142.8 295.0 140.0Z" fill="#101010" stroke="#000" stroke-width="1.2"/>
<path d="M165 193Q174.0 208.2 159 216M146 250Q147.2 237.1 159 235.5M172 238Q177.5 246.2 168 253M148 236Q158.0 242.5 156 252M152 268Q152.8 254.5 167 256M137 266Q128.0 278.2 143 283M159 267Q171.8 280.0 162 293M179 268Q188.0 247.5 197 272M176 292Q186.8 294.5 187 282M196 275Q208.5 283.0 200 291M320 188Q321.0 210.5 340 212M310 238Q322.5 224.2 332 251M300 243Q312.2 249.2 305 260M353 236Q370.5 244.8 361 261M341 251Q351.8 262.8 334 270M311 262Q324.8 257.2 322 275M350 282Q346.8 264.8 363 267M329 278Q338.0 294.0 347 286M314 285Q315.5 298.8 326 296" fill="none" stroke="#1c1c1c" stroke-width="3.7"/><path d="M165 193Q174.0 208.2 159 216M146 250Q147.2 237.1 159 235.5M172 238Q177.5 246.2 168 253M148 236Q158.0 242.5 156 252M152 268Q152.8 254.5 167 256M137 266Q128.0 278.2 143 283M159 267Q171.8 280.0 162 293M179 268Q188.0 247.5 197 272M176 292Q186.8 294.5 187 282M196 275Q208.5 283.0 200 291M320 188Q321.0 210.5 340 212M310 238Q322.5 224.2 332 251M300 243Q312.2 249.2 305 260M353 236Q370.5 244.8 361 261M341 251Q351.8 262.8 334 270M311 262Q324.8 257.2 322 275M350 282Q346.8 264.8 363 267M329 278Q338.0 294.0 347 286M314 285Q315.5 298.8 326 296" fill="none" stroke="#303030" stroke-width="2.7"/>
<path d="M165 193Q174.0 208.2 159 216M172 238Q177.5 246.2 168 253M179 268Q188.0 247.5 197 272M196 275Q208.5 283.0 200 291M320 188Q321.0 210.5 340 212M310 238Q322.5 224.2 332 251M300 243Q312.2 249.2 305 260M311 262Q324.8 257.2 322 275" fill="none" stroke="#9b5a26" stroke-width="2.1"/>
<path d="M248.0 128.0C240.3 128.0 232.2 128.7 225.0 130.5C217.8 132.3 210.8 134.8 205.0 139.0C199.2 143.2 193.8 149.2 190.0 156.0C186.2 162.8 183.3 172.7 182.0 180.0C180.7 187.3 181.3 193.3 182.0 200.0C182.7 206.7 184.0 213.7 186.0 220.0C188.0 226.3 191.7 232.2 194.0 238.0C196.3 243.8 197.7 249.3 200.0 255.0C202.3 260.7 200.0 267.8 208.0 272.0C216.0 276.2 234.7 280.0 248.0 280.0C261.3 280.0 280.0 276.2 288.0 272.0C296.0 267.8 293.7 260.8 296.0 255.0C298.3 249.2 299.7 243.5 302.0 237.0C304.3 230.5 308.0 222.2 310.0 216.0C312.0 209.8 313.3 206.0 314.0 200.0C314.7 194.0 315.3 187.3 314.0 180.0C312.7 172.7 309.8 162.8 306.0 156.0C302.2 149.2 296.8 143.2 291.0 139.0C285.2 134.8 278.2 132.3 271.0 130.5C263.8 128.7 255.7 128.0 248.0 128.0Z" fill="#9b5a26" stroke="#000" stroke-width="1.2"/>
<path d="M228.0 268.0C230.0 265.2 231.7 263.0 236.0 262.0C240.3 261.0 249.7 261.0 254.0 262.0C258.3 263.0 259.7 265.2 262.0 268.0C264.3 270.8 268.7 276.6 268.0 279.0C267.3 281.4 261.8 281.8 258.0 282.5C254.2 283.2 249.3 283.0 245.0 283.0C240.7 283.0 235.5 283.2 232.0 282.5C228.5 281.8 224.7 281.4 224.0 279.0C223.3 276.6 226.0 270.8 228.0 268.0Z" fill="#8a4718" stroke="#000" stroke-width="0.9"/>
<path d="M246.6 142.0C244.4 142.0 242.3 141.1 240.0 140.5C237.7 139.9 235.3 139.0 233.0 138.6C230.7 138.2 228.2 137.8 226.0 138.3C223.8 138.8 220.9 139.7 219.5 141.5C218.1 143.3 217.2 145.8 217.3 149.0C217.4 152.2 218.4 157.0 220.0 161.0C221.6 165.0 225.1 169.2 227.0 173.0C228.9 176.8 230.7 180.3 231.5 184.0C232.3 187.7 233.2 191.2 232.0 195.0C230.8 198.8 227.8 203.2 224.5 207.0C221.2 210.8 215.5 214.5 212.0 218.0C208.5 221.5 205.6 224.3 203.5 228.0C201.4 231.7 200.2 235.3 199.5 240.0C198.8 244.7 199.2 251.0 199.5 256.0C199.8 261.0 200.1 266.0 201.5 270.0C202.9 274.0 205.4 277.6 208.0 280.0C210.6 282.4 214.0 283.7 217.0 284.3C220.0 284.9 223.6 284.1 226.0 283.5C228.4 282.9 229.8 282.4 231.5 280.5C233.2 278.6 235.0 274.5 236.5 272.0C238.0 269.5 239.1 266.9 240.5 265.5C241.9 264.1 243.5 263.5 245.0 263.5C246.5 263.5 247.9 264.1 249.5 265.5C251.1 266.9 252.7 269.5 254.5 272.0C256.3 274.5 258.4 278.5 260.5 280.5C262.6 282.5 264.2 283.2 267.0 283.8C269.8 284.4 273.8 284.9 277.0 284.3C280.2 283.7 283.4 282.2 286.0 280.0C288.6 277.8 290.8 274.7 292.5 271.0C294.2 267.3 295.7 262.8 296.5 258.0C297.3 253.2 298.0 246.8 297.5 242.0C297.0 237.2 296.1 233.0 293.5 229.0C290.9 225.0 286.2 221.7 282.0 218.0C277.8 214.3 272.1 210.8 268.5 207.0C264.9 203.2 261.8 198.8 260.5 195.0C259.2 191.2 260.1 187.7 261.0 184.0C261.9 180.3 263.8 176.8 266.0 173.0C268.2 169.2 272.3 165.0 274.0 161.0C275.7 157.0 276.0 152.2 276.0 149.0C276.0 145.8 275.4 143.3 274.0 141.5C272.6 139.7 269.8 138.8 267.5 138.3C265.2 137.8 262.4 138.2 260.0 138.6C257.6 139.0 255.2 139.9 253.0 140.5C250.8 141.1 248.8 142.0 246.6 142.0Z" fill="#fbfbfb" stroke="#000" stroke-width="1.2"/>
<ellipse cx="209.6" cy="192.4" rx="13.2" ry="14.1" fill="#2f3032" stroke="#141414" stroke-width="1.2"/>
<ellipse cx="208.9" cy="188" rx="2.9" ry="4.3" fill="#fff"/>
<ellipse cx="285" cy="192.4" rx="13.2" ry="14.1" fill="#2f3032" stroke="#141414" stroke-width="1.2"/>
<ellipse cx="284.3" cy="188" rx="2.9" ry="4.3" fill="#fff"/>
<path d="M245.7 222.3C242.1 222.3 238.0 222.3 235.0 223.2C232.0 224.1 229.2 225.6 227.5 227.5C225.8 229.4 224.9 231.8 225.0 234.5C225.1 237.2 226.3 240.8 228.0 243.5C229.7 246.2 232.1 249.2 235.0 250.8C237.9 252.4 242.1 253.3 245.7 253.3C249.3 253.3 253.5 252.4 256.5 250.8C259.5 249.2 261.9 246.2 263.5 243.5C265.1 240.8 266.3 237.2 266.4 234.5C266.5 231.8 265.6 229.4 264.0 227.5C262.4 225.6 259.6 224.1 256.5 223.2C253.4 222.3 249.3 222.3 245.7 222.3Z" fill="#2f3032" stroke="#0c0c0c" stroke-width="0.8"/>
<path d="M244.8 262.0C242.7 262.0 240.0 262.6 238.5 263.5C237.0 264.4 236.1 266.1 236.0 267.5C235.9 268.9 236.5 270.8 238.0 272.0C239.5 273.2 242.6 274.5 244.8 274.5C247.1 274.5 250.1 273.2 251.5 272.0C252.9 270.8 253.4 268.9 253.3 267.5C253.2 266.1 252.4 264.4 251.0 263.5C249.6 262.6 246.9 262.0 244.8 262.0Z" fill="#f1929c" stroke="#4a2020" stroke-width="0.8"/>
</g>
<g transform="translate(742.6,27.06) scale(0.739)" stroke-linejoin="round" stroke-linecap="round">
<path d="M215.0 283.0C200.3 286.2 199.3 294.2 192.0 302.0C184.7 309.8 177.7 321.7 171.0 330.0C164.3 338.3 156.8 344.0 152.0 352.0C147.2 360.0 144.2 370.0 142.0 378.0C139.8 386.0 139.2 394.8 139.0 400.0C138.8 405.2 142.3 408.8 141.0 409.0C139.7 409.2 133.8 404.3 131.0 401.0C128.2 397.7 125.3 394.7 124.0 389.0C122.7 383.3 124.2 374.2 123.0 367.0C121.8 359.8 120.0 350.8 117.0 346.0C114.0 341.2 109.2 337.3 105.0 338.0C100.8 338.7 95.5 344.3 92.0 350.0C88.5 355.7 85.2 364.5 84.0 372.0C82.8 379.5 84.0 387.8 85.0 395.0C86.0 402.2 87.3 409.0 90.0 415.0C92.7 421.0 97.2 426.8 101.0 431.0C104.8 435.2 108.3 437.5 113.0 440.0C117.7 442.5 124.0 444.3 129.0 446.0C134.0 447.7 139.2 448.2 143.0 450.0C146.8 451.8 149.8 454.0 152.0 457.0C154.2 460.0 154.2 464.3 156.0 468.0C157.8 471.7 158.8 476.0 163.0 479.0C167.2 482.0 175.3 484.8 181.0 486.0C186.7 487.2 192.5 486.5 197.0 486.0C201.5 485.5 204.2 482.6 208.0 483.0C211.8 483.4 215.8 487.2 220.0 488.5C224.2 489.8 228.5 490.6 233.0 491.0C237.5 491.4 242.8 491.7 247.0 491.0C251.2 490.3 255.0 488.5 258.0 487.0C261.0 485.5 262.5 483.4 265.0 482.0C267.5 480.6 270.5 478.3 273.0 478.5C275.5 478.7 276.8 481.8 280.0 483.0C283.2 484.2 287.5 485.5 292.0 485.5C296.5 485.5 303.0 484.6 307.0 483.0C311.0 481.4 313.5 478.8 316.0 476.0C318.5 473.2 320.0 471.3 322.0 466.0C324.0 460.7 326.7 452.2 328.0 444.0C329.3 435.8 329.3 424.3 330.0 417.0C330.7 409.7 332.3 408.3 332.0 400.0C331.7 391.7 330.0 377.7 328.0 367.0C326.0 356.3 322.7 345.7 320.0 336.0C317.3 326.3 315.3 316.3 312.0 309.0C308.7 301.7 305.3 296.3 300.0 292.0C294.7 287.7 294.2 284.5 280.0 283.0C265.8 281.5 229.7 279.8 215.0 283.0Z" fill="#fcfcfc"/>
<g clip-path="url(#cb)">
<path d="M230.3 319.5a8 8 0 1 0 16 0a8 8 0 1 0 -16 0ZM235.6 307.8C241.5 306.5 243.0 301.7 241.9 296.7C240.8 292.2 236.5 290.8 230.9 287.3C227.3 292.9 224.1 296.0 225.1 300.5C226.3 305.6 229.7 309.2 235.6 307.8ZM247.1 311.3C251.2 315.7 256.1 314.7 259.9 311.2C263.2 308.0 262.3 303.6 262.4 297.0C255.8 296.7 251.5 295.4 248.1 298.6C244.3 302.1 243.0 306.9 247.1 311.3ZM249.8 323.0C248.0 328.8 251.3 332.5 256.3 334.0C260.7 335.3 264.1 332.3 269.9 329.1C266.8 323.3 265.7 318.9 261.3 317.5C256.4 316.0 251.5 317.3 249.8 323.0ZM241.0 331.2C235.1 332.5 233.6 337.3 234.7 342.3C235.8 346.8 240.1 348.2 245.7 351.7C249.3 346.1 252.5 343.0 251.5 338.5C250.3 333.4 246.9 329.8 241.0 331.2ZM229.5 327.7C225.4 323.3 220.5 324.3 216.7 327.8C213.4 331.0 214.3 335.4 214.2 342.0C220.8 342.3 225.1 343.6 228.5 340.4C232.3 336.9 233.6 332.1 229.5 327.7ZM226.8 316.0C228.6 310.2 225.3 306.5 220.3 305.0C215.9 303.7 212.5 306.7 206.7 309.9C209.8 315.7 210.9 320.1 215.3 321.5C220.2 323.0 225.1 321.7 226.8 316.0ZM215.0 406.6a8 8 0 1 0 16 0a8 8 0 1 0 -16 0ZM216.5 396.5C220.7 393.8 220.5 389.6 218.1 385.8C215.9 382.5 212.1 382.6 206.7 381.4C205.5 386.9 203.9 390.3 206.0 393.7C208.4 397.4 212.2 399.3 216.5 396.5ZM226.8 395.2C231.6 396.8 234.8 394.0 236.2 389.8C237.4 386.0 235.0 383.1 232.5 378.1C227.5 380.6 223.8 381.5 222.5 385.3C221.1 389.5 222.0 393.6 226.8 395.2ZM234.3 402.5C236.0 407.2 240.2 408.0 244.4 406.4C248.1 405.1 248.8 401.4 251.2 396.3C246.1 393.9 243.1 391.6 239.4 392.9C235.2 394.5 232.5 397.7 234.3 402.5ZM233.3 412.8C230.6 417.1 232.6 420.9 236.4 423.2C239.8 425.2 243.2 423.5 248.6 422.2C247.3 416.7 247.3 412.9 243.9 410.9C240.1 408.6 235.9 408.5 233.3 412.8ZM224.5 418.5C219.5 419.1 217.8 423.0 218.4 427.5C218.9 431.4 222.4 432.9 226.8 436.4C230.2 431.9 233.2 429.6 232.7 425.6C232.1 421.2 229.5 417.9 224.5 418.5ZM214.6 415.2C211.0 411.7 206.9 412.8 203.8 416.0C201.1 418.9 202.0 422.5 202.1 428.1C207.7 428.0 211.4 428.9 214.2 426.0C217.3 422.8 218.3 418.7 214.6 415.2ZM211.1 405.4C211.5 400.4 208.1 397.9 203.7 397.5C199.8 397.1 197.5 400.1 193.1 403.7C196.7 408.0 198.4 411.4 202.3 411.8C206.7 412.2 210.6 410.5 211.1 405.4ZM153.8 437.6a6.8 6.8 0 1 0 13.6 0a6.8 6.8 0 1 0 -13.6 0ZM157.2 427.7C161.8 426.1 162.8 422.6 161.7 419.2C160.6 416.2 157.1 415.7 152.5 414.0C149.9 418.2 147.4 420.8 148.4 423.8C149.6 427.2 152.5 429.3 157.2 427.7ZM167.5 429.7C171.2 432.9 174.7 432.1 177.1 429.3C179.1 426.9 177.8 423.7 177.0 418.7C172.0 418.6 168.6 417.8 166.5 420.2C164.1 422.9 163.8 426.5 167.5 429.7ZM170.9 439.6C170.0 444.4 172.5 447.0 176.0 447.7C179.1 448.3 181.3 445.5 185.1 442.4C182.7 438.0 181.8 434.6 178.6 434.0C175.1 433.3 171.8 434.8 170.9 439.6ZM164.0 447.5C159.4 449.1 158.4 452.6 159.5 456.0C160.6 459.0 164.1 459.5 168.7 461.2C171.3 457.0 173.8 454.4 172.8 451.4C171.6 448.0 168.7 445.9 164.0 447.5ZM153.7 445.5C150.0 442.3 146.5 443.1 144.1 445.9C142.1 448.3 143.4 451.5 144.2 456.5C149.2 456.6 152.6 457.4 154.7 455.0C157.1 452.3 157.4 448.7 153.7 445.5ZM150.3 435.6C151.2 430.8 148.7 428.2 145.2 427.5C142.1 426.9 139.9 429.7 136.1 432.8C138.5 437.2 139.4 440.6 142.6 441.2C146.1 441.9 149.4 440.4 150.3 435.6ZM293.5 439.0a7 7 0 1 0 14 0a7 7 0 1 0 -14 0ZM301.4 428.5C305.7 428.9 307.9 426.0 308.2 422.1C308.5 418.7 305.9 416.8 302.8 413.1C299.1 416.2 296.1 417.7 295.8 421.1C295.5 424.9 297.1 428.2 301.4 428.5ZM309.2 433.2C311.6 436.8 315.3 436.6 318.5 434.5C321.3 432.6 321.2 429.3 322.2 424.6C317.4 423.7 314.5 422.3 311.6 424.2C308.4 426.3 306.8 429.6 309.2 433.2ZM310.5 442.2C309.2 446.4 311.6 449.1 315.2 450.3C318.5 451.3 321.0 449.2 325.2 447.0C323.0 442.7 322.3 439.5 319.0 438.5C315.4 437.3 311.8 438.1 310.5 442.2ZM304.2 448.8C300.2 450.4 299.5 454.0 300.9 457.5C302.1 460.7 305.3 461.3 309.7 463.3C311.7 458.9 313.7 456.3 312.5 453.2C311.1 449.6 308.3 447.3 304.2 448.8ZM295.1 448.0C291.4 445.8 288.2 447.6 286.2 450.9C284.5 453.8 286.0 456.7 287.2 461.4C291.9 460.2 295.2 460.1 296.9 457.2C298.9 453.9 298.9 450.2 295.1 448.0ZM290.1 440.4C289.5 436.1 286.1 434.7 282.3 435.2C279.0 435.7 277.7 438.7 274.7 442.6C278.6 445.5 280.7 448.0 284.0 447.5C287.8 447.0 290.7 444.7 290.1 440.4ZM292.9 431.8C295.9 428.6 294.9 425.1 292.1 422.5C289.6 420.1 286.5 421.0 281.7 421.1C281.8 425.9 281.1 429.1 283.6 431.4C286.3 434.1 289.9 434.9 292.9 431.8ZM90.3 399.7C91.1 402.8 92.0 408.6 95.8 414.2C99.2 419.2 101.9 420.3 107.3 424.7C105.2 418.1 105.2 415.2 101.8 410.2C98.0 404.6 92.9 401.6 90.3 399.7ZM104.0 404.5C103.9 407.3 103.1 412.5 105.3 417.8C107.3 422.5 109.8 423.7 114.0 428.0C113.8 422.0 114.7 419.4 112.7 414.7C110.4 409.4 106.1 406.4 104.0 404.5ZM117.8 402.0C117.2 404.6 115.8 409.2 116.4 414.8C116.9 419.8 118.4 421.7 120.5 427.0C121.4 421.3 122.5 419.2 121.9 414.2C121.3 408.6 118.9 404.4 117.8 402.0ZM122.0 417.0C123.6 419.7 126.1 425.2 131.5 428.3C136.3 431.1 139.3 430.3 146.0 431.0C142.1 425.5 141.3 422.5 136.5 419.7C131.1 416.5 125.2 417.1 122.0 417.0ZM160.0 466.0C160.9 468.6 162.0 473.8 166.0 477.4C169.6 480.6 172.4 480.3 178.0 482.0C175.7 476.6 175.6 473.8 172.0 470.6C167.9 467.0 162.7 466.6 160.0 466.0ZM180.0 456.0C180.1 459.6 179.3 466.5 183.1 472.2C186.5 477.2 190.3 477.5 197.0 481.0C196.2 473.5 197.3 469.8 193.9 464.8C190.1 459.2 183.3 457.4 180.0 456.0ZM244.0 399.5C248.6 396.1 257.9 390.9 263.0 380.8C267.6 371.7 265.9 366.4 266.7 354.3C257.5 362.1 252.2 364.0 247.7 373.0C242.6 383.2 244.0 393.8 244.0 399.5ZM228.0 482.0C232.5 479.4 241.6 475.6 246.7 466.8C251.2 459.0 249.6 453.9 250.5 443.0C241.5 449.2 236.3 450.4 231.8 458.2C226.7 467.0 228.0 476.8 228.0 482.0ZM235.0 340.0C233.3 343.5 229.5 349.6 228.3 357.9C227.3 365.3 228.8 368.6 230.0 377.0C233.4 369.2 235.7 366.5 236.7 359.1C237.8 350.7 235.7 343.9 235.0 340.0ZM243.0 341.0C242.4 343.5 240.8 347.9 241.7 353.1C242.5 357.7 244.3 359.3 247.0 364.0C248.0 358.6 249.1 356.5 248.3 351.9C247.4 346.7 244.4 343.1 243.0 341.0ZM284.0 470.0C284.9 465.5 287.2 457.6 286.5 447.7C285.9 438.9 283.9 435.5 281.0 426.0C279.5 435.8 277.9 439.5 278.5 448.3C279.2 458.2 282.5 465.7 284.0 470.0ZM318.0 428.0C317.5 431.1 316.1 436.6 317.0 443.4C317.8 449.4 319.5 451.6 322.0 458.0C322.8 451.2 323.8 448.6 323.0 442.6C322.1 435.9 319.3 430.9 318.0 428.0ZM290.0 402.0C289.9 403.8 289.3 407.2 291.1 409.9C292.7 412.3 294.6 412.4 298.0 414.0C297.8 410.3 298.5 408.5 296.9 406.1C295.1 403.4 291.7 402.6 290.0 402.0ZM296.0 470.0C295.9 471.8 295.3 475.2 297.1 477.9C298.7 480.3 300.6 480.4 304.0 482.0C303.8 478.3 304.5 476.5 302.9 474.1C301.1 471.4 297.7 470.6 296.0 470.0ZM315.0 470.0C313.4 470.5 310.2 471.1 308.2 473.6C306.4 475.8 306.7 477.5 306.0 481.0C309.3 479.6 311.0 479.6 312.8 477.4C314.8 474.9 314.8 471.7 315.0 470.0ZM222.0 352.0C219.8 353.6 215.2 356.2 212.9 361.1C210.9 365.5 211.9 368.1 212.0 374.0C216.5 370.2 219.1 369.3 221.1 364.9C223.3 359.9 222.2 354.8 222.0 352.0ZM213.0 378.0C211.0 379.0 206.9 380.3 204.6 383.9C202.6 387.1 203.3 389.3 203.0 394.0C207.1 391.6 209.4 391.3 211.4 388.1C213.6 384.5 213.0 380.2 213.0 378.0ZM179.0 408.0C179.5 410.1 180.0 414.2 182.9 417.4C185.5 420.2 187.7 420.2 192.0 422.0C190.6 417.6 190.7 415.4 188.1 412.6C185.1 409.5 181.1 408.7 179.0 408.0ZM253.0 392.0C253.2 393.7 253.1 397.1 255.1 399.8C256.9 402.2 258.7 402.4 262.0 404.0C261.3 400.4 261.7 398.6 259.9 396.2C257.9 393.5 254.6 392.7 253.0 392.0ZM246.0 446.0C245.6 449.0 244.4 454.2 245.5 460.5C246.5 466.1 248.3 468.1 251.0 474.0C251.5 467.5 252.5 465.1 251.5 459.5C250.3 453.2 247.4 448.6 246.0 446.0ZM192.0 432.0C191.5 434.2 190.2 438.1 191.1 442.6C191.9 446.6 193.5 447.9 196.0 452.0C196.7 447.3 197.7 445.4 196.9 441.4C196.0 436.9 193.3 433.8 192.0 432.0ZM276.0 412.0C277.1 410.5 279.5 408.0 280.0 404.4C280.4 401.2 279.2 399.7 278.0 396.0C275.9 399.3 274.4 400.4 274.0 403.6C273.6 407.2 275.3 410.3 276.0 412.0ZM266.5 408.0C261.2 408.0 259.0 419.9 259.0 434.4C259.0 459.0 262.4 476.6 266.5 496.0C270.6 476.6 274.0 459.0 274.0 434.4C274.0 419.9 271.8 408.0 266.5 408.0ZM206.0 421.0C202.2 420.9 200.2 430.6 199.9 442.4C199.2 462.6 201.3 477.0 203.8 493.0C207.3 477.2 210.2 462.9 210.8 442.8C211.2 430.9 209.8 421.1 206.0 421.0Z" fill="none" stroke="#7a7a7a" stroke-width="7.2"/><path d="M230.3 319.5a8 8 0 1 0 16 0a8 8 0 1 0 -16 0ZM235.6 307.8C241.5 306.5 243.0 301.7 241.9 296.7C240.8 292.2 236.5 290.8 230.9 287.3C227.3 292.9 224.1 296.0 225.1 300.5C226.3 305.6 229.7 309.2 235.6 307.8ZM247.1 311.3C251.2 315.7 256.1 314.7 259.9 311.2C263.2 308.0 262.3 303.6 262.4 297.0C255.8 296.7 251.5 295.4 248.1 298.6C244.3 302.1 243.0 306.9 247.1 311.3ZM249.8 323.0C248.0 328.8 251.3 332.5 256.3 334.0C260.7 335.3 264.1 332.3 269.9 329.1C266.8 323.3 265.7 318.9 261.3 317.5C256.4 316.0 251.5 317.3 249.8 323.0ZM241.0 331.2C235.1 332.5 233.6 337.3 234.7 342.3C235.8 346.8 240.1 348.2 245.7 351.7C249.3 346.1 252.5 343.0 251.5 338.5C250.3 333.4 246.9 329.8 241.0 331.2ZM229.5 327.7C225.4 323.3 220.5 324.3 216.7 327.8C213.4 331.0 214.3 335.4 214.2 342.0C220.8 342.3 225.1 343.6 228.5 340.4C232.3 336.9 233.6 332.1 229.5 327.7ZM226.8 316.0C228.6 310.2 225.3 306.5 220.3 305.0C215.9 303.7 212.5 306.7 206.7 309.9C209.8 315.7 210.9 320.1 215.3 321.5C220.2 323.0 225.1 321.7 226.8 316.0ZM215.0 406.6a8 8 0 1 0 16 0a8 8 0 1 0 -16 0ZM216.5 396.5C220.7 393.8 220.5 389.6 218.1 385.8C215.9 382.5 212.1 382.6 206.7 381.4C205.5 386.9 203.9 390.3 206.0 393.7C208.4 397.4 212.2 399.3 216.5 396.5ZM226.8 395.2C231.6 396.8 234.8 394.0 236.2 389.8C237.4 386.0 235.0 383.1 232.5 378.1C227.5 380.6 223.8 381.5 222.5 385.3C221.1 389.5 222.0 393.6 226.8 395.2ZM234.3 402.5C236.0 407.2 240.2 408.0 244.4 406.4C248.1 405.1 248.8 401.4 251.2 396.3C246.1 393.9 243.1 391.6 239.4 392.9C235.2 394.5 232.5 397.7 234.3 402.5ZM233.3 412.8C230.6 417.1 232.6 420.9 236.4 423.2C239.8 425.2 243.2 423.5 248.6 422.2C247.3 416.7 247.3 412.9 243.9 410.9C240.1 408.6 235.9 408.5 233.3 412.8ZM224.5 418.5C219.5 419.1 217.8 423.0 218.4 427.5C218.9 431.4 222.4 432.9 226.8 436.4C230.2 431.9 233.2 429.6 232.7 425.6C232.1 421.2 229.5 417.9 224.5 418.5ZM214.6 415.2C211.0 411.7 206.9 412.8 203.8 416.0C201.1 418.9 202.0 422.5 202.1 428.1C207.7 428.0 211.4 428.9 214.2 426.0C217.3 422.8 218.3 418.7 214.6 415.2ZM211.1 405.4C211.5 400.4 208.1 397.9 203.7 397.5C199.8 397.1 197.5 400.1 193.1 403.7C196.7 408.0 198.4 411.4 202.3 411.8C206.7 412.2 210.6 410.5 211.1 405.4ZM153.8 437.6a6.8 6.8 0 1 0 13.6 0a6.8 6.8 0 1 0 -13.6 0ZM157.2 427.7C161.8 426.1 162.8 422.6 161.7 419.2C160.6 416.2 157.1 415.7 152.5 414.0C149.9 418.2 147.4 420.8 148.4 423.8C149.6 427.2 152.5 429.3 157.2 427.7ZM167.5 429.7C171.2 432.9 174.7 432.1 177.1 429.3C179.1 426.9 177.8 423.7 177.0 418.7C172.0 418.6 168.6 417.8 166.5 420.2C164.1 422.9 163.8 426.5 167.5 429.7ZM170.9 439.6C170.0 444.4 172.5 447.0 176.0 447.7C179.1 448.3 181.3 445.5 185.1 442.4C182.7 438.0 181.8 434.6 178.6 434.0C175.1 433.3 171.8 434.8 170.9 439.6ZM164.0 447.5C159.4 449.1 158.4 452.6 159.5 456.0C160.6 459.0 164.1 459.5 168.7 461.2C171.3 457.0 173.8 454.4 172.8 451.4C171.6 448.0 168.7 445.9 164.0 447.5ZM153.7 445.5C150.0 442.3 146.5 443.1 144.1 445.9C142.1 448.3 143.4 451.5 144.2 456.5C149.2 456.6 152.6 457.4 154.7 455.0C157.1 452.3 157.4 448.7 153.7 445.5ZM150.3 435.6C151.2 430.8 148.7 428.2 145.2 427.5C142.1 426.9 139.9 429.7 136.1 432.8C138.5 437.2 139.4 440.6 142.6 441.2C146.1 441.9 149.4 440.4 150.3 435.6ZM293.5 439.0a7 7 0 1 0 14 0a7 7 0 1 0 -14 0ZM301.4 428.5C305.7 428.9 307.9 426.0 308.2 422.1C308.5 418.7 305.9 416.8 302.8 413.1C299.1 416.2 296.1 417.7 295.8 421.1C295.5 424.9 297.1 428.2 301.4 428.5ZM309.2 433.2C311.6 436.8 315.3 436.6 318.5 434.5C321.3 432.6 321.2 429.3 322.2 424.6C317.4 423.7 314.5 422.3 311.6 424.2C308.4 426.3 306.8 429.6 309.2 433.2ZM310.5 442.2C309.2 446.4 311.6 449.1 315.2 450.3C318.5 451.3 321.0 449.2 325.2 447.0C323.0 442.7 322.3 439.5 319.0 438.5C315.4 437.3 311.8 438.1 310.5 442.2ZM304.2 448.8C300.2 450.4 299.5 454.0 300.9 457.5C302.1 460.7 305.3 461.3 309.7 463.3C311.7 458.9 313.7 456.3 312.5 453.2C311.1 449.6 308.3 447.3 304.2 448.8ZM295.1 448.0C291.4 445.8 288.2 447.6 286.2 450.9C284.5 453.8 286.0 456.7 287.2 461.4C291.9 460.2 295.2 460.1 296.9 457.2C298.9 453.9 298.9 450.2 295.1 448.0ZM290.1 440.4C289.5 436.1 286.1 434.7 282.3 435.2C279.0 435.7 277.7 438.7 274.7 442.6C278.6 445.5 280.7 448.0 284.0 447.5C287.8 447.0 290.7 444.7 290.1 440.4ZM292.9 431.8C295.9 428.6 294.9 425.1 292.1 422.5C289.6 420.1 286.5 421.0 281.7 421.1C281.8 425.9 281.1 429.1 283.6 431.4C286.3 434.1 289.9 434.9 292.9 431.8ZM90.3 399.7C91.1 402.8 92.0 408.6 95.8 414.2C99.2 419.2 101.9 420.3 107.3 424.7C105.2 418.1 105.2 415.2 101.8 410.2C98.0 404.6 92.9 401.6 90.3 399.7ZM104.0 404.5C103.9 407.3 103.1 412.5 105.3 417.8C107.3 422.5 109.8 423.7 114.0 428.0C113.8 422.0 114.7 419.4 112.7 414.7C110.4 409.4 106.1 406.4 104.0 404.5ZM117.8 402.0C117.2 404.6 115.8 409.2 116.4 414.8C116.9 419.8 118.4 421.7 120.5 427.0C121.4 421.3 122.5 419.2 121.9 414.2C121.3 408.6 118.9 404.4 117.8 402.0ZM122.0 417.0C123.6 419.7 126.1 425.2 131.5 428.3C136.3 431.1 139.3 430.3 146.0 431.0C142.1 425.5 141.3 422.5 136.5 419.7C131.1 416.5 125.2 417.1 122.0 417.0ZM160.0 466.0C160.9 468.6 162.0 473.8 166.0 477.4C169.6 480.6 172.4 480.3 178.0 482.0C175.7 476.6 175.6 473.8 172.0 470.6C167.9 467.0 162.7 466.6 160.0 466.0ZM180.0 456.0C180.1 459.6 179.3 466.5 183.1 472.2C186.5 477.2 190.3 477.5 197.0 481.0C196.2 473.5 197.3 469.8 193.9 464.8C190.1 459.2 183.3 457.4 180.0 456.0ZM244.0 399.5C248.6 396.1 257.9 390.9 263.0 380.8C267.6 371.7 265.9 366.4 266.7 354.3C257.5 362.1 252.2 364.0 247.7 373.0C242.6 383.2 244.0 393.8 244.0 399.5ZM228.0 482.0C232.5 479.4 241.6 475.6 246.7 466.8C251.2 459.0 249.6 453.9 250.5 443.0C241.5 449.2 236.3 450.4 231.8 458.2C226.7 467.0 228.0 476.8 228.0 482.0ZM235.0 340.0C233.3 343.5 229.5 349.6 228.3 357.9C227.3 365.3 228.8 368.6 230.0 377.0C233.4 369.2 235.7 366.5 236.7 359.1C237.8 350.7 235.7 343.9 235.0 340.0ZM243.0 341.0C242.4 343.5 240.8 347.9 241.7 353.1C242.5 357.7 244.3 359.3 247.0 364.0C248.0 358.6 249.1 356.5 248.3 351.9C247.4 346.7 244.4 343.1 243.0 341.0ZM284.0 470.0C284.9 465.5 287.2 457.6 286.5 447.7C285.9 438.9 283.9 435.5 281.0 426.0C279.5 435.8 277.9 439.5 278.5 448.3C279.2 458.2 282.5 465.7 284.0 470.0ZM318.0 428.0C317.5 431.1 316.1 436.6 317.0 443.4C317.8 449.4 319.5 451.6 322.0 458.0C322.8 451.2 323.8 448.6 323.0 442.6C322.1 435.9 319.3 430.9 318.0 428.0ZM290.0 402.0C289.9 403.8 289.3 407.2 291.1 409.9C292.7 412.3 294.6 412.4 298.0 414.0C297.8 410.3 298.5 408.5 296.9 406.1C295.1 403.4 291.7 402.6 290.0 402.0ZM296.0 470.0C295.9 471.8 295.3 475.2 297.1 477.9C298.7 480.3 300.6 480.4 304.0 482.0C303.8 478.3 304.5 476.5 302.9 474.1C301.1 471.4 297.7 470.6 296.0 470.0ZM315.0 470.0C313.4 470.5 310.2 471.1 308.2 473.6C306.4 475.8 306.7 477.5 306.0 481.0C309.3 479.6 311.0 479.6 312.8 477.4C314.8 474.9 314.8 471.7 315.0 470.0ZM222.0 352.0C219.8 353.6 215.2 356.2 212.9 361.1C210.9 365.5 211.9 368.1 212.0 374.0C216.5 370.2 219.1 369.3 221.1 364.9C223.3 359.9 222.2 354.8 222.0 352.0ZM213.0 378.0C211.0 379.0 206.9 380.3 204.6 383.9C202.6 387.1 203.3 389.3 203.0 394.0C207.1 391.6 209.4 391.3 211.4 388.1C213.6 384.5 213.0 380.2 213.0 378.0ZM179.0 408.0C179.5 410.1 180.0 414.2 182.9 417.4C185.5 420.2 187.7 420.2 192.0 422.0C190.6 417.6 190.7 415.4 188.1 412.6C185.1 409.5 181.1 408.7 179.0 408.0ZM253.0 392.0C253.2 393.7 253.1 397.1 255.1 399.8C256.9 402.2 258.7 402.4 262.0 404.0C261.3 400.4 261.7 398.6 259.9 396.2C257.9 393.5 254.6 392.7 253.0 392.0ZM246.0 446.0C245.6 449.0 244.4 454.2 245.5 460.5C246.5 466.1 248.3 468.1 251.0 474.0C251.5 467.5 252.5 465.1 251.5 459.5C250.3 453.2 247.4 448.6 246.0 446.0ZM192.0 432.0C191.5 434.2 190.2 438.1 191.1 442.6C191.9 446.6 193.5 447.9 196.0 452.0C196.7 447.3 197.7 445.4 196.9 441.4C196.0 436.9 193.3 433.8 192.0 432.0ZM276.0 412.0C277.1 410.5 279.5 408.0 280.0 404.4C280.4 401.2 279.2 399.7 278.0 396.0C275.9 399.3 274.4 400.4 274.0 403.6C273.6 407.2 275.3 410.3 276.0 412.0ZM266.5 408.0C261.2 408.0 259.0 419.9 259.0 434.4C259.0 459.0 262.4 476.6 266.5 496.0C270.6 476.6 274.0 459.0 274.0 434.4C274.0 419.9 271.8 408.0 266.5 408.0ZM206.0 421.0C202.2 420.9 200.2 430.6 199.9 442.4C199.2 462.6 201.3 477.0 203.8 493.0C207.3 477.2 210.2 462.9 210.8 442.8C211.2 430.9 209.8 421.1 206.0 421.0Z" fill="none" stroke="#dcdcdc" stroke-width="6"/>
<path d="M230.3 319.5a8 8 0 1 0 16 0a8 8 0 1 0 -16 0ZM235.6 307.8C241.5 306.5 243.0 301.7 241.9 296.7C240.8 292.2 236.5 290.8 230.9 287.3C227.3 292.9 224.1 296.0 225.1 300.5C226.3 305.6 229.7 309.2 235.6 307.8ZM247.1 311.3C251.2 315.7 256.1 314.7 259.9 311.2C263.2 308.0 262.3 303.6 262.4 297.0C255.8 296.7 251.5 295.4 248.1 298.6C244.3 302.1 243.0 306.9 247.1 311.3ZM249.8 323.0C248.0 328.8 251.3 332.5 256.3 334.0C260.7 335.3 264.1 332.3 269.9 329.1C266.8 323.3 265.7 318.9 261.3 317.5C256.4 316.0 251.5 317.3 249.8 323.0ZM241.0 331.2C235.1 332.5 233.6 337.3 234.7 342.3C235.8 346.8 240.1 348.2 245.7 351.7C249.3 346.1 252.5 343.0 251.5 338.5C250.3 333.4 246.9 329.8 241.0 331.2ZM229.5 327.7C225.4 323.3 220.5 324.3 216.7 327.8C213.4 331.0 214.3 335.4 214.2 342.0C220.8 342.3 225.1 343.6 228.5 340.4C232.3 336.9 233.6 332.1 229.5 327.7ZM226.8 316.0C228.6 310.2 225.3 306.5 220.3 305.0C215.9 303.7 212.5 306.7 206.7 309.9C209.8 315.7 210.9 320.1 215.3 321.5C220.2 323.0 225.1 321.7 226.8 316.0ZM215.0 406.6a8 8 0 1 0 16 0a8 8 0 1 0 -16 0ZM216.5 396.5C220.7 393.8 220.5 389.6 218.1 385.8C215.9 382.5 212.1 382.6 206.7 381.4C205.5 386.9 203.9 390.3 206.0 393.7C208.4 397.4 212.2 399.3 216.5 396.5ZM226.8 395.2C231.6 396.8 234.8 394.0 236.2 389.8C237.4 386.0 235.0 383.1 232.5 378.1C227.5 380.6 223.8 381.5 222.5 385.3C221.1 389.5 222.0 393.6 226.8 395.2ZM234.3 402.5C236.0 407.2 240.2 408.0 244.4 406.4C248.1 405.1 248.8 401.4 251.2 396.3C246.1 393.9 243.1 391.6 239.4 392.9C235.2 394.5 232.5 397.7 234.3 402.5ZM233.3 412.8C230.6 417.1 232.6 420.9 236.4 423.2C239.8 425.2 243.2 423.5 248.6 422.2C247.3 416.7 247.3 412.9 243.9 410.9C240.1 408.6 235.9 408.5 233.3 412.8ZM224.5 418.5C219.5 419.1 217.8 423.0 218.4 427.5C218.9 431.4 222.4 432.9 226.8 436.4C230.2 431.9 233.2 429.6 232.7 425.6C232.1 421.2 229.5 417.9 224.5 418.5ZM214.6 415.2C211.0 411.7 206.9 412.8 203.8 416.0C201.1 418.9 202.0 422.5 202.1 428.1C207.7 428.0 211.4 428.9 214.2 426.0C217.3 422.8 218.3 418.7 214.6 415.2ZM211.1 405.4C211.5 400.4 208.1 397.9 203.7 397.5C199.8 397.1 197.5 400.1 193.1 403.7C196.7 408.0 198.4 411.4 202.3 411.8C206.7 412.2 210.6 410.5 211.1 405.4ZM153.8 437.6a6.8 6.8 0 1 0 13.6 0a6.8 6.8 0 1 0 -13.6 0ZM157.2 427.7C161.8 426.1 162.8 422.6 161.7 419.2C160.6 416.2 157.1 415.7 152.5 414.0C149.9 418.2 147.4 420.8 148.4 423.8C149.6 427.2 152.5 429.3 157.2 427.7ZM167.5 429.7C171.2 432.9 174.7 432.1 177.1 429.3C179.1 426.9 177.8 423.7 177.0 418.7C172.0 418.6 168.6 417.8 166.5 420.2C164.1 422.9 163.8 426.5 167.5 429.7ZM170.9 439.6C170.0 444.4 172.5 447.0 176.0 447.7C179.1 448.3 181.3 445.5 185.1 442.4C182.7 438.0 181.8 434.6 178.6 434.0C175.1 433.3 171.8 434.8 170.9 439.6ZM164.0 447.5C159.4 449.1 158.4 452.6 159.5 456.0C160.6 459.0 164.1 459.5 168.7 461.2C171.3 457.0 173.8 454.4 172.8 451.4C171.6 448.0 168.7 445.9 164.0 447.5ZM153.7 445.5C150.0 442.3 146.5 443.1 144.1 445.9C142.1 448.3 143.4 451.5 144.2 456.5C149.2 456.6 152.6 457.4 154.7 455.0C157.1 452.3 157.4 448.7 153.7 445.5ZM150.3 435.6C151.2 430.8 148.7 428.2 145.2 427.5C142.1 426.9 139.9 429.7 136.1 432.8C138.5 437.2 139.4 440.6 142.6 441.2C146.1 441.9 149.4 440.4 150.3 435.6ZM293.5 439.0a7 7 0 1 0 14 0a7 7 0 1 0 -14 0ZM301.4 428.5C305.7 428.9 307.9 426.0 308.2 422.1C308.5 418.7 305.9 416.8 302.8 413.1C299.1 416.2 296.1 417.7 295.8 421.1C295.5 424.9 297.1 428.2 301.4 428.5ZM309.2 433.2C311.6 436.8 315.3 436.6 318.5 434.5C321.3 432.6 321.2 429.3 322.2 424.6C317.4 423.7 314.5 422.3 311.6 424.2C308.4 426.3 306.8 429.6 309.2 433.2ZM310.5 442.2C309.2 446.4 311.6 449.1 315.2 450.3C318.5 451.3 321.0 449.2 325.2 447.0C323.0 442.7 322.3 439.5 319.0 438.5C315.4 437.3 311.8 438.1 310.5 442.2ZM304.2 448.8C300.2 450.4 299.5 454.0 300.9 457.5C302.1 460.7 305.3 461.3 309.7 463.3C311.7 458.9 313.7 456.3 312.5 453.2C311.1 449.6 308.3 447.3 304.2 448.8ZM295.1 448.0C291.4 445.8 288.2 447.6 286.2 450.9C284.5 453.8 286.0 456.7 287.2 461.4C291.9 460.2 295.2 460.1 296.9 457.2C298.9 453.9 298.9 450.2 295.1 448.0ZM290.1 440.4C289.5 436.1 286.1 434.7 282.3 435.2C279.0 435.7 277.7 438.7 274.7 442.6C278.6 445.5 280.7 448.0 284.0 447.5C287.8 447.0 290.7 444.7 290.1 440.4ZM292.9 431.8C295.9 428.6 294.9 425.1 292.1 422.5C289.6 420.1 286.5 421.0 281.7 421.1C281.8 425.9 281.1 429.1 283.6 431.4C286.3 434.1 289.9 434.9 292.9 431.8ZM90.3 399.7C91.1 402.8 92.0 408.6 95.8 414.2C99.2 419.2 101.9 420.3 107.3 424.7C105.2 418.1 105.2 415.2 101.8 410.2C98.0 404.6 92.9 401.6 90.3 399.7ZM104.0 404.5C103.9 407.3 103.1 412.5 105.3 417.8C107.3 422.5 109.8 423.7 114.0 428.0C113.8 422.0 114.7 419.4 112.7 414.7C110.4 409.4 106.1 406.4 104.0 404.5ZM117.8 402.0C117.2 404.6 115.8 409.2 116.4 414.8C116.9 419.8 118.4 421.7 120.5 427.0C121.4 421.3 122.5 419.2 121.9 414.2C121.3 408.6 118.9 404.4 117.8 402.0ZM122.0 417.0C123.6 419.7 126.1 425.2 131.5 428.3C136.3 431.1 139.3 430.3 146.0 431.0C142.1 425.5 141.3 422.5 136.5 419.7C131.1 416.5 125.2 417.1 122.0 417.0ZM160.0 466.0C160.9 468.6 162.0 473.8 166.0 477.4C169.6 480.6 172.4 480.3 178.0 482.0C175.7 476.6 175.6 473.8 172.0 470.6C167.9 467.0 162.7 466.6 160.0 466.0ZM180.0 456.0C180.1 459.6 179.3 466.5 183.1 472.2C186.5 477.2 190.3 477.5 197.0 481.0C196.2 473.5 197.3 469.8 193.9 464.8C190.1 459.2 183.3 457.4 180.0 456.0ZM244.0 399.5C248.6 396.1 257.9 390.9 263.0 380.8C267.6 371.7 265.9 366.4 266.7 354.3C257.5 362.1 252.2 364.0 247.7 373.0C242.6 383.2 244.0 393.8 244.0 399.5ZM228.0 482.0C232.5 479.4 241.6 475.6 246.7 466.8C251.2 459.0 249.6 453.9 250.5 443.0C241.5 449.2 236.3 450.4 231.8 458.2C226.7 467.0 228.0 476.8 228.0 482.0ZM235.0 340.0C233.3 343.5 229.5 349.6 228.3 357.9C227.3 365.3 228.8 368.6 230.0 377.0C233.4 369.2 235.7 366.5 236.7 359.1C237.8 350.7 235.7 343.9 235.0 340.0ZM243.0 341.0C242.4 343.5 240.8 347.9 241.7 353.1C242.5 357.7 244.3 359.3 247.0 364.0C248.0 358.6 249.1 356.5 248.3 351.9C247.4 346.7 244.4 343.1 243.0 341.0ZM284.0 470.0C284.9 465.5 287.2 457.6 286.5 447.7C285.9 438.9 283.9 435.5 281.0 426.0C279.5 435.8 277.9 439.5 278.5 448.3C279.2 458.2 282.5 465.7 284.0 470.0ZM318.0 428.0C317.5 431.1 316.1 436.6 317.0 443.4C317.8 449.4 319.5 451.6 322.0 458.0C322.8 451.2 323.8 448.6 323.0 442.6C322.1 435.9 319.3 430.9 318.0 428.0ZM290.0 402.0C289.9 403.8 289.3 407.2 291.1 409.9C292.7 412.3 294.6 412.4 298.0 414.0C297.8 410.3 298.5 408.5 296.9 406.1C295.1 403.4 291.7 402.6 290.0 402.0ZM296.0 470.0C295.9 471.8 295.3 475.2 297.1 477.9C298.7 480.3 300.6 480.4 304.0 482.0C303.8 478.3 304.5 476.5 302.9 474.1C301.1 471.4 297.7 470.6 296.0 470.0ZM315.0 470.0C313.4 470.5 310.2 471.1 308.2 473.6C306.4 475.8 306.7 477.5 306.0 481.0C309.3 479.6 311.0 479.6 312.8 477.4C314.8 474.9 314.8 471.7 315.0 470.0ZM222.0 352.0C219.8 353.6 215.2 356.2 212.9 361.1C210.9 365.5 211.9 368.1 212.0 374.0C216.5 370.2 219.1 369.3 221.1 364.9C223.3 359.9 222.2 354.8 222.0 352.0ZM213.0 378.0C211.0 379.0 206.9 380.3 204.6 383.9C202.6 387.1 203.3 389.3 203.0 394.0C207.1 391.6 209.4 391.3 211.4 388.1C213.6 384.5 213.0 380.2 213.0 378.0ZM179.0 408.0C179.5 410.1 180.0 414.2 182.9 417.4C185.5 420.2 187.7 420.2 192.0 422.0C190.6 417.6 190.7 415.4 188.1 412.6C185.1 409.5 181.1 408.7 179.0 408.0ZM253.0 392.0C253.2 393.7 253.1 397.1 255.1 399.8C256.9 402.2 258.7 402.4 262.0 404.0C261.3 400.4 261.7 398.6 259.9 396.2C257.9 393.5 254.6 392.7 253.0 392.0ZM246.0 446.0C245.6 449.0 244.4 454.2 245.5 460.5C246.5 466.1 248.3 468.1 251.0 474.0C251.5 467.5 252.5 465.1 251.5 459.5C250.3 453.2 247.4 448.6 246.0 446.0ZM192.0 432.0C191.5 434.2 190.2 438.1 191.1 442.6C191.9 446.6 193.5 447.9 196.0 452.0C196.7 447.3 197.7 445.4 196.9 441.4C196.0 436.9 193.3 433.8 192.0 432.0ZM276.0 412.0C277.1 410.5 279.5 408.0 280.0 404.4C280.4 401.2 279.2 399.7 278.0 396.0C275.9 399.3 274.4 400.4 274.0 403.6C273.6 407.2 275.3 410.3 276.0 412.0ZM266.5 408.0C261.2 408.0 259.0 419.9 259.0 434.4C259.0 459.0 262.4 476.6 266.5 496.0C270.6 476.6 274.0 459.0 274.0 434.4C274.0 419.9 271.8 408.0 266.5 408.0ZM206.0 421.0C202.2 420.9 200.2 430.6 199.9 442.4C199.2 462.6 201.3 477.0 203.8 493.0C207.3 477.2 210.2 462.9 210.8 442.8C211.2 430.9 209.8 421.1 206.0 421.0Z" fill="#fcfcfc" stroke="#7a7a7a" stroke-width="0.7"/>
<path d="M235.8 308.8L233.6 299.2M246.3 312.0L253.5 305.3M248.8 322.7L258.2 325.6M240.8 330.2L243.0 339.8M230.3 327.0L223.1 333.7M227.8 316.3L218.4 313.4M217.0 397.4L212.3 390.2M226.5 396.2L229.2 388.0M233.3 402.8L241.4 399.9M232.4 412.3L239.7 416.8M224.4 417.5L225.5 426.0M215.3 414.5L209.4 420.6M212.1 405.5L203.5 404.7M157.5 428.6L155.2 421.9M166.8 430.4L171.5 425.1M169.9 439.4L176.9 440.8M163.7 446.6L166.0 453.3M154.4 444.8L149.7 450.1M151.3 435.8L144.3 434.4M301.3 429.5L302.0 422.1M308.4 433.7L314.7 429.6M309.5 441.9L316.7 444.2M303.9 447.9L306.5 454.9M295.6 447.2L291.8 453.6M291.1 440.3L283.6 441.3M293.6 432.5L288.2 427.3M246 396L264 360M251 386l-5-9M252 384l9 1M257 375l-5-8M258 373l8 1M231 478L248 448M236 469l-4-8M237 467l9 2M242 459l-4-7M243 457l8 1M181 458L195 478" fill="none" stroke="#7a7a7a" stroke-width="4"/><path d="M235.8 308.8L233.6 299.2M246.3 312.0L253.5 305.3M248.8 322.7L258.2 325.6M240.8 330.2L243.0 339.8M230.3 327.0L223.1 333.7M227.8 316.3L218.4 313.4M217.0 397.4L212.3 390.2M226.5 396.2L229.2 388.0M233.3 402.8L241.4 399.9M232.4 412.3L239.7 416.8M224.4 417.5L225.5 426.0M215.3 414.5L209.4 420.6M212.1 405.5L203.5 404.7M157.5 428.6L155.2 421.9M166.8 430.4L171.5 425.1M169.9 439.4L176.9 440.8M163.7 446.6L166.0 453.3M154.4 444.8L149.7 450.1M151.3 435.8L144.3 434.4M301.3 429.5L302.0 422.1M308.4 433.7L314.7 429.6M309.5 441.9L316.7 444.2M303.9 447.9L306.5 454.9M295.6 447.2L291.8 453.6M291.1 440.3L283.6 441.3M293.6 432.5L288.2 427.3M246 396L264 360M251 386l-5-9M252 384l9 1M257 375l-5-8M258 373l8 1M231 478L248 448M236 469l-4-8M237 467l9 2M242 459l-4-7M243 457l8 1M181 458L195 478" fill="none" stroke="#dcdcdc" stroke-width="2.8"/>
<path d="M215.0 283.0C200.3 286.2 199.3 294.2 192.0 302.0C184.7 309.8 177.7 321.7 171.0 330.0C164.3 338.3 156.8 344.0 152.0 352.0C147.2 360.0 144.2 370.0 142.0 378.0C139.8 386.0 139.2 394.8 139.0 400.0C138.8 405.2 142.3 408.8 141.0 409.0C139.7 409.2 133.8 404.3 131.0 401.0C128.2 397.7 125.3 394.7 124.0 389.0C122.7 383.3 124.2 374.2 123.0 367.0C121.8 359.8 120.0 350.8 117.0 346.0C114.0 341.2 109.2 337.3 105.0 338.0C100.8 338.7 95.5 344.3 92.0 350.0C88.5 355.7 85.2 364.5 84.0 372.0C82.8 379.5 84.0 387.8 85.0 395.0C86.0 402.2 87.3 409.0 90.0 415.0C92.7 421.0 97.2 426.8 101.0 431.0C104.8 435.2 108.3 437.5 113.0 440.0C117.7 442.5 124.0 444.3 129.0 446.0C134.0 447.7 139.2 448.2 143.0 450.0C146.8 451.8 149.8 454.0 152.0 457.0C154.2 460.0 154.2 464.3 156.0 468.0C157.8 471.7 158.8 476.0 163.0 479.0C167.2 482.0 175.3 484.8 181.0 486.0C186.7 487.2 192.5 486.5 197.0 486.0C201.5 485.5 204.2 482.6 208.0 483.0C211.8 483.4 215.8 487.2 220.0 488.5C224.2 489.8 228.5 490.6 233.0 491.0C237.5 491.4 242.8 491.7 247.0 491.0C251.2 490.3 255.0 488.5 258.0 487.0C261.0 485.5 262.5 483.4 265.0 482.0C267.5 480.6 270.5 478.3 273.0 478.5C275.5 478.7 276.8 481.8 280.0 483.0C283.2 484.2 287.5 485.5 292.0 485.5C296.5 485.5 303.0 484.6 307.0 483.0C311.0 481.4 313.5 478.8 316.0 476.0C318.5 473.2 320.0 471.3 322.0 466.0C324.0 460.7 326.7 452.2 328.0 444.0C329.3 435.8 329.3 424.3 330.0 417.0C330.7 409.7 332.3 408.3 332.0 400.0C331.7 391.7 330.0 377.7 328.0 367.0C326.0 356.3 322.7 345.7 320.0 336.0C317.3 326.3 315.3 316.3 312.0 309.0C308.7 301.7 305.3 296.3 300.0 292.0C294.7 287.7 294.2 284.5 280.0 283.0C265.8 281.5 229.7 279.8 215.0 283.0Z" fill="none" stroke="#7a7a7a" stroke-width="7.4"/><path d="M215.0 283.0C200.3 286.2 199.3 294.2 192.0 302.0C184.7 309.8 177.7 321.7 171.0 330.0C164.3 338.3 156.8 344.0 152.0 352.0C147.2 360.0 144.2 370.0 142.0 378.0C139.8 386.0 139.2 394.8 139.0 400.0C138.8 405.2 142.3 408.8 141.0 409.0C139.7 409.2 133.8 404.3 131.0 401.0C128.2 397.7 125.3 394.7 124.0 389.0C122.7 383.3 124.2 374.2 123.0 367.0C121.8 359.8 120.0 350.8 117.0 346.0C114.0 341.2 109.2 337.3 105.0 338.0C100.8 338.7 95.5 344.3 92.0 350.0C88.5 355.7 85.2 364.5 84.0 372.0C82.8 379.5 84.0 387.8 85.0 395.0C86.0 402.2 87.3 409.0 90.0 415.0C92.7 421.0 97.2 426.8 101.0 431.0C104.8 435.2 108.3 437.5 113.0 440.0C117.7 442.5 124.0 444.3 129.0 446.0C134.0 447.7 139.2 448.2 143.0 450.0C146.8 451.8 149.8 454.0 152.0 457.0C154.2 460.0 154.2 464.3 156.0 468.0C157.8 471.7 158.8 476.0 163.0 479.0C167.2 482.0 175.3 484.8 181.0 486.0C186.7 487.2 192.5 486.5 197.0 486.0C201.5 485.5 204.2 482.6 208.0 483.0C211.8 483.4 215.8 487.2 220.0 488.5C224.2 489.8 228.5 490.6 233.0 491.0C237.5 491.4 242.8 491.7 247.0 491.0C251.2 490.3 255.0 488.5 258.0 487.0C261.0 485.5 262.5 483.4 265.0 482.0C267.5 480.6 270.5 478.3 273.0 478.5C275.5 478.7 276.8 481.8 280.0 483.0C283.2 484.2 287.5 485.5 292.0 485.5C296.5 485.5 303.0 484.6 307.0 483.0C311.0 481.4 313.5 478.8 316.0 476.0C318.5 473.2 320.0 471.3 322.0 466.0C324.0 460.7 326.7 452.2 328.0 444.0C329.3 435.8 329.3 424.3 330.0 417.0C330.7 409.7 332.3 408.3 332.0 400.0C331.7 391.7 330.0 377.7 328.0 367.0C326.0 356.3 322.7 345.7 320.0 336.0C317.3 326.3 315.3 316.3 312.0 309.0C308.7 301.7 305.3 296.3 300.0 292.0C294.7 287.7 294.2 284.5 280.0 283.0C265.8 281.5 229.7 279.8 215.0 283.0Z" fill="none" stroke="#dcdcdc" stroke-width="6.2"/></g>
<path d="M215.0 283.0C200.3 286.2 199.3 294.2 192.0 302.0C184.7 309.8 177.7 321.7 171.0 330.0C164.3 338.3 156.8 344.0 152.0 352.0C147.2 360.0 144.2 370.0 142.0 378.0C139.8 386.0 139.2 394.8 139.0 400.0C138.8 405.2 142.3 408.8 141.0 409.0C139.7 409.2 133.8 404.3 131.0 401.0C128.2 397.7 125.3 394.7 124.0 389.0C122.7 383.3 124.2 374.2 123.0 367.0C121.8 359.8 120.0 350.8 117.0 346.0C114.0 341.2 109.2 337.3 105.0 338.0C100.8 338.7 95.5 344.3 92.0 350.0C88.5 355.7 85.2 364.5 84.0 372.0C82.8 379.5 84.0 387.8 85.0 395.0C86.0 402.2 87.3 409.0 90.0 415.0C92.7 421.0 97.2 426.8 101.0 431.0C104.8 435.2 108.3 437.5 113.0 440.0C117.7 442.5 124.0 444.3 129.0 446.0C134.0 447.7 139.2 448.2 143.0 450.0C146.8 451.8 149.8 454.0 152.0 457.0C154.2 460.0 154.2 464.3 156.0 468.0C157.8 471.7 158.8 476.0 163.0 479.0C167.2 482.0 175.3 484.8 181.0 486.0C186.7 487.2 192.5 486.5 197.0 486.0C201.5 485.5 204.2 482.6 208.0 483.0C211.8 483.4 215.8 487.2 220.0 488.5C224.2 489.8 228.5 490.6 233.0 491.0C237.5 491.4 242.8 491.7 247.0 491.0C251.2 490.3 255.0 488.5 258.0 487.0C261.0 485.5 262.5 483.4 265.0 482.0C267.5 480.6 270.5 478.3 273.0 478.5C275.5 478.7 276.8 481.8 280.0 483.0C283.2 484.2 287.5 485.5 292.0 485.5C296.5 485.5 303.0 484.6 307.0 483.0C311.0 481.4 313.5 478.8 316.0 476.0C318.5 473.2 320.0 471.3 322.0 466.0C324.0 460.7 326.7 452.2 328.0 444.0C329.3 435.8 329.3 424.3 330.0 417.0C330.7 409.7 332.3 408.3 332.0 400.0C331.7 391.7 330.0 377.7 328.0 367.0C326.0 356.3 322.7 345.7 320.0 336.0C317.3 326.3 315.3 316.3 312.0 309.0C308.7 301.7 305.3 296.3 300.0 292.0C294.7 287.7 294.2 284.5 280.0 283.0C265.8 281.5 229.7 279.8 215.0 283.0Z" fill="none" stroke="#7a7a7a" stroke-width="0.8"/>
<path d="M193.0 301.0C189.0 304.8 186.7 308.2 183.0 313.0C179.3 317.8 174.7 325.2 171.0 330.0C167.3 334.8 164.2 338.3 161.0 342.0C157.8 345.7 154.5 348.2 152.0 352.0C149.5 355.8 147.7 360.7 146.0 365.0C144.3 369.3 143.1 373.8 142.0 378.0C140.9 382.2 139.9 386.0 139.5 390.0C139.1 394.0 139.1 398.2 139.5 402.0C139.9 405.8 140.8 410.0 142.0 413.0C143.2 416.0 145.2 419.5 147.0 420.0C148.8 420.5 151.0 417.7 153.0 416.0C155.0 414.3 156.8 411.5 159.0 410.0C161.2 408.5 162.8 409.0 166.0 407.0C169.2 405.0 174.0 401.2 178.0 398.0C182.0 394.8 186.8 391.2 190.0 388.0C193.2 384.8 194.9 382.0 197.0 379.0C199.1 376.0 201.5 372.8 202.5 370.0C203.5 367.2 203.4 364.7 203.0 362.0C202.6 359.3 199.3 356.5 200.0 354.0C200.7 351.5 204.8 349.2 207.0 347.0C209.2 344.8 211.5 343.0 213.2 341.0C214.9 339.0 216.1 337.2 217.0 335.0C217.9 332.8 219.5 330.5 218.5 328.0C217.5 325.5 213.6 322.3 211.0 320.0C208.4 317.7 203.8 317.3 203.0 314.0C202.2 310.7 205.3 304.0 206.0 300.0C206.7 296.0 209.2 289.8 207.0 290.0C204.8 290.2 197.0 297.2 193.0 301.0ZM262.0 281.0C263.7 279.8 273.7 284.2 280.0 286.0C286.3 287.8 295.5 289.7 300.0 292.0C304.5 294.3 305.0 297.2 307.0 300.0C309.0 302.8 310.5 305.3 312.0 309.0C313.5 312.7 314.7 317.5 316.0 322.0C317.3 326.5 318.7 331.2 320.0 336.0C321.3 340.8 322.7 345.8 324.0 351.0C325.3 356.2 326.9 361.5 328.0 367.0C329.1 372.5 329.8 378.5 330.5 384.0C331.2 389.5 331.8 396.0 332.0 400.0C332.2 404.0 331.8 405.5 331.5 408.0C331.2 410.5 332.1 413.2 330.0 415.0C327.9 416.8 322.8 417.8 319.0 419.0C315.2 420.2 309.5 423.5 307.0 422.5C304.5 421.5 304.8 416.1 304.0 413.0C303.2 409.9 302.0 407.0 302.0 404.0C302.0 401.0 303.2 398.0 304.0 395.0C304.8 392.0 308.3 386.8 307.0 386.0C305.7 385.2 299.7 388.8 296.0 390.0C292.3 391.2 287.7 395.0 285.0 393.5C282.3 392.0 281.3 384.9 280.0 381.0C278.7 377.1 278.0 373.2 277.0 370.0C276.0 366.8 275.0 364.7 274.0 362.0C273.0 359.3 272.7 356.2 271.0 354.0C269.3 351.8 266.2 350.8 264.0 349.0C261.8 347.2 257.8 344.5 258.0 343.0C258.2 341.5 263.0 341.2 265.0 340.0C267.0 338.8 269.7 337.2 270.0 335.5C270.3 333.8 267.7 331.8 267.0 330.0C266.3 328.2 265.5 326.5 266.0 325.0C266.5 323.5 268.8 322.3 270.0 321.0C271.2 319.7 273.0 318.3 273.0 317.0C273.0 315.7 270.8 314.3 270.0 313.0C269.2 311.7 268.1 311.0 268.0 309.0C267.9 307.0 269.2 303.7 269.5 301.0C269.8 298.3 271.2 296.3 270.0 293.0C268.8 289.7 260.3 282.2 262.0 281.0Z" fill="#141414" stroke="#000" stroke-width="1.2"/>
<g clip-path="url(#cp)"><path d="M297.5 352.3a9 9 0 1 0 18 0a9 9 0 1 0 -18 0ZM170.500 337.500A11 11 0 0 1 186.500 353.500ZM294.0 347.5C294.9 341.5 289.5 338.1 282.4 337.1C275.4 336.0 270.9 339.3 263.5 343.0C269.5 348.7 272.9 353.1 279.9 354.1C287.0 355.2 293.1 353.5 294.0 347.5ZM303.5 338.0C309.1 337.5 311.0 331.8 310.5 325.0C309.9 318.3 306.0 314.8 301.0 308.8C297.1 315.6 293.8 319.6 294.4 326.4C295.0 333.2 297.9 338.5 303.5 338.0ZM298.8 361.7C294.0 358.8 289.2 361.9 286.0 367.3C282.7 372.7 284.0 377.6 284.7 385.0C291.6 382.2 296.5 381.1 299.8 375.7C303.0 370.3 303.6 364.6 298.8 361.7ZM310.0 365.0C306.2 367.3 306.7 371.7 309.2 375.9C311.8 380.0 315.6 380.9 321.0 383.0C321.5 377.2 322.6 373.4 320.0 369.3C317.5 365.1 313.8 362.7 310.0 365.0ZM290.5 331.0C290.6 327.4 291.7 320.2 287.8 316.0C284.3 312.3 280.2 313.3 273.0 312.3C273.5 319.5 272.2 323.5 275.7 327.3C279.7 331.5 286.9 330.8 290.5 331.0ZM285.8 308.8C289.5 306.4 289.2 302.3 286.7 298.5C284.3 294.6 280.5 294.1 275.3 292.3C274.7 297.8 273.6 301.4 276.1 305.3C278.5 309.1 282.1 311.2 285.8 308.8ZM296.0 300.0C296.1 298.4 296.8 295.5 295.5 292.8C294.3 290.4 292.7 290.0 290.0 288.0C290.0 291.3 289.3 292.8 290.5 295.2C291.9 297.9 294.7 299.2 296.0 300.0ZM317.0 345.0C317.0 348.0 316.3 353.5 318.4 359.5C320.2 364.9 322.3 366.6 326.0 372.0C325.7 365.5 326.4 362.9 324.6 357.5C322.6 351.4 318.8 347.4 317.0 345.0ZM313.0 318.0C313.5 315.9 314.8 312.2 313.7 308.1C312.7 304.5 310.8 303.5 308.0 300.0C307.4 304.4 306.3 306.3 307.3 309.9C308.4 313.9 311.5 316.5 313.0 318.0ZM322.3 390.0C318.4 391.9 310.2 394.4 306.8 401.2C303.7 407.3 306.0 411.5 307.0 420.4C314.7 415.9 319.5 415.2 322.5 409.2C326.0 402.3 323.1 394.2 322.3 390.0ZM185.8 328.0C187.9 327.1 192.3 325.8 194.6 322.1C196.7 318.8 195.8 316.5 196.0 311.6C191.7 313.9 189.2 314.2 187.2 317.5C184.9 321.2 185.7 325.7 185.8 328.0ZM190.0 339.0C191.3 344.5 195.9 345.9 200.9 344.7C205.8 343.6 207.8 339.4 211.5 334.0C205.8 330.8 202.2 327.9 197.2 329.1C192.2 330.2 188.7 333.5 190.0 339.0ZM178.6 353.7C174.9 358.5 177.4 363.6 182.4 367.4C187.3 371.2 192.4 370.2 200.0 370.0C198.2 362.6 197.8 357.5 192.8 353.7C187.9 349.9 182.3 348.9 178.6 353.7ZM168.4 355.7C163.8 352.5 159.6 354.2 157.0 357.9C154.4 361.7 155.9 365.9 157.0 372.0C163.1 371.0 167.6 370.9 170.2 367.2C172.8 363.4 173.0 358.9 168.4 355.7ZM192.0 376.3C185.9 376.2 173.9 374.4 164.9 380.8C156.9 386.6 156.9 393.3 152.0 405.0C164.7 404.1 171.1 406.2 179.1 400.5C188.1 394.0 190.1 382.1 192.0 376.3ZM146.0 380.0C144.9 382.7 142.4 387.4 141.8 393.7C141.2 399.3 142.2 401.7 143.0 408.0C145.2 402.0 146.6 399.9 147.2 394.3C147.9 388.0 146.5 382.9 146.0 380.0ZM170.0 338.0C171.7 336.8 175.2 335.1 177.0 331.5C178.6 328.3 177.9 326.3 178.0 322.0C174.6 324.7 172.6 325.3 171.0 328.5C169.2 332.1 169.9 336.0 170.0 338.0Z" fill="#414141" stroke="#000" stroke-width="0.7"/><path d="M294.0 347.5L280.3 345.5M303.5 338.0L302.4 324.9M298.8 361.7L292.5 372.2M310.0 365.0L314.9 373.1M285.8 308.8L281.1 301.4M322.3 390.0L307.0 420.4M317.7 399.1L313.4 391.6M317.7 399.1L326.3 398.1M314.3 405.8L310.1 398.3M314.3 405.8L322.9 404.8M311.0 412.5L306.7 405.0M311.0 412.5L319.6 411.5M190.0 339.0L199.7 336.8M178.6 353.7L188.2 361.0M168.4 355.7L163.3 363.0M192.0 376.3L152.0 405.0M180.0 384.9L179.8 372.8M180.0 384.9L191.4 388.9M171.2 391.2L171.0 379.2M171.2 391.2L182.6 395.2M162.4 397.5L162.2 385.5M162.4 397.5L173.8 401.6" fill="none" stroke="#000" stroke-width="3"/><path d="M294.0 347.5L280.3 345.5M303.5 338.0L302.4 324.9M298.8 361.7L292.5 372.2M310.0 365.0L314.9 373.1M285.8 308.8L281.1 301.4M322.3 390.0L307.0 420.4M317.7 399.1L313.4 391.6M317.7 399.1L326.3 398.1M314.3 405.8L310.1 398.3M314.3 405.8L322.9 404.8M311.0 412.5L306.7 405.0M311.0 412.5L319.6 411.5M190.0 339.0L199.7 336.8M178.6 353.7L188.2 361.0M168.4 355.7L163.3 363.0M192.0 376.3L152.0 405.0M180.0 384.9L179.8 372.8M180.0 384.9L191.4 388.9M171.2 391.2L171.0 379.2M171.2 391.2L182.6 395.2M162.4 397.5L162.2 385.5M162.4 397.5L173.8 401.6" fill="none" stroke="#141414" stroke-width="1.9"/></g>
<path d="M105.0 337.5C101.7 337.3 98.8 340.6 96.0 344.0C93.2 347.4 90.0 353.3 88.0 358.0C86.0 362.7 84.5 367.5 84.0 372.0C83.5 376.5 84.2 381.3 85.0 385.0C85.8 388.7 87.2 391.5 89.0 394.0C90.8 396.5 93.3 398.6 96.0 400.0C98.7 401.4 102.0 402.9 105.0 402.7C108.0 402.5 111.3 400.8 114.0 399.0C116.7 397.2 119.3 395.2 121.0 392.0C122.7 388.8 123.6 384.2 124.0 380.0C124.4 375.8 124.2 371.3 123.5 367.0C122.8 362.7 121.2 357.7 120.0 354.0C118.8 350.3 118.5 347.8 116.0 345.0C113.5 342.2 108.3 337.7 105.0 337.5Z" fill="#141414" stroke="#000" stroke-width="1.2"/>
<path d="M105.0 342.6C102.3 342.4 100.0 345.2 97.8 348.1C95.5 351.1 92.9 356.2 91.3 360.2C89.8 364.2 88.6 368.4 88.2 372.2C87.8 376.1 88.3 380.2 89.0 383.4C89.6 386.6 90.7 389.0 92.2 391.1C93.6 393.3 95.6 395.1 97.8 396.3C99.9 397.5 102.5 398.8 105.0 398.6C107.4 398.5 110.0 397.0 112.2 395.4C114.3 393.9 116.4 392.1 117.8 389.4C119.1 386.7 119.8 382.7 120.2 379.1C120.5 375.5 120.3 371.6 119.8 367.9C119.2 364.2 118.0 359.9 117.0 356.7C116.0 353.6 115.8 351.4 113.8 349.0C111.8 346.6 107.6 342.7 105.0 342.6Z" fill="#414141" stroke="#000" stroke-width="0.7"/>
<g clip-path="url(#ct)"><path d="M104.500 399L106 343M104.800 390l-13-10M104.800 390l13-9M105.200 375l-14-9M105.200 375l14-8M105.600 360l-10-7M105.600 360l10-6M104.600 396l-7-4M104.600 396l8-4" fill="none" stroke="#000" stroke-width="3.2"/><path d="M104.500 399L106 343M104.800 390l-13-10M104.800 390l13-9M105.200 375l-14-9M105.200 375l14-8M105.600 360l-10-7M105.600 360l10-6M104.600 396l-7-4M104.600 396l8-4" fill="none" stroke="#141414" stroke-width="2"/></g>
<path d="M207.0 138.0C207.8 134.2 199.8 140.7 197.0 142.5C194.2 144.3 192.2 147.1 190.0 149.0C187.8 150.9 185.7 152.0 184.0 154.0C182.3 156.0 181.7 159.2 180.0 161.0C178.3 162.8 175.5 163.2 174.0 165.0C172.5 166.8 172.5 170.0 171.0 172.0C169.5 174.0 166.3 174.8 165.0 177.0C163.7 179.2 164.0 182.3 163.0 185.0C162.0 187.7 159.8 190.0 159.0 193.0C158.2 196.0 158.8 200.0 158.0 203.0C157.2 206.0 155.2 208.0 154.0 211.0C152.8 214.0 152.3 218.0 151.0 221.0C149.7 224.0 147.3 226.3 146.0 229.0C144.7 231.7 144.7 234.7 143.0 237.0C141.3 239.3 137.8 240.7 136.0 243.0C134.2 245.3 133.4 248.5 132.0 251.0C130.6 253.5 128.4 255.5 127.5 258.0C126.6 260.5 126.8 263.7 126.5 266.0C126.2 268.3 125.2 269.8 125.5 272.0C125.8 274.2 127.3 276.5 128.0 279.0C128.7 281.5 128.2 285.0 129.5 287.0C130.8 289.0 134.1 289.3 136.0 291.0C137.9 292.7 138.7 295.7 141.0 297.0C143.3 298.3 147.2 298.0 150.0 299.0C152.8 300.0 155.2 302.3 158.0 303.0C160.8 303.7 164.0 302.7 167.0 303.0C170.0 303.3 173.2 305.2 176.0 305.0C178.8 304.8 181.2 302.7 184.0 302.0C186.8 301.3 190.5 302.2 193.0 301.0C195.5 299.8 196.8 296.8 199.0 295.0C201.2 293.2 204.2 292.5 206.0 290.0C207.8 287.5 208.7 284.0 210.0 280.0C211.3 276.0 214.0 271.0 214.0 266.0C214.0 261.0 212.0 255.3 210.0 250.0C208.0 244.7 205.0 239.8 202.0 234.0C199.0 228.2 194.3 222.3 192.0 215.0C189.7 207.7 188.0 198.3 188.0 190.0C188.0 181.7 188.8 173.7 192.0 165.0C195.2 156.3 206.2 141.8 207.0 138.0ZM295.0 140.0C295.2 137.2 302.2 143.2 305.0 145.0C307.8 146.8 309.7 149.0 312.0 151.0C314.3 153.0 317.2 154.8 319.0 157.0C320.8 159.2 321.5 161.8 323.0 164.0C324.5 166.2 326.7 167.7 328.0 170.0C329.3 172.3 329.7 175.7 331.0 178.0C332.3 180.3 334.8 181.5 336.0 184.0C337.2 186.5 336.8 190.3 338.0 193.0C339.2 195.7 341.7 197.7 343.0 200.0C344.3 202.3 344.3 205.0 346.0 207.0C347.7 209.0 351.2 210.0 353.0 212.0C354.8 214.0 355.3 216.8 357.0 219.0C358.7 221.2 361.5 222.7 363.0 225.0C364.5 227.3 364.7 230.7 366.0 233.0C367.3 235.3 369.8 236.7 371.0 239.0C372.2 241.3 372.0 244.7 373.0 247.0C374.0 249.3 376.3 250.7 377.0 253.0C377.7 255.3 377.2 258.5 377.0 261.0C376.8 263.5 376.8 265.8 376.0 268.0C375.2 270.2 372.8 271.7 372.0 274.0C371.2 276.3 372.2 279.8 371.0 282.0C369.8 284.2 366.7 285.0 365.0 287.0C363.3 289.0 363.0 292.3 361.0 294.0C359.0 295.7 355.3 295.7 353.0 297.0C350.7 298.3 349.3 301.2 347.0 302.0C344.7 302.8 341.7 301.5 339.0 302.0C336.3 302.5 333.8 304.8 331.0 305.0C328.2 305.2 325.0 303.5 322.0 303.0C319.0 302.5 315.7 302.8 313.0 302.0C310.3 301.2 308.2 299.3 306.0 298.0C303.8 296.7 302.0 296.0 300.0 294.0C298.0 292.0 296.0 290.0 294.0 286.0C292.0 282.0 289.0 275.0 288.0 270.0C287.0 265.0 287.0 261.7 288.0 256.0C289.0 250.3 291.7 242.8 294.0 236.0C296.3 229.2 299.7 222.7 302.0 215.0C304.3 207.3 307.7 198.8 308.0 190.0C308.3 181.2 306.2 170.3 304.0 162.0C301.8 153.7 294.8 142.8 295.0 140.0Z" fill="#0e0e0e" stroke="#000" stroke-width="1.2"/>
<path d="M165 193Q174.0 208.2 159 216M146 250Q147.2 237.1 159 235.5M172 238Q177.5 246.2 168 253M148 236Q158.0 242.5 156 252M152 268Q152.8 254.5 167 256M137 266Q128.0 278.2 143 283M159 267Q171.8 280.0 162 293M179 268Q188.0 247.5 197 272M176 292Q186.8 294.5 187 282M196 275Q208.5 283.0 200 291M320 188Q321.0 210.5 340 212M310 238Q322.5 224.2 332 251M300 243Q312.2 249.2 305 260M353 236Q370.5 244.8 361 261M341 251Q351.8 262.8 334 270M311 262Q324.8 257.2 322 275M350 282Q346.8 264.8 363 267M329 278Q338.0 294.0 347 286M314 285Q315.5 298.8 326 296" fill="none" stroke="#1c1c1c" stroke-width="3.7"/><path d="M165 193Q174.0 208.2 159 216M146 250Q147.2 237.1 159 235.5M172 238Q177.5 246.2 168 253M148 236Q158.0 242.5 156 252M152 268Q152.8 254.5 167 256M137 266Q128.0 278.2 143 283M159 267Q171.8 280.0 162 293M179 268Q188.0 247.5 197 272M176 292Q186.8 294.5 187 282M196 275Q208.5 283.0 200 291M320 188Q321.0 210.5 340 212M310 238Q322.5 224.2 332 251M300 243Q312.2 249.2 305 260M353 236Q370.5 244.8 361 261M341 251Q351.8 262.8 334 270M311 262Q324.8 257.2 322 275M350 282Q346.8 264.8 363 267M329 278Q338.0 294.0 347 286M314 285Q315.5 298.8 326 296" fill="none" stroke="#303030" stroke-width="2.7"/>
<path d="M165 193Q174.0 208.2 159 216M172 238Q177.5 246.2 168 253M179 268Q188.0 247.5 197 272M196 275Q208.5 283.0 200 291M320 188Q321.0 210.5 340 212M310 238Q322.5 224.2 332 251M300 243Q312.2 249.2 305 260M311 262Q324.8 257.2 322 275" fill="none" stroke="#9b5a26" stroke-width="2.1"/>
<path d="M248.0 128.0C240.3 128.0 232.2 128.7 225.0 130.5C217.8 132.3 210.8 134.8 205.0 139.0C199.2 143.2 193.8 149.2 190.0 156.0C186.2 162.8 183.3 172.7 182.0 180.0C180.7 187.3 181.3 193.3 182.0 200.0C182.7 206.7 184.0 213.7 186.0 220.0C188.0 226.3 191.7 232.2 194.0 238.0C196.3 243.8 197.7 249.3 200.0 255.0C202.3 260.7 200.0 267.8 208.0 272.0C216.0 276.2 234.7 280.0 248.0 280.0C261.3 280.0 280.0 276.2 288.0 272.0C296.0 267.8 293.7 260.8 296.0 255.0C298.3 249.2 299.7 243.5 302.0 237.0C304.3 230.5 308.0 222.2 310.0 216.0C312.0 209.8 313.3 206.0 314.0 200.0C314.7 194.0 315.3 187.3 314.0 180.0C312.7 172.7 309.8 162.8 306.0 156.0C302.2 149.2 296.8 143.2 291.0 139.0C285.2 134.8 278.2 132.3 271.0 130.5C263.8 128.7 255.7 128.0 248.0 128.0Z" fill="#3b3b3b" stroke="#000" stroke-width="1.2"/>
<path d="M196 192Q196 174.500 210 170T230 186L220 194ZM298.500 192Q298.500 174.500 284.500 170T264.500 186L274.500 194Z" fill="#95501e" stroke="#000" stroke-width="0.8"/>
<path d="M189 221Q193 236 201.500 243L203 226ZM305.500 221Q301.500 236 293 243L291.500 226Z" fill="#95501e" stroke="#000" stroke-width="0.8"/>
<path d="M228.0 268.0C230.0 265.2 231.7 263.0 236.0 262.0C240.3 261.0 249.7 261.0 254.0 262.0C258.3 263.0 259.7 265.2 262.0 268.0C264.3 270.8 268.7 276.6 268.0 279.0C267.3 281.4 261.8 281.8 258.0 282.5C254.2 283.2 249.3 283.0 245.0 283.0C240.7 283.0 235.5 283.2 232.0 282.5C228.5 281.8 224.7 281.4 224.0 279.0C223.3 276.6 226.0 270.8 228.0 268.0Z" fill="#8a4718" stroke="#000" stroke-width="0.9"/>
<path d="M246.6 142.5C244.6 142.5 242.3 142.9 241.0 144.5C239.7 146.1 239.5 148.6 239.0 152.0C238.5 155.4 238.5 160.3 238.0 165.0C237.5 169.7 237.1 175.2 236.0 180.0C234.9 184.8 233.8 189.5 231.5 194.0C229.2 198.5 225.6 203.2 222.0 207.0C218.4 210.8 213.2 213.5 210.0 217.0C206.8 220.5 204.8 224.2 203.0 228.0C201.2 231.8 200.1 235.3 199.5 240.0C198.9 244.7 199.2 251.0 199.5 256.0C199.8 261.0 200.1 266.0 201.5 270.0C202.9 274.0 205.4 277.6 208.0 280.0C210.6 282.4 214.0 283.7 217.0 284.3C220.0 284.9 223.6 284.1 226.0 283.5C228.4 282.9 229.8 282.4 231.5 280.5C233.2 278.6 235.0 274.5 236.5 272.0C238.0 269.5 239.1 266.9 240.5 265.5C241.9 264.1 243.5 263.5 245.0 263.5C246.5 263.5 247.9 264.1 249.5 265.5C251.1 266.9 252.7 269.5 254.5 272.0C256.3 274.5 258.4 278.5 260.5 280.5C262.6 282.5 264.2 283.2 267.0 283.8C269.8 284.4 273.8 284.9 277.0 284.3C280.2 283.7 283.4 282.2 286.0 280.0C288.6 277.8 290.8 274.7 292.5 271.0C294.2 267.3 295.7 262.8 296.5 258.0C297.3 253.2 298.0 246.8 297.5 242.0C297.0 237.2 295.8 233.2 293.5 229.0C291.2 224.8 287.6 220.7 284.0 217.0C280.4 213.3 275.6 210.8 272.0 207.0C268.4 203.2 264.8 198.5 262.5 194.0C260.2 189.5 259.1 184.8 258.0 180.0C256.9 175.2 256.5 169.7 256.0 165.0C255.5 160.3 255.5 155.4 255.0 152.0C254.5 148.6 254.4 146.1 253.0 144.5C251.6 142.9 248.6 142.5 246.6 142.5Z" fill="#fbfbfb" stroke="#000" stroke-width="1.2"/>
<ellipse cx="209.6" cy="192.4" rx="13.2" ry="14.1" fill="#0a0a0a" stroke="#141414" stroke-width="1.2"/>
<ellipse cx="208.9" cy="188" rx="2.9" ry="4.3" fill="#fff"/>
<ellipse cx="285" cy="192.4" rx="13.2" ry="14.1" fill="#0a0a0a" stroke="#141414" stroke-width="1.2"/>
<ellipse cx="284.3" cy="188" rx="2.9" ry="4.3" fill="#fff"/>
<path d="M245.7 222.3C242.1 222.3 238.0 222.3 235.0 223.2C232.0 224.1 229.2 225.6 227.5 227.5C225.8 229.4 224.9 231.8 225.0 234.5C225.1 237.2 226.3 240.8 228.0 243.5C229.7 246.2 232.1 249.2 235.0 250.8C237.9 252.4 242.1 253.3 245.7 253.3C249.3 253.3 253.5 252.4 256.5 250.8C259.5 249.2 261.9 246.2 263.5 243.5C265.1 240.8 266.3 237.2 266.4 234.5C266.5 231.8 265.6 229.4 264.0 227.5C262.4 225.6 259.6 224.1 256.5 223.2C253.4 222.3 249.3 222.3 245.7 222.3Z" fill="#0a0a0a" stroke="#0c0c0c" stroke-width="0.8"/>
<path d="M244.8 262.0C242.7 262.0 240.0 262.6 238.5 263.5C237.0 264.4 236.1 266.1 236.0 267.5C235.9 268.9 236.5 270.8 238.0 272.0C239.5 273.2 242.6 274.5 244.8 274.5C247.1 274.5 250.1 273.2 251.5 272.0C252.9 270.8 253.4 268.9 253.3 267.5C253.2 266.1 252.4 264.4 251.0 263.5C249.6 262.6 246.9 262.0 244.8 262.0Z" fill="#f1929c" stroke="#4a2020" stroke-width="0.8"/>
</g>
<path d="M803.0 420.5C795.3 420.5 786.7 421.5 780.0 423.0C773.3 424.5 766.7 427.8 763.0 429.5C759.3 431.2 760.5 430.6 758.0 433.0C755.5 435.4 751.2 439.2 748.0 444.0C744.8 448.8 740.9 456.0 739.0 462.0C737.1 468.0 736.7 473.7 736.5 480.0C736.3 486.3 736.8 493.3 738.0 500.0C739.2 506.7 741.8 513.7 744.0 520.0C746.2 526.3 749.3 532.7 751.0 538.0C752.7 543.3 753.0 547.5 754.0 552.0C755.0 556.5 755.3 561.5 757.0 565.0C758.7 568.5 761.0 571.2 764.0 573.0C767.0 574.8 771.7 575.2 775.0 575.5C778.3 575.8 781.5 575.1 784.0 574.8C786.5 574.4 786.8 573.7 790.0 573.4C793.2 573.1 798.7 573.2 803.0 573.2C807.3 573.2 812.8 573.1 816.0 573.4C819.2 573.7 819.5 574.4 822.0 574.8C824.5 575.1 827.7 575.8 831.0 575.5C834.3 575.2 839.0 574.8 842.0 573.0C845.0 571.2 847.3 568.5 849.0 565.0C850.7 561.5 851.0 556.5 852.0 552.0C853.0 547.5 853.3 543.3 855.0 538.0C856.7 532.7 859.8 526.3 862.0 520.0C864.2 513.7 866.8 506.7 868.0 500.0C869.2 493.3 869.7 486.3 869.5 480.0C869.3 473.7 868.9 468.0 867.0 462.0C865.1 456.0 861.7 449.2 858.0 444.0C854.3 438.8 850.3 434.0 845.0 430.5C839.7 427.0 833.0 424.7 826.0 423.0C819.0 421.3 810.7 420.5 803.0 420.5Z" fill="#2f2f2f"/>
<rect x="736.100" y="421" width="133.400" height="155.600" fill="none" stroke="#b0b0b0" stroke-width="1.700"/>
<path d="M787.500 498.200h30.500M802.700 483v30.500" stroke="#8f8f8f" stroke-width="0.800"/>
<circle cx="726.6" cy="410.9" r="8.300" fill="#5b616a"/>
<circle cx="879" cy="410.9" r="8.300" fill="#5b616a"/>
<circle cx="726.6" cy="585.9" r="8.300" fill="#5b616a"/>
<circle cx="879" cy="585.9" r="8.300" fill="#5b616a"/>
<path d="M722.500 406.800l8.200 8.200m0-8.200l-8.200 8.200" stroke="#fff" stroke-width="1.500" fill="none"/>
<path d="M881.600 408.600a4 4 0 1 0 1 3.600" stroke="#e4e7ea" stroke-width="1.400" fill="none"/><path d="M883.800 406.300v4h-4z" fill="#f2f3f5"/>
<rect x="723.400" y="585.300" width="6.400" height="4.800" rx="0.800" fill="none" stroke="#fff" stroke-width="1"/><path d="M724.600 585.300v-1.500a2 2 0 0 1 4 0v1.500" stroke="#fff" stroke-width="1" fill="none"/><circle cx="726.600" cy="587.700" r="0.700" fill="#fff"/>
<path d="M875.800 582.700l6.400 6.400M875.800 585.700v-3h3M882.200 586.100v3h-3" stroke="#fff" stroke-width="1.200" fill="none"/>
<g font-family="Liberation Sans, sans-serif" font-size="7" fill="#6e6e6e"><text x="803" y="411.500" text-anchor="middle">2.955"</text><text x="888" y="497.500">3.428"</text></g>
<path d="M767.300 435.800v19l4.300-4.100 3.300 7.400 3.300-1.400-3.300-7.300h6z" fill="#0c0c0c" stroke="#fff" stroke-width="1.200" stroke-linejoin="round"/>
</g>
<g opacity="0.5"><rect x="60" y="647" width="63" height="18" rx="2" fill="#f4f4f4"/><circle cx="70" cy="656" r="5.500" fill="none" stroke="#cfcfcf" stroke-width="0.800"/><circle cx="114" cy="656" r="5.500" fill="none" stroke="#cfcfcf" stroke-width="0.800"/><path d="M67.500 656h5M111.500 656h5M114 653.500v5" stroke="#cfcfcf" stroke-width="0.800"/><text x="92" y="658.500" text-anchor="middle" font-family="Liberation Sans, sans-serif" font-size="7" fill="#cfcfcf">100%</text></g>
<ellipse cx="88.200" cy="597.400" rx="69.500" ry="54" fill="#c9371c"/>
<g fill="#fff" font-family="Liberation Serif, serif" font-style="italic" font-weight="bold"><text x="33" y="595" font-size="33" textLength="78" lengthAdjust="spacingAndGlyphs"><tspan font-size="44">C</tspan>raft</text><text x="45" y="629" font-size="33" textLength="88" lengthAdjust="spacingAndGlyphs"><tspan font-size="44">S</tspan>arah</text></g>
<text x="130" y="587" text-anchor="middle" font-family="Liberation Serif, serif" font-weight="bold" font-size="8.500" fill="#fff" letter-spacing="0.300">WITH</text>
<path d="M116.500 590.500q7 3.500 14.500 0.500t13.500-2.200q2.500 1 1.500 2.700q-1-1.500-3-1q-5.500 4.700-13 4.900t-13.500-4.900z" fill="#fff"/>
<path d="M59 604q-12 6-11 18t10 11q6-2 4-7M100 607q10-9 24-9t14 9q-1 7-7 9M40 577q-6-8-3-12t6-2M106 571q4-5 3-2" fill="none" stroke="#fff" stroke-width="0.900" stroke-linecap="round"/>
</svg>
</body>
</html>
